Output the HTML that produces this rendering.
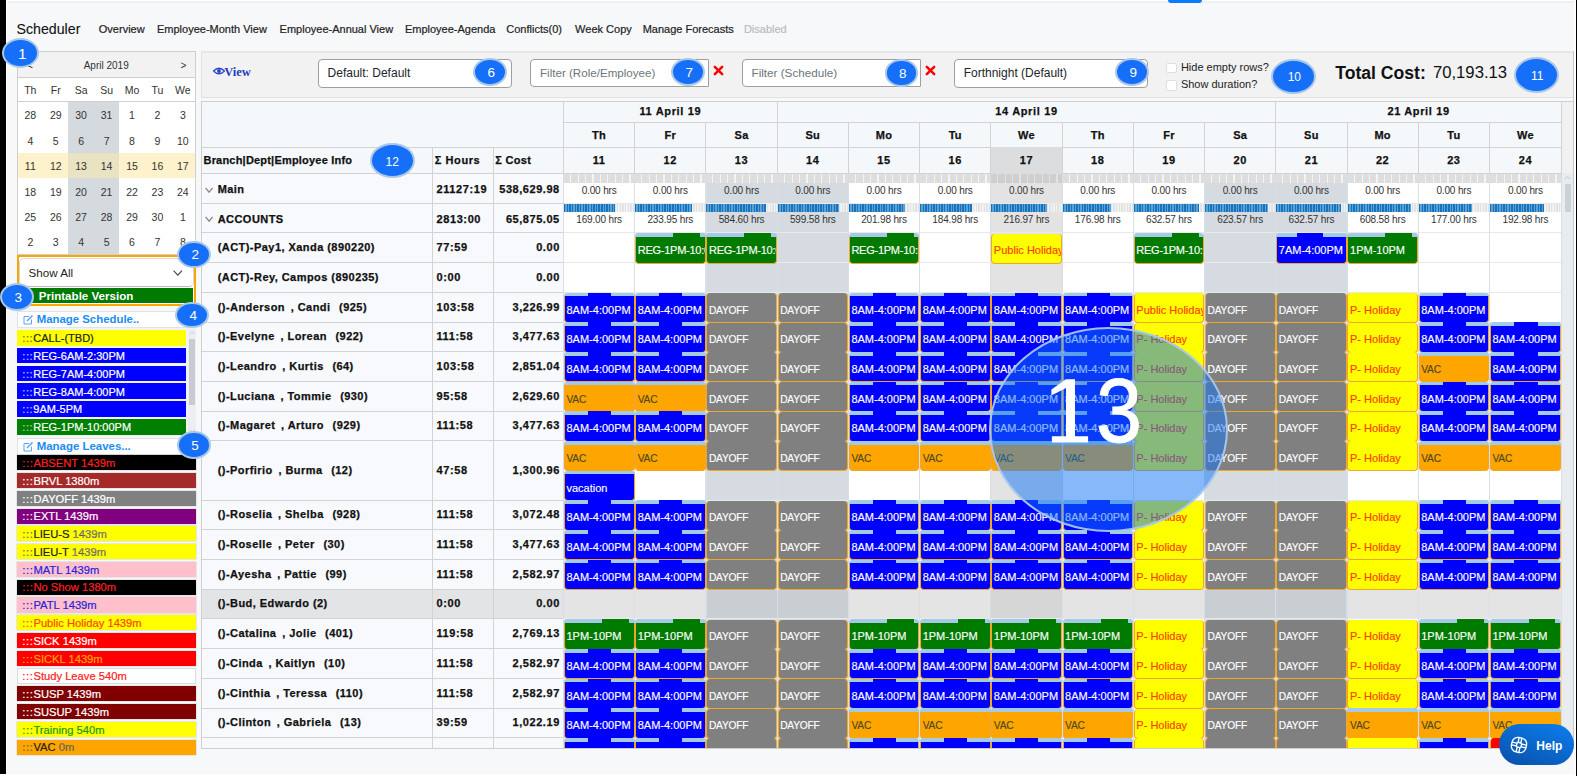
<!DOCTYPE html>
<html><head><meta charset="utf-8"><title>Scheduler</title><style>
*{margin:0;padding:0;box-sizing:border-box}
html,body{width:1577px;height:776px;overflow:hidden}
body{position:relative;background:#f6f8fa;font-family:"Liberation Sans",sans-serif;color:#222}
div{position:absolute}
.t{white-space:pre;line-height:1}
.badge{border-radius:50%;background:#156ff8;border:2px solid #a9c8e8;color:#fff;display:flex;align-items:center;justify-content:center;font-size:13px;line-height:1}
.blk{overflow:hidden}
</style></head>
<body>
<div style="left:0.00px;top:0.00px;width:1577.00px;height:1.00px;background:#fff"></div>
<div style="left:0.00px;top:0.00px;width:6.00px;height:776.00px;background:#000"></div>
<div style="left:6.00px;top:0.00px;width:1.00px;height:776.00px;background:#fdfdfd"></div>
<div style="left:7.00px;top:1.00px;width:1567.00px;height:2.20px;background:#eef1f4"></div>
<div style="left:1167.60px;top:0.00px;width:34.80px;height:3.00px;background:#0a7bff;border-radius:0 0 3px 3px"></div>
<div style="left:0.00px;top:774.00px;width:1577.00px;height:2.00px;background:#fff"></div>
<div class="t" style="left:16.50px;top:22.00px;font-size:14.2px;color:#111;-webkit-text-stroke:0.1px #111">Scheduler</div>
<div class="t" style="left:98.80px;top:23.60px;font-size:11px;color:#222;-webkit-text-stroke:0.2px #222">Overview</div>
<div class="t" style="left:157.00px;top:23.60px;font-size:11px;color:#222;-webkit-text-stroke:0.2px #222">Employee-Month View</div>
<div class="t" style="left:279.60px;top:23.60px;font-size:11px;color:#222;-webkit-text-stroke:0.2px #222">Employee-Annual View</div>
<div class="t" style="left:404.90px;top:23.60px;font-size:11px;color:#222;-webkit-text-stroke:0.2px #222">Employee-Agenda</div>
<div class="t" style="left:506.30px;top:23.60px;font-size:11px;color:#222;-webkit-text-stroke:0.2px #222">Conflicts(0)</div>
<div class="t" style="left:575.10px;top:23.60px;font-size:11px;color:#222;-webkit-text-stroke:0.2px #222">Week Copy</div>
<div class="t" style="left:642.70px;top:23.60px;font-size:11px;color:#222;-webkit-text-stroke:0.2px #222">Manage Forecasts</div>
<div class="t" style="left:743.90px;top:23.60px;font-size:11px;color:#bbb;-webkit-text-stroke:0.2px #bbb">Disabled</div>
<div style="left:16.80px;top:51.20px;width:179.50px;height:204.00px;border:1px solid #cfcfcf;background:#fff"></div>
<div style="left:17.80px;top:52.20px;width:177.50px;height:25.40px;background:#f2f2f2;border-bottom:1px solid #cfcfcf"></div>
<div class="t" style="left:83.70px;top:61.20px;font-size:10px;color:#333">April 2019</div>
<div class="t" style="left:180.50px;top:60.50px;font-size:10px;color:#333">&gt;</div>
<div class="t" style="left:27.00px;top:60.50px;font-size:10px;color:#333">&lt;</div>
<div style="left:17.80px;top:77.60px;width:177.50px;height:24.00px;background:#fff;border-bottom:1px solid #cfcfcf"></div>
<div class="t" style="left:18.30px;top:85.3px;width:24px;text-align:center;font-size:10.5px;color:#333">Th</div>
<div class="t" style="left:43.72px;top:85.3px;width:24px;text-align:center;font-size:10.5px;color:#333">Fr</div>
<div class="t" style="left:69.14px;top:85.3px;width:24px;text-align:center;font-size:10.5px;color:#333">Sa</div>
<div class="t" style="left:94.56px;top:85.3px;width:24px;text-align:center;font-size:10.5px;color:#333">Su</div>
<div class="t" style="left:119.98px;top:85.3px;width:24px;text-align:center;font-size:10.5px;color:#333">Mo</div>
<div class="t" style="left:145.40px;top:85.3px;width:24px;text-align:center;font-size:10.5px;color:#333">Tu</div>
<div class="t" style="left:170.82px;top:85.3px;width:24px;text-align:center;font-size:10.5px;color:#333">We</div>
<div style="left:68.40px;top:102.20px;width:50.80px;height:152.20px;background:#d5dadf"></div>
<div style="left:17.60px;top:152.80px;width:177.90px;height:25.40px;background:#fdf2cb"></div>
<div style="left:68.40px;top:152.80px;width:50.80px;height:25.40px;background:#e9e2c3"></div>
<div class="t" style="left:18.30px;top:110.40px;width:24px;text-align:center;font-size:10.5px;color:#333">28</div>
<div class="t" style="left:43.72px;top:110.40px;width:24px;text-align:center;font-size:10.5px;color:#333">29</div>
<div class="t" style="left:69.14px;top:110.40px;width:24px;text-align:center;font-size:10.5px;color:#333">30</div>
<div class="t" style="left:94.56px;top:110.40px;width:24px;text-align:center;font-size:10.5px;color:#333">31</div>
<div class="t" style="left:119.98px;top:110.40px;width:24px;text-align:center;font-size:10.5px;color:#333">1</div>
<div class="t" style="left:145.40px;top:110.40px;width:24px;text-align:center;font-size:10.5px;color:#333">2</div>
<div class="t" style="left:170.82px;top:110.40px;width:24px;text-align:center;font-size:10.5px;color:#333">3</div>
<div class="t" style="left:18.30px;top:135.80px;width:24px;text-align:center;font-size:10.5px;color:#333">4</div>
<div class="t" style="left:43.72px;top:135.80px;width:24px;text-align:center;font-size:10.5px;color:#333">5</div>
<div class="t" style="left:69.14px;top:135.80px;width:24px;text-align:center;font-size:10.5px;color:#333">6</div>
<div class="t" style="left:94.56px;top:135.80px;width:24px;text-align:center;font-size:10.5px;color:#333">7</div>
<div class="t" style="left:119.98px;top:135.80px;width:24px;text-align:center;font-size:10.5px;color:#333">8</div>
<div class="t" style="left:145.40px;top:135.80px;width:24px;text-align:center;font-size:10.5px;color:#333">9</div>
<div class="t" style="left:170.82px;top:135.80px;width:24px;text-align:center;font-size:10.5px;color:#333">10</div>
<div class="t" style="left:18.30px;top:161.20px;width:24px;text-align:center;font-size:10.5px;color:#333">11</div>
<div class="t" style="left:43.72px;top:161.20px;width:24px;text-align:center;font-size:10.5px;color:#333">12</div>
<div class="t" style="left:69.14px;top:161.20px;width:24px;text-align:center;font-size:10.5px;color:#333">13</div>
<div class="t" style="left:94.56px;top:161.20px;width:24px;text-align:center;font-size:10.5px;color:#333">14</div>
<div class="t" style="left:119.98px;top:161.20px;width:24px;text-align:center;font-size:10.5px;color:#333">15</div>
<div class="t" style="left:145.40px;top:161.20px;width:24px;text-align:center;font-size:10.5px;color:#333">16</div>
<div class="t" style="left:170.82px;top:161.20px;width:24px;text-align:center;font-size:10.5px;color:#333">17</div>
<div class="t" style="left:18.30px;top:186.60px;width:24px;text-align:center;font-size:10.5px;color:#333">18</div>
<div class="t" style="left:43.72px;top:186.60px;width:24px;text-align:center;font-size:10.5px;color:#333">19</div>
<div class="t" style="left:69.14px;top:186.60px;width:24px;text-align:center;font-size:10.5px;color:#333">20</div>
<div class="t" style="left:94.56px;top:186.60px;width:24px;text-align:center;font-size:10.5px;color:#333">21</div>
<div class="t" style="left:119.98px;top:186.60px;width:24px;text-align:center;font-size:10.5px;color:#333">22</div>
<div class="t" style="left:145.40px;top:186.60px;width:24px;text-align:center;font-size:10.5px;color:#333">23</div>
<div class="t" style="left:170.82px;top:186.60px;width:24px;text-align:center;font-size:10.5px;color:#333">24</div>
<div class="t" style="left:18.30px;top:212.00px;width:24px;text-align:center;font-size:10.5px;color:#333">25</div>
<div class="t" style="left:43.72px;top:212.00px;width:24px;text-align:center;font-size:10.5px;color:#333">26</div>
<div class="t" style="left:69.14px;top:212.00px;width:24px;text-align:center;font-size:10.5px;color:#333">27</div>
<div class="t" style="left:94.56px;top:212.00px;width:24px;text-align:center;font-size:10.5px;color:#333">28</div>
<div class="t" style="left:119.98px;top:212.00px;width:24px;text-align:center;font-size:10.5px;color:#333">29</div>
<div class="t" style="left:145.40px;top:212.00px;width:24px;text-align:center;font-size:10.5px;color:#333">30</div>
<div class="t" style="left:170.82px;top:212.00px;width:24px;text-align:center;font-size:10.5px;color:#333">1</div>
<div class="t" style="left:18.30px;top:237.40px;width:24px;text-align:center;font-size:10.5px;color:#333">2</div>
<div class="t" style="left:43.72px;top:237.40px;width:24px;text-align:center;font-size:10.5px;color:#333">3</div>
<div class="t" style="left:69.14px;top:237.40px;width:24px;text-align:center;font-size:10.5px;color:#333">4</div>
<div class="t" style="left:94.56px;top:237.40px;width:24px;text-align:center;font-size:10.5px;color:#333">5</div>
<div class="t" style="left:119.98px;top:237.40px;width:24px;text-align:center;font-size:10.5px;color:#333">6</div>
<div class="t" style="left:145.40px;top:237.40px;width:24px;text-align:center;font-size:10.5px;color:#333">7</div>
<div class="t" style="left:170.82px;top:237.40px;width:24px;text-align:center;font-size:10.5px;color:#333">8</div>
<div style="left:16.80px;top:255.30px;width:179.40px;height:50.70px;border:2px solid #ffa500;border-top-width:2.9px;border-right-width:2.8px;border-bottom-width:2.8px;background:#fff"></div>
<div style="left:19.00px;top:258.20px;width:174.70px;height:28.60px;background:#fff;border:1px solid #d9d9d9;border-bottom-color:#bdbdbd;border-radius:5px"></div>
<div class="t" style="left:28.60px;top:266.50px;font-size:11.6px;color:#222">Show All</div>
<svg style="position:absolute;left:173px;top:269.5px" width="10" height="7" viewBox="0 0 10 7"><path d="M0.6 0.6 L4.8 5.2 L9 0.6" fill="none" stroke="#444" stroke-width="1.1"/></svg>
<div style="left:19.00px;top:287.60px;width:174.30px;height:15.40px;background:#007a00"></div>
<div class="t" style="left:38.70px;top:289.50px;font-size:11.6px;font-weight:bold;color:#fff">Printable Version</div>
<div style="left:16.80px;top:311.30px;width:179.40px;height:16.60px;background:#fff;border:1px solid #e3e3e3"></div>
<svg style="position:absolute;left:23px;top:314.5px" width="10" height="10" viewBox="0 0 10 10"><path d="M6 1.5 H1 V9 H8.5 V4.5" fill="none" stroke="#5aa2f2" stroke-width="1"/><path d="M4 6 L9.5 0.5" stroke="#5aa2f2" stroke-width="1.5"/></svg>
<div class="t" style="left:36.70px;top:314.00px;font-size:11.4px;font-weight:bold;color:#1a8cf0">Manage Schedule..</div>
<div style="left:16.80px;top:328.00px;width:179.40px;height:109.00px;background:#f2f3f5"></div>
<div style="left:17.30px;top:329.90px;width:169.20px;height:15.70px;background:#ffff00"></div>
<div class="t" style="left:22.30px;top:333.10px;font-size:11px;color:#222;-webkit-text-stroke:0.2px #222"><span style="color:#8a8a40;letter-spacing:0.6px">:::</span>CALL-(TBD)</div>
<div style="left:17.30px;top:347.70px;width:169.20px;height:15.70px;background:#0000ff"></div>
<div class="t" style="left:22.30px;top:350.90px;font-size:11px;color:#fff;-webkit-text-stroke:0.2px #fff"><span style="color:#9999ff;letter-spacing:0.6px">:::</span>REG-6AM-2:30PM</div>
<div style="left:17.30px;top:365.50px;width:169.20px;height:15.70px;background:#0000ff"></div>
<div class="t" style="left:22.30px;top:368.70px;font-size:11px;color:#fff;-webkit-text-stroke:0.2px #fff"><span style="color:#9999ff;letter-spacing:0.6px">:::</span>REG-7AM-4:00PM</div>
<div style="left:17.30px;top:383.30px;width:169.20px;height:15.70px;background:#0000ff"></div>
<div class="t" style="left:22.30px;top:386.50px;font-size:11px;color:#fff;-webkit-text-stroke:0.2px #fff"><span style="color:#9999ff;letter-spacing:0.6px">:::</span>REG-8AM-4:00PM</div>
<div style="left:17.30px;top:401.10px;width:169.20px;height:15.70px;background:#0000ff"></div>
<div class="t" style="left:22.30px;top:404.30px;font-size:11px;color:#fff;-webkit-text-stroke:0.2px #fff"><span style="color:#9999ff;letter-spacing:0.6px">:::</span>9AM-5PM</div>
<div style="left:17.30px;top:418.90px;width:169.20px;height:15.70px;background:#008000"></div>
<div class="t" style="left:22.30px;top:422.10px;font-size:11px;color:#fff;-webkit-text-stroke:0.2px #fff"><span style="color:#80b080;letter-spacing:0.6px">:::</span>REG-1PM-10:00PM</div>
<div style="left:187.70px;top:328.50px;width:8.00px;height:108.00px;background:#eceef1"></div>
<div style="left:189.00px;top:338.60px;width:5.50px;height:66.00px;background:#c8ccd2"></div>
<svg style="position:absolute;left:188.5px;top:331px" width="6" height="4" viewBox="0 0 6 4"><path d="M0.5 3.5 L3 0.8 L5.5 3.5" fill="none" stroke="#c0c4c8" stroke-width="0.8"/></svg>
<svg style="position:absolute;left:188.5px;top:429px" width="6" height="4" viewBox="0 0 6 4"><path d="M0.5 0.5 L3 3.2 L5.5 0.5" fill="none" stroke="#c0c4c8" stroke-width="0.8"/></svg>
<div style="left:16.80px;top:438.40px;width:179.40px;height:16.60px;background:#fff;border:1px solid #e3e3e3"></div>
<svg style="position:absolute;left:23px;top:441.7px" width="10" height="10" viewBox="0 0 10 10"><path d="M6 1.5 H1 V9 H8.5 V4.5" fill="none" stroke="#5aa2f2" stroke-width="1"/><path d="M4 6 L9.5 0.5" stroke="#5aa2f2" stroke-width="1.5"/></svg>
<div class="t" style="left:36.70px;top:441.20px;font-size:11.45px;font-weight:bold;color:#1a8cf0">Manage Leaves...</div>
<div style="left:17.30px;top:455.20px;width:178.60px;height:15.20px;background:#000;box-shadow:0 0 0 0.6px rgba(0,0,0,0.12);"></div>
<div class="t" style="left:22.30px;top:458.10px;font-size:11.2px;color:#ff2020;-webkit-text-stroke:0.2px #ff2020"><span style="color:#ff2020;letter-spacing:0.6px">:::</span>ABSENT<span style="color:#ff2020"> 1439m</span></div>
<div style="left:17.30px;top:472.97px;width:178.60px;height:15.20px;background:#a52a2a;box-shadow:0 0 0 0.6px rgba(0,0,0,0.12);"></div>
<div class="t" style="left:22.30px;top:475.87px;font-size:11.2px;color:#fff;-webkit-text-stroke:0.2px #fff"><span style="color:#fff;letter-spacing:0.6px">:::</span>BRVL<span style="color:#fff"> 1380m</span></div>
<div style="left:17.30px;top:490.74px;width:178.60px;height:15.20px;background:#808080;box-shadow:0 0 0 0.6px rgba(0,0,0,0.12);"></div>
<div class="t" style="left:22.30px;top:493.64px;font-size:11.2px;color:#fff;-webkit-text-stroke:0.2px #fff"><span style="color:#fff;letter-spacing:0.6px">:::</span>DAYOFF<span style="color:#fff"> 1439m</span></div>
<div style="left:17.30px;top:508.51px;width:178.60px;height:15.20px;background:#800080;box-shadow:0 0 0 0.6px rgba(0,0,0,0.12);"></div>
<div class="t" style="left:22.30px;top:511.41px;font-size:11.2px;color:#fff;-webkit-text-stroke:0.2px #fff"><span style="color:#fff;letter-spacing:0.6px">:::</span>EXTL<span style="color:#fff"> 1439m</span></div>
<div style="left:17.30px;top:526.28px;width:178.60px;height:15.20px;background:#ffff00;box-shadow:0 0 0 0.6px rgba(0,0,0,0.12);"></div>
<div class="t" style="left:22.30px;top:529.18px;font-size:11.2px;color:#222;-webkit-text-stroke:0.2px #222"><span style="color:#8a8a9a;letter-spacing:0.6px">:::</span>LIEU-S<span style="color:#8e8e9a"> 1439m</span></div>
<div style="left:17.30px;top:544.05px;width:178.60px;height:15.20px;background:#ffff00;box-shadow:0 0 0 0.6px rgba(0,0,0,0.12);"></div>
<div class="t" style="left:22.30px;top:546.95px;font-size:11.2px;color:#222;-webkit-text-stroke:0.2px #222"><span style="color:#8a8a9a;letter-spacing:0.6px">:::</span>LIEU-T<span style="color:#8e8e9a"> 1439m</span></div>
<div style="left:17.30px;top:561.82px;width:178.60px;height:15.20px;background:#ffc0cb;box-shadow:0 0 0 0.6px rgba(0,0,0,0.12);"></div>
<div class="t" style="left:22.30px;top:564.72px;font-size:11.2px;color:#2323e0;-webkit-text-stroke:0.2px #2323e0"><span style="color:#2323e0;letter-spacing:0.6px">:::</span>MATL<span style="color:#2323e0"> 1439m</span></div>
<div style="left:17.30px;top:579.59px;width:178.60px;height:15.20px;background:#000;box-shadow:0 0 0 0.6px rgba(0,0,0,0.12);"></div>
<div class="t" style="left:22.30px;top:582.49px;font-size:11.2px;color:#ff2020;-webkit-text-stroke:0.2px #ff2020"><span style="color:#ff2020;letter-spacing:0.6px">:::</span>No Show<span style="color:#ff2020"> 1380m</span></div>
<div style="left:17.30px;top:597.36px;width:178.60px;height:15.20px;background:#ffc0cb;box-shadow:0 0 0 0.6px rgba(0,0,0,0.12);"></div>
<div class="t" style="left:22.30px;top:600.26px;font-size:11.2px;color:#2323e0;-webkit-text-stroke:0.2px #2323e0"><span style="color:#2323e0;letter-spacing:0.6px">:::</span>PATL<span style="color:#2323e0"> 1439m</span></div>
<div style="left:17.30px;top:615.13px;width:178.60px;height:15.20px;background:#ffff00;box-shadow:0 0 0 0.6px rgba(0,0,0,0.12);"></div>
<div class="t" style="left:22.30px;top:618.03px;font-size:11.2px;color:#ff4500;-webkit-text-stroke:0.2px #ff4500"><span style="color:#ff4500;letter-spacing:0.6px">:::</span>Public Holiday<span style="color:#ff4500"> 1439m</span></div>
<div style="left:17.30px;top:632.90px;width:178.60px;height:15.20px;background:#ff0000;box-shadow:0 0 0 0.6px rgba(0,0,0,0.12);"></div>
<div class="t" style="left:22.30px;top:635.80px;font-size:11.2px;color:#fff;-webkit-text-stroke:0.2px #fff"><span style="color:#fff;letter-spacing:0.6px">:::</span>SICK<span style="color:#fff"> 1439m</span></div>
<div style="left:17.30px;top:650.67px;width:178.60px;height:15.20px;background:#ff0000;box-shadow:0 0 0 0.6px rgba(0,0,0,0.12);"></div>
<div class="t" style="left:22.30px;top:653.57px;font-size:11.2px;color:#ffa500;-webkit-text-stroke:0.2px #ffa500"><span style="color:#ffa500;letter-spacing:0.6px">:::</span>SICKL<span style="color:#ffa500"> 1439m</span></div>
<div style="left:17.30px;top:668.44px;width:178.60px;height:15.20px;background:#fff;border:1px solid #dcdcdc;"></div>
<div class="t" style="left:22.30px;top:671.34px;font-size:11.2px;color:#ff2020;-webkit-text-stroke:0.2px #ff2020"><span style="color:#ff2020;letter-spacing:0.6px">:::</span>Study Leave<span style="color:#ff2020"> 540m</span></div>
<div style="left:17.30px;top:686.21px;width:178.60px;height:15.20px;background:#800000;box-shadow:0 0 0 0.6px rgba(0,0,0,0.12);"></div>
<div class="t" style="left:22.30px;top:689.11px;font-size:11.2px;color:#fff;-webkit-text-stroke:0.2px #fff"><span style="color:#fff;letter-spacing:0.6px">:::</span>SUSP<span style="color:#fff"> 1439m</span></div>
<div style="left:17.30px;top:703.98px;width:178.60px;height:15.20px;background:#800000;box-shadow:0 0 0 0.6px rgba(0,0,0,0.12);"></div>
<div class="t" style="left:22.30px;top:706.88px;font-size:11.2px;color:#fff;-webkit-text-stroke:0.2px #fff"><span style="color:#fff;letter-spacing:0.6px">:::</span>SUSUP<span style="color:#fff"> 1439m</span></div>
<div style="left:17.30px;top:721.75px;width:178.60px;height:15.20px;background:#ffff00;box-shadow:0 0 0 0.6px rgba(0,0,0,0.12);"></div>
<div class="t" style="left:22.30px;top:724.65px;font-size:11.2px;color:#1a9a1a;-webkit-text-stroke:0.2px #1a9a1a"><span style="color:#1a9a1a;letter-spacing:0.6px">:::</span>Training<span style="color:#1a9a1a"> 540m</span></div>
<div style="left:17.30px;top:739.52px;width:178.60px;height:15.20px;background:#ffa500;box-shadow:0 0 0 0.6px rgba(0,0,0,0.12);"></div>
<div class="t" style="left:22.30px;top:742.42px;font-size:11.2px;color:#222;-webkit-text-stroke:0.2px #222"><span style="color:#8a7a70;letter-spacing:0.6px">:::</span>VAC<span style="color:#8a7a70"> 0m</span></div>
<div style="left:200.50px;top:51.30px;width:1373.00px;height:46.50px;background:#f2f2f2;border:1px solid #e2e2e2;border-top:2px solid #e6e6e6"></div>
<svg style="position:absolute;left:212.5px;top:66.9px" width="12" height="8" viewBox="0 0 12 8"><path d="M0.5 4 Q6 -1.5 11.5 4 Q6 9.5 0.5 4 Z" fill="none" stroke="#2a44c8" stroke-width="1.2"/><circle cx="6" cy="4" r="1.9" fill="#2a44c8"/></svg>
<div class="t" style="left:224.20px;top:65.60px;font-family:'Liberation Serif',serif;font-weight:bold;font-size:12.5px;color:#1f3fc0">View</div>
<div style="left:317.90px;top:59.00px;width:193.80px;height:28.70px;background:#fff;border:1px solid #9aa0a6;border-radius:4px"></div>
<div class="t" style="left:327.60px;top:67.20px;font-size:12px;color:#212529">Default: Default</div>
<div style="left:530.10px;top:59.20px;width:178.50px;height:28.20px;background:#fff;border:1px solid #9aa0a6;border-radius:4px 1px 1px 4px"></div>
<div class="t" style="left:540.00px;top:67.20px;font-size:11.6px;color:#6c757d">Filter (Role/Employee)</div>
<svg style="position:absolute;left:712.5px;top:65.4px" width="11" height="11" viewBox="0 0 11 11"><path d="M1.8 1.8 L9.2 9.2 M9.2 1.8 L1.8 9.2" stroke="#ff0000" stroke-width="2.5" stroke-linecap="round"/></svg>
<div style="left:742.00px;top:59.20px;width:178.80px;height:28.20px;background:#fff;border:1px solid #9aa0a6;border-radius:4px 1px 1px 4px"></div>
<div class="t" style="left:751.50px;top:67.20px;font-size:11.7px;color:#6c757d">Filter (Schedule)</div>
<svg style="position:absolute;left:924.7px;top:65.4px" width="11" height="11" viewBox="0 0 11 11"><path d="M1.8 1.8 L9.2 9.2 M9.2 1.8 L1.8 9.2" stroke="#ff0000" stroke-width="2.5" stroke-linecap="round"/></svg>
<div style="left:954.00px;top:59.00px;width:194.00px;height:28.70px;background:#fff;border:1px solid #9aa0a6;border-radius:4px"></div>
<div class="t" style="left:963.70px;top:67.20px;font-size:12px;color:#212529">Forthnight (Default)</div>
<div style="left:1166.40px;top:63.30px;width:10.20px;height:10.20px;background:#fff;border:1px solid #dcdfe3;border-radius:2px"></div>
<div style="left:1166.40px;top:80.40px;width:10.20px;height:10.20px;background:#fff;border:1px solid #dcdfe3;border-radius:2px"></div>
<div class="t" style="left:1180.90px;top:62.00px;font-size:11px;color:#222">Hide empty rows?</div>
<div class="t" style="left:1180.90px;top:79.10px;font-size:11px;color:#222">Show duration?</div>
<div class="t" style="left:1335.20px;top:64.80px;font-size:17.6px;font-weight:bold;color:#111">Total Cost:</div>
<div class="t" style="left:1432.90px;top:64.80px;font-size:16.7px;color:#111">70,193.13</div>
<div style="left:200.50px;top:100.50px;width:1373.00px;height:648.00px;background:#f7f9fc;border:1px solid #cfcfcf;border-bottom-width:1.5px"></div>
<div style="left:201.50px;top:101.50px;width:1360.00px;height:71.70px;background:#f5f8fb"></div>
<div style="left:1562.00px;top:101.50px;width:11.00px;height:72.00px;background:#f1f1f1"></div>
<div style="left:0;top:173.60px;width:1562px;height:574.10px;overflow:hidden">
<div style="left:201.50px;top:0.00px;width:362.00px;height:29.69px;background:#f7f9fc"></div>
<div style="left:563.50px;top:0.00px;width:71.23px;height:29.69px;background:#fff"></div>
<div style="left:634.73px;top:0.00px;width:71.23px;height:29.69px;background:#fff"></div>
<div style="left:705.96px;top:0.00px;width:71.23px;height:29.69px;background:#d5dbe0"></div>
<div style="left:777.19px;top:0.00px;width:71.23px;height:29.69px;background:#d5dbe0"></div>
<div style="left:848.42px;top:0.00px;width:71.23px;height:29.69px;background:#fff"></div>
<div style="left:919.65px;top:0.00px;width:71.23px;height:29.69px;background:#fff"></div>
<div style="left:990.88px;top:0.00px;width:71.23px;height:29.69px;background:#e3e3e3"></div>
<div style="left:1062.11px;top:0.00px;width:71.23px;height:29.69px;background:#fff"></div>
<div style="left:1133.34px;top:0.00px;width:71.23px;height:29.69px;background:#fff"></div>
<div style="left:1204.57px;top:0.00px;width:71.23px;height:29.69px;background:#d5dbe0"></div>
<div style="left:1275.80px;top:0.00px;width:71.23px;height:29.69px;background:#d5dbe0"></div>
<div style="left:1347.03px;top:0.00px;width:71.23px;height:29.69px;background:#fff"></div>
<div style="left:1418.26px;top:0.00px;width:71.23px;height:29.69px;background:#fff"></div>
<div style="left:1489.49px;top:0.00px;width:71.91px;height:29.69px;background:#fff"></div>
<div style="left:201.50px;top:29.69px;width:362.00px;height:29.69px;background:#f7f9fc"></div>
<div style="left:563.50px;top:29.69px;width:71.23px;height:29.69px;background:#fff"></div>
<div style="left:634.73px;top:29.69px;width:71.23px;height:29.69px;background:#fff"></div>
<div style="left:705.96px;top:29.69px;width:71.23px;height:29.69px;background:#d5dbe0"></div>
<div style="left:777.19px;top:29.69px;width:71.23px;height:29.69px;background:#d5dbe0"></div>
<div style="left:848.42px;top:29.69px;width:71.23px;height:29.69px;background:#fff"></div>
<div style="left:919.65px;top:29.69px;width:71.23px;height:29.69px;background:#fff"></div>
<div style="left:990.88px;top:29.69px;width:71.23px;height:29.69px;background:#e3e3e3"></div>
<div style="left:1062.11px;top:29.69px;width:71.23px;height:29.69px;background:#fff"></div>
<div style="left:1133.34px;top:29.69px;width:71.23px;height:29.69px;background:#fff"></div>
<div style="left:1204.57px;top:29.69px;width:71.23px;height:29.69px;background:#d5dbe0"></div>
<div style="left:1275.80px;top:29.69px;width:71.23px;height:29.69px;background:#d5dbe0"></div>
<div style="left:1347.03px;top:29.69px;width:71.23px;height:29.69px;background:#fff"></div>
<div style="left:1418.26px;top:29.69px;width:71.23px;height:29.69px;background:#fff"></div>
<div style="left:1489.49px;top:29.69px;width:71.91px;height:29.69px;background:#fff"></div>
<div style="left:201.50px;top:59.38px;width:362.00px;height:29.69px;background:#f7f9fc"></div>
<div style="left:563.50px;top:59.38px;width:71.23px;height:29.69px;background:#fff"></div>
<div style="left:634.73px;top:59.38px;width:71.23px;height:29.69px;background:#fff"></div>
<div style="left:705.96px;top:59.38px;width:71.23px;height:29.69px;background:#d5dbe0"></div>
<div style="left:777.19px;top:59.38px;width:71.23px;height:29.69px;background:#d5dbe0"></div>
<div style="left:848.42px;top:59.38px;width:71.23px;height:29.69px;background:#fff"></div>
<div style="left:919.65px;top:59.38px;width:71.23px;height:29.69px;background:#fff"></div>
<div style="left:990.88px;top:59.38px;width:71.23px;height:29.69px;background:#e3e3e3"></div>
<div style="left:1062.11px;top:59.38px;width:71.23px;height:29.69px;background:#fff"></div>
<div style="left:1133.34px;top:59.38px;width:71.23px;height:29.69px;background:#fff"></div>
<div style="left:1204.57px;top:59.38px;width:71.23px;height:29.69px;background:#d5dbe0"></div>
<div style="left:1275.80px;top:59.38px;width:71.23px;height:29.69px;background:#d5dbe0"></div>
<div style="left:1347.03px;top:59.38px;width:71.23px;height:29.69px;background:#fff"></div>
<div style="left:1418.26px;top:59.38px;width:71.23px;height:29.69px;background:#fff"></div>
<div style="left:1489.49px;top:59.38px;width:71.91px;height:29.69px;background:#fff"></div>
<div style="left:201.50px;top:89.07px;width:362.00px;height:29.69px;background:#f7f9fc"></div>
<div style="left:563.50px;top:89.07px;width:71.23px;height:29.69px;background:#fff"></div>
<div style="left:634.73px;top:89.07px;width:71.23px;height:29.69px;background:#fff"></div>
<div style="left:705.96px;top:89.07px;width:71.23px;height:29.69px;background:#d5dbe0"></div>
<div style="left:777.19px;top:89.07px;width:71.23px;height:29.69px;background:#d5dbe0"></div>
<div style="left:848.42px;top:89.07px;width:71.23px;height:29.69px;background:#fff"></div>
<div style="left:919.65px;top:89.07px;width:71.23px;height:29.69px;background:#fff"></div>
<div style="left:990.88px;top:89.07px;width:71.23px;height:29.69px;background:#e3e3e3"></div>
<div style="left:1062.11px;top:89.07px;width:71.23px;height:29.69px;background:#fff"></div>
<div style="left:1133.34px;top:89.07px;width:71.23px;height:29.69px;background:#fff"></div>
<div style="left:1204.57px;top:89.07px;width:71.23px;height:29.69px;background:#d5dbe0"></div>
<div style="left:1275.80px;top:89.07px;width:71.23px;height:29.69px;background:#d5dbe0"></div>
<div style="left:1347.03px;top:89.07px;width:71.23px;height:29.69px;background:#fff"></div>
<div style="left:1418.26px;top:89.07px;width:71.23px;height:29.69px;background:#fff"></div>
<div style="left:1489.49px;top:89.07px;width:71.91px;height:29.69px;background:#fff"></div>
<div style="left:201.50px;top:118.76px;width:362.00px;height:29.69px;background:#f7f9fc"></div>
<div style="left:563.50px;top:118.76px;width:71.23px;height:29.69px;background:#fff"></div>
<div style="left:634.73px;top:118.76px;width:71.23px;height:29.69px;background:#fff"></div>
<div style="left:705.96px;top:118.76px;width:71.23px;height:29.69px;background:#d5dbe0"></div>
<div style="left:777.19px;top:118.76px;width:71.23px;height:29.69px;background:#d5dbe0"></div>
<div style="left:848.42px;top:118.76px;width:71.23px;height:29.69px;background:#fff"></div>
<div style="left:919.65px;top:118.76px;width:71.23px;height:29.69px;background:#fff"></div>
<div style="left:990.88px;top:118.76px;width:71.23px;height:29.69px;background:#e3e3e3"></div>
<div style="left:1062.11px;top:118.76px;width:71.23px;height:29.69px;background:#fff"></div>
<div style="left:1133.34px;top:118.76px;width:71.23px;height:29.69px;background:#fff"></div>
<div style="left:1204.57px;top:118.76px;width:71.23px;height:29.69px;background:#d5dbe0"></div>
<div style="left:1275.80px;top:118.76px;width:71.23px;height:29.69px;background:#d5dbe0"></div>
<div style="left:1347.03px;top:118.76px;width:71.23px;height:29.69px;background:#fff"></div>
<div style="left:1418.26px;top:118.76px;width:71.23px;height:29.69px;background:#fff"></div>
<div style="left:1489.49px;top:118.76px;width:71.91px;height:29.69px;background:#fff"></div>
<div style="left:201.50px;top:148.45px;width:362.00px;height:29.69px;background:#f7f9fc"></div>
<div style="left:563.50px;top:148.45px;width:71.23px;height:29.69px;background:#fff"></div>
<div style="left:634.73px;top:148.45px;width:71.23px;height:29.69px;background:#fff"></div>
<div style="left:705.96px;top:148.45px;width:71.23px;height:29.69px;background:#d5dbe0"></div>
<div style="left:777.19px;top:148.45px;width:71.23px;height:29.69px;background:#d5dbe0"></div>
<div style="left:848.42px;top:148.45px;width:71.23px;height:29.69px;background:#fff"></div>
<div style="left:919.65px;top:148.45px;width:71.23px;height:29.69px;background:#fff"></div>
<div style="left:990.88px;top:148.45px;width:71.23px;height:29.69px;background:#e3e3e3"></div>
<div style="left:1062.11px;top:148.45px;width:71.23px;height:29.69px;background:#fff"></div>
<div style="left:1133.34px;top:148.45px;width:71.23px;height:29.69px;background:#fff"></div>
<div style="left:1204.57px;top:148.45px;width:71.23px;height:29.69px;background:#d5dbe0"></div>
<div style="left:1275.80px;top:148.45px;width:71.23px;height:29.69px;background:#d5dbe0"></div>
<div style="left:1347.03px;top:148.45px;width:71.23px;height:29.69px;background:#fff"></div>
<div style="left:1418.26px;top:148.45px;width:71.23px;height:29.69px;background:#fff"></div>
<div style="left:1489.49px;top:148.45px;width:71.91px;height:29.69px;background:#fff"></div>
<div style="left:201.50px;top:178.14px;width:362.00px;height:29.69px;background:#f7f9fc"></div>
<div style="left:563.50px;top:178.14px;width:71.23px;height:29.69px;background:#fff"></div>
<div style="left:634.73px;top:178.14px;width:71.23px;height:29.69px;background:#fff"></div>
<div style="left:705.96px;top:178.14px;width:71.23px;height:29.69px;background:#d5dbe0"></div>
<div style="left:777.19px;top:178.14px;width:71.23px;height:29.69px;background:#d5dbe0"></div>
<div style="left:848.42px;top:178.14px;width:71.23px;height:29.69px;background:#fff"></div>
<div style="left:919.65px;top:178.14px;width:71.23px;height:29.69px;background:#fff"></div>
<div style="left:990.88px;top:178.14px;width:71.23px;height:29.69px;background:#e3e3e3"></div>
<div style="left:1062.11px;top:178.14px;width:71.23px;height:29.69px;background:#fff"></div>
<div style="left:1133.34px;top:178.14px;width:71.23px;height:29.69px;background:#fff"></div>
<div style="left:1204.57px;top:178.14px;width:71.23px;height:29.69px;background:#d5dbe0"></div>
<div style="left:1275.80px;top:178.14px;width:71.23px;height:29.69px;background:#d5dbe0"></div>
<div style="left:1347.03px;top:178.14px;width:71.23px;height:29.69px;background:#fff"></div>
<div style="left:1418.26px;top:178.14px;width:71.23px;height:29.69px;background:#fff"></div>
<div style="left:1489.49px;top:178.14px;width:71.91px;height:29.69px;background:#fff"></div>
<div style="left:201.50px;top:207.83px;width:362.00px;height:29.69px;background:#f7f9fc"></div>
<div style="left:563.50px;top:207.83px;width:71.23px;height:29.69px;background:#fff"></div>
<div style="left:634.73px;top:207.83px;width:71.23px;height:29.69px;background:#fff"></div>
<div style="left:705.96px;top:207.83px;width:71.23px;height:29.69px;background:#d5dbe0"></div>
<div style="left:777.19px;top:207.83px;width:71.23px;height:29.69px;background:#d5dbe0"></div>
<div style="left:848.42px;top:207.83px;width:71.23px;height:29.69px;background:#fff"></div>
<div style="left:919.65px;top:207.83px;width:71.23px;height:29.69px;background:#fff"></div>
<div style="left:990.88px;top:207.83px;width:71.23px;height:29.69px;background:#e3e3e3"></div>
<div style="left:1062.11px;top:207.83px;width:71.23px;height:29.69px;background:#fff"></div>
<div style="left:1133.34px;top:207.83px;width:71.23px;height:29.69px;background:#fff"></div>
<div style="left:1204.57px;top:207.83px;width:71.23px;height:29.69px;background:#d5dbe0"></div>
<div style="left:1275.80px;top:207.83px;width:71.23px;height:29.69px;background:#d5dbe0"></div>
<div style="left:1347.03px;top:207.83px;width:71.23px;height:29.69px;background:#fff"></div>
<div style="left:1418.26px;top:207.83px;width:71.23px;height:29.69px;background:#fff"></div>
<div style="left:1489.49px;top:207.83px;width:71.91px;height:29.69px;background:#fff"></div>
<div style="left:201.50px;top:237.52px;width:362.00px;height:29.69px;background:#f7f9fc"></div>
<div style="left:563.50px;top:237.52px;width:71.23px;height:29.69px;background:#fff"></div>
<div style="left:634.73px;top:237.52px;width:71.23px;height:29.69px;background:#fff"></div>
<div style="left:705.96px;top:237.52px;width:71.23px;height:29.69px;background:#d5dbe0"></div>
<div style="left:777.19px;top:237.52px;width:71.23px;height:29.69px;background:#d5dbe0"></div>
<div style="left:848.42px;top:237.52px;width:71.23px;height:29.69px;background:#fff"></div>
<div style="left:919.65px;top:237.52px;width:71.23px;height:29.69px;background:#fff"></div>
<div style="left:990.88px;top:237.52px;width:71.23px;height:29.69px;background:#e3e3e3"></div>
<div style="left:1062.11px;top:237.52px;width:71.23px;height:29.69px;background:#fff"></div>
<div style="left:1133.34px;top:237.52px;width:71.23px;height:29.69px;background:#fff"></div>
<div style="left:1204.57px;top:237.52px;width:71.23px;height:29.69px;background:#d5dbe0"></div>
<div style="left:1275.80px;top:237.52px;width:71.23px;height:29.69px;background:#d5dbe0"></div>
<div style="left:1347.03px;top:237.52px;width:71.23px;height:29.69px;background:#fff"></div>
<div style="left:1418.26px;top:237.52px;width:71.23px;height:29.69px;background:#fff"></div>
<div style="left:1489.49px;top:237.52px;width:71.91px;height:29.69px;background:#fff"></div>
<div style="left:201.50px;top:267.21px;width:362.00px;height:59.38px;background:#f7f9fc"></div>
<div style="left:563.50px;top:267.21px;width:71.23px;height:59.38px;background:#fff"></div>
<div style="left:634.73px;top:267.21px;width:71.23px;height:59.38px;background:#fff"></div>
<div style="left:705.96px;top:267.21px;width:71.23px;height:59.38px;background:#d5dbe0"></div>
<div style="left:777.19px;top:267.21px;width:71.23px;height:59.38px;background:#d5dbe0"></div>
<div style="left:848.42px;top:267.21px;width:71.23px;height:59.38px;background:#fff"></div>
<div style="left:919.65px;top:267.21px;width:71.23px;height:59.38px;background:#fff"></div>
<div style="left:990.88px;top:267.21px;width:71.23px;height:59.38px;background:#e3e3e3"></div>
<div style="left:1062.11px;top:267.21px;width:71.23px;height:59.38px;background:#fff"></div>
<div style="left:1133.34px;top:267.21px;width:71.23px;height:59.38px;background:#fff"></div>
<div style="left:1204.57px;top:267.21px;width:71.23px;height:59.38px;background:#d5dbe0"></div>
<div style="left:1275.80px;top:267.21px;width:71.23px;height:59.38px;background:#d5dbe0"></div>
<div style="left:1347.03px;top:267.21px;width:71.23px;height:59.38px;background:#fff"></div>
<div style="left:1418.26px;top:267.21px;width:71.23px;height:59.38px;background:#fff"></div>
<div style="left:1489.49px;top:267.21px;width:71.91px;height:59.38px;background:#fff"></div>
<div style="left:201.50px;top:326.59px;width:362.00px;height:29.69px;background:#f7f9fc"></div>
<div style="left:563.50px;top:326.59px;width:71.23px;height:29.69px;background:#fff"></div>
<div style="left:634.73px;top:326.59px;width:71.23px;height:29.69px;background:#fff"></div>
<div style="left:705.96px;top:326.59px;width:71.23px;height:29.69px;background:#d5dbe0"></div>
<div style="left:777.19px;top:326.59px;width:71.23px;height:29.69px;background:#d5dbe0"></div>
<div style="left:848.42px;top:326.59px;width:71.23px;height:29.69px;background:#fff"></div>
<div style="left:919.65px;top:326.59px;width:71.23px;height:29.69px;background:#fff"></div>
<div style="left:990.88px;top:326.59px;width:71.23px;height:29.69px;background:#e3e3e3"></div>
<div style="left:1062.11px;top:326.59px;width:71.23px;height:29.69px;background:#fff"></div>
<div style="left:1133.34px;top:326.59px;width:71.23px;height:29.69px;background:#fff"></div>
<div style="left:1204.57px;top:326.59px;width:71.23px;height:29.69px;background:#d5dbe0"></div>
<div style="left:1275.80px;top:326.59px;width:71.23px;height:29.69px;background:#d5dbe0"></div>
<div style="left:1347.03px;top:326.59px;width:71.23px;height:29.69px;background:#fff"></div>
<div style="left:1418.26px;top:326.59px;width:71.23px;height:29.69px;background:#fff"></div>
<div style="left:1489.49px;top:326.59px;width:71.91px;height:29.69px;background:#fff"></div>
<div style="left:201.50px;top:356.28px;width:362.00px;height:29.69px;background:#f7f9fc"></div>
<div style="left:563.50px;top:356.28px;width:71.23px;height:29.69px;background:#fff"></div>
<div style="left:634.73px;top:356.28px;width:71.23px;height:29.69px;background:#fff"></div>
<div style="left:705.96px;top:356.28px;width:71.23px;height:29.69px;background:#d5dbe0"></div>
<div style="left:777.19px;top:356.28px;width:71.23px;height:29.69px;background:#d5dbe0"></div>
<div style="left:848.42px;top:356.28px;width:71.23px;height:29.69px;background:#fff"></div>
<div style="left:919.65px;top:356.28px;width:71.23px;height:29.69px;background:#fff"></div>
<div style="left:990.88px;top:356.28px;width:71.23px;height:29.69px;background:#e3e3e3"></div>
<div style="left:1062.11px;top:356.28px;width:71.23px;height:29.69px;background:#fff"></div>
<div style="left:1133.34px;top:356.28px;width:71.23px;height:29.69px;background:#fff"></div>
<div style="left:1204.57px;top:356.28px;width:71.23px;height:29.69px;background:#d5dbe0"></div>
<div style="left:1275.80px;top:356.28px;width:71.23px;height:29.69px;background:#d5dbe0"></div>
<div style="left:1347.03px;top:356.28px;width:71.23px;height:29.69px;background:#fff"></div>
<div style="left:1418.26px;top:356.28px;width:71.23px;height:29.69px;background:#fff"></div>
<div style="left:1489.49px;top:356.28px;width:71.91px;height:29.69px;background:#fff"></div>
<div style="left:201.50px;top:385.97px;width:362.00px;height:29.69px;background:#f7f9fc"></div>
<div style="left:563.50px;top:385.97px;width:71.23px;height:29.69px;background:#fff"></div>
<div style="left:634.73px;top:385.97px;width:71.23px;height:29.69px;background:#fff"></div>
<div style="left:705.96px;top:385.97px;width:71.23px;height:29.69px;background:#d5dbe0"></div>
<div style="left:777.19px;top:385.97px;width:71.23px;height:29.69px;background:#d5dbe0"></div>
<div style="left:848.42px;top:385.97px;width:71.23px;height:29.69px;background:#fff"></div>
<div style="left:919.65px;top:385.97px;width:71.23px;height:29.69px;background:#fff"></div>
<div style="left:990.88px;top:385.97px;width:71.23px;height:29.69px;background:#e3e3e3"></div>
<div style="left:1062.11px;top:385.97px;width:71.23px;height:29.69px;background:#fff"></div>
<div style="left:1133.34px;top:385.97px;width:71.23px;height:29.69px;background:#fff"></div>
<div style="left:1204.57px;top:385.97px;width:71.23px;height:29.69px;background:#d5dbe0"></div>
<div style="left:1275.80px;top:385.97px;width:71.23px;height:29.69px;background:#d5dbe0"></div>
<div style="left:1347.03px;top:385.97px;width:71.23px;height:29.69px;background:#fff"></div>
<div style="left:1418.26px;top:385.97px;width:71.23px;height:29.69px;background:#fff"></div>
<div style="left:1489.49px;top:385.97px;width:71.91px;height:29.69px;background:#fff"></div>
<div style="left:201.50px;top:415.66px;width:362.00px;height:29.69px;background:#e3e4e6"></div>
<div style="left:563.50px;top:415.66px;width:71.23px;height:29.69px;background:#e4e4e4"></div>
<div style="left:634.73px;top:415.66px;width:71.23px;height:29.69px;background:#e4e4e4"></div>
<div style="left:705.96px;top:415.66px;width:71.23px;height:29.69px;background:#c9ced3"></div>
<div style="left:777.19px;top:415.66px;width:71.23px;height:29.69px;background:#c9ced3"></div>
<div style="left:848.42px;top:415.66px;width:71.23px;height:29.69px;background:#e4e4e4"></div>
<div style="left:919.65px;top:415.66px;width:71.23px;height:29.69px;background:#e4e4e4"></div>
<div style="left:990.88px;top:415.66px;width:71.23px;height:29.69px;background:#d6d6d6"></div>
<div style="left:1062.11px;top:415.66px;width:71.23px;height:29.69px;background:#e4e4e4"></div>
<div style="left:1133.34px;top:415.66px;width:71.23px;height:29.69px;background:#e4e4e4"></div>
<div style="left:1204.57px;top:415.66px;width:71.23px;height:29.69px;background:#c9ced3"></div>
<div style="left:1275.80px;top:415.66px;width:71.23px;height:29.69px;background:#c9ced3"></div>
<div style="left:1347.03px;top:415.66px;width:71.23px;height:29.69px;background:#e4e4e4"></div>
<div style="left:1418.26px;top:415.66px;width:71.23px;height:29.69px;background:#e4e4e4"></div>
<div style="left:1489.49px;top:415.66px;width:71.91px;height:29.69px;background:#e4e4e4"></div>
<div style="left:201.50px;top:445.35px;width:362.00px;height:29.69px;background:#f7f9fc"></div>
<div style="left:563.50px;top:445.35px;width:71.23px;height:29.69px;background:#fff"></div>
<div style="left:634.73px;top:445.35px;width:71.23px;height:29.69px;background:#fff"></div>
<div style="left:705.96px;top:445.35px;width:71.23px;height:29.69px;background:#d5dbe0"></div>
<div style="left:777.19px;top:445.35px;width:71.23px;height:29.69px;background:#d5dbe0"></div>
<div style="left:848.42px;top:445.35px;width:71.23px;height:29.69px;background:#fff"></div>
<div style="left:919.65px;top:445.35px;width:71.23px;height:29.69px;background:#fff"></div>
<div style="left:990.88px;top:445.35px;width:71.23px;height:29.69px;background:#e3e3e3"></div>
<div style="left:1062.11px;top:445.35px;width:71.23px;height:29.69px;background:#fff"></div>
<div style="left:1133.34px;top:445.35px;width:71.23px;height:29.69px;background:#fff"></div>
<div style="left:1204.57px;top:445.35px;width:71.23px;height:29.69px;background:#d5dbe0"></div>
<div style="left:1275.80px;top:445.35px;width:71.23px;height:29.69px;background:#d5dbe0"></div>
<div style="left:1347.03px;top:445.35px;width:71.23px;height:29.69px;background:#fff"></div>
<div style="left:1418.26px;top:445.35px;width:71.23px;height:29.69px;background:#fff"></div>
<div style="left:1489.49px;top:445.35px;width:71.91px;height:29.69px;background:#fff"></div>
<div style="left:201.50px;top:475.04px;width:362.00px;height:29.69px;background:#f7f9fc"></div>
<div style="left:563.50px;top:475.04px;width:71.23px;height:29.69px;background:#fff"></div>
<div style="left:634.73px;top:475.04px;width:71.23px;height:29.69px;background:#fff"></div>
<div style="left:705.96px;top:475.04px;width:71.23px;height:29.69px;background:#d5dbe0"></div>
<div style="left:777.19px;top:475.04px;width:71.23px;height:29.69px;background:#d5dbe0"></div>
<div style="left:848.42px;top:475.04px;width:71.23px;height:29.69px;background:#fff"></div>
<div style="left:919.65px;top:475.04px;width:71.23px;height:29.69px;background:#fff"></div>
<div style="left:990.88px;top:475.04px;width:71.23px;height:29.69px;background:#e3e3e3"></div>
<div style="left:1062.11px;top:475.04px;width:71.23px;height:29.69px;background:#fff"></div>
<div style="left:1133.34px;top:475.04px;width:71.23px;height:29.69px;background:#fff"></div>
<div style="left:1204.57px;top:475.04px;width:71.23px;height:29.69px;background:#d5dbe0"></div>
<div style="left:1275.80px;top:475.04px;width:71.23px;height:29.69px;background:#d5dbe0"></div>
<div style="left:1347.03px;top:475.04px;width:71.23px;height:29.69px;background:#fff"></div>
<div style="left:1418.26px;top:475.04px;width:71.23px;height:29.69px;background:#fff"></div>
<div style="left:1489.49px;top:475.04px;width:71.91px;height:29.69px;background:#fff"></div>
<div style="left:201.50px;top:504.73px;width:362.00px;height:29.69px;background:#f7f9fc"></div>
<div style="left:563.50px;top:504.73px;width:71.23px;height:29.69px;background:#fff"></div>
<div style="left:634.73px;top:504.73px;width:71.23px;height:29.69px;background:#fff"></div>
<div style="left:705.96px;top:504.73px;width:71.23px;height:29.69px;background:#d5dbe0"></div>
<div style="left:777.19px;top:504.73px;width:71.23px;height:29.69px;background:#d5dbe0"></div>
<div style="left:848.42px;top:504.73px;width:71.23px;height:29.69px;background:#fff"></div>
<div style="left:919.65px;top:504.73px;width:71.23px;height:29.69px;background:#fff"></div>
<div style="left:990.88px;top:504.73px;width:71.23px;height:29.69px;background:#e3e3e3"></div>
<div style="left:1062.11px;top:504.73px;width:71.23px;height:29.69px;background:#fff"></div>
<div style="left:1133.34px;top:504.73px;width:71.23px;height:29.69px;background:#fff"></div>
<div style="left:1204.57px;top:504.73px;width:71.23px;height:29.69px;background:#d5dbe0"></div>
<div style="left:1275.80px;top:504.73px;width:71.23px;height:29.69px;background:#d5dbe0"></div>
<div style="left:1347.03px;top:504.73px;width:71.23px;height:29.69px;background:#fff"></div>
<div style="left:1418.26px;top:504.73px;width:71.23px;height:29.69px;background:#fff"></div>
<div style="left:1489.49px;top:504.73px;width:71.91px;height:29.69px;background:#fff"></div>
<div style="left:201.50px;top:534.42px;width:362.00px;height:29.69px;background:#f7f9fc"></div>
<div style="left:563.50px;top:534.42px;width:71.23px;height:29.69px;background:#fff"></div>
<div style="left:634.73px;top:534.42px;width:71.23px;height:29.69px;background:#fff"></div>
<div style="left:705.96px;top:534.42px;width:71.23px;height:29.69px;background:#d5dbe0"></div>
<div style="left:777.19px;top:534.42px;width:71.23px;height:29.69px;background:#d5dbe0"></div>
<div style="left:848.42px;top:534.42px;width:71.23px;height:29.69px;background:#fff"></div>
<div style="left:919.65px;top:534.42px;width:71.23px;height:29.69px;background:#fff"></div>
<div style="left:990.88px;top:534.42px;width:71.23px;height:29.69px;background:#e3e3e3"></div>
<div style="left:1062.11px;top:534.42px;width:71.23px;height:29.69px;background:#fff"></div>
<div style="left:1133.34px;top:534.42px;width:71.23px;height:29.69px;background:#fff"></div>
<div style="left:1204.57px;top:534.42px;width:71.23px;height:29.69px;background:#d5dbe0"></div>
<div style="left:1275.80px;top:534.42px;width:71.23px;height:29.69px;background:#d5dbe0"></div>
<div style="left:1347.03px;top:534.42px;width:71.23px;height:29.69px;background:#fff"></div>
<div style="left:1418.26px;top:534.42px;width:71.23px;height:29.69px;background:#fff"></div>
<div style="left:1489.49px;top:534.42px;width:71.91px;height:29.69px;background:#fff"></div>
<div style="left:201.50px;top:564.11px;width:362.00px;height:29.69px;background:#f7f9fc"></div>
<div style="left:563.50px;top:564.11px;width:71.23px;height:29.69px;background:#fff"></div>
<div style="left:634.73px;top:564.11px;width:71.23px;height:29.69px;background:#fff"></div>
<div style="left:705.96px;top:564.11px;width:71.23px;height:29.69px;background:#d5dbe0"></div>
<div style="left:777.19px;top:564.11px;width:71.23px;height:29.69px;background:#d5dbe0"></div>
<div style="left:848.42px;top:564.11px;width:71.23px;height:29.69px;background:#fff"></div>
<div style="left:919.65px;top:564.11px;width:71.23px;height:29.69px;background:#fff"></div>
<div style="left:990.88px;top:564.11px;width:71.23px;height:29.69px;background:#e3e3e3"></div>
<div style="left:1062.11px;top:564.11px;width:71.23px;height:29.69px;background:#fff"></div>
<div style="left:1133.34px;top:564.11px;width:71.23px;height:29.69px;background:#fff"></div>
<div style="left:1204.57px;top:564.11px;width:71.23px;height:29.69px;background:#d5dbe0"></div>
<div style="left:1275.80px;top:564.11px;width:71.23px;height:29.69px;background:#d5dbe0"></div>
<div style="left:1347.03px;top:564.11px;width:71.23px;height:29.69px;background:#fff"></div>
<div style="left:1418.26px;top:564.11px;width:71.23px;height:29.69px;background:#fff"></div>
<div style="left:1489.49px;top:564.11px;width:71.91px;height:29.69px;background:#fff"></div>
<div style="left:201.50px;top:29.19px;width:362.00px;height:1.00px;background:#d3d3d3"></div>
<div style="left:563.50px;top:29.19px;width:998.00px;height:1.00px;background:#e9e9e9"></div>
<div style="left:201.50px;top:58.88px;width:362.00px;height:1.00px;background:#d3d3d3"></div>
<div style="left:563.50px;top:58.88px;width:998.00px;height:1.00px;background:#e9e9e9"></div>
<div style="left:201.50px;top:88.57px;width:362.00px;height:1.00px;background:#d3d3d3"></div>
<div style="left:563.50px;top:88.57px;width:998.00px;height:1.00px;background:#e9e9e9"></div>
<div style="left:201.50px;top:118.26px;width:362.00px;height:1.00px;background:#d3d3d3"></div>
<div style="left:563.50px;top:118.26px;width:998.00px;height:1.00px;background:#e9e9e9"></div>
<div style="left:201.50px;top:147.95px;width:362.00px;height:1.00px;background:#d3d3d3"></div>
<div style="left:563.50px;top:147.95px;width:998.00px;height:1.00px;background:#e9e9e9"></div>
<div style="left:201.50px;top:177.64px;width:362.00px;height:1.00px;background:#d3d3d3"></div>
<div style="left:563.50px;top:177.64px;width:998.00px;height:1.00px;background:#e9e9e9"></div>
<div style="left:201.50px;top:207.33px;width:362.00px;height:1.00px;background:#d3d3d3"></div>
<div style="left:563.50px;top:207.33px;width:998.00px;height:1.00px;background:#e9e9e9"></div>
<div style="left:201.50px;top:237.02px;width:362.00px;height:1.00px;background:#d3d3d3"></div>
<div style="left:563.50px;top:237.02px;width:998.00px;height:1.00px;background:#e9e9e9"></div>
<div style="left:201.50px;top:266.71px;width:362.00px;height:1.00px;background:#d3d3d3"></div>
<div style="left:563.50px;top:266.71px;width:998.00px;height:1.00px;background:#e9e9e9"></div>
<div style="left:201.50px;top:326.09px;width:362.00px;height:1.00px;background:#d3d3d3"></div>
<div style="left:563.50px;top:326.09px;width:998.00px;height:1.00px;background:#e9e9e9"></div>
<div style="left:201.50px;top:355.78px;width:362.00px;height:1.00px;background:#d3d3d3"></div>
<div style="left:563.50px;top:355.78px;width:998.00px;height:1.00px;background:#e9e9e9"></div>
<div style="left:201.50px;top:385.47px;width:362.00px;height:1.00px;background:#d3d3d3"></div>
<div style="left:563.50px;top:385.47px;width:998.00px;height:1.00px;background:#e9e9e9"></div>
<div style="left:201.50px;top:415.16px;width:362.00px;height:1.00px;background:#d3d3d3"></div>
<div style="left:563.50px;top:415.16px;width:998.00px;height:1.00px;background:#e9e9e9"></div>
<div style="left:201.50px;top:444.85px;width:362.00px;height:1.00px;background:#d3d3d3"></div>
<div style="left:563.50px;top:444.85px;width:998.00px;height:1.00px;background:#e9e9e9"></div>
<div style="left:201.50px;top:474.54px;width:362.00px;height:1.00px;background:#d3d3d3"></div>
<div style="left:563.50px;top:474.54px;width:998.00px;height:1.00px;background:#e9e9e9"></div>
<div style="left:201.50px;top:504.23px;width:362.00px;height:1.00px;background:#d3d3d3"></div>
<div style="left:563.50px;top:504.23px;width:998.00px;height:1.00px;background:#e9e9e9"></div>
<div style="left:201.50px;top:533.92px;width:362.00px;height:1.00px;background:#d3d3d3"></div>
<div style="left:563.50px;top:533.92px;width:998.00px;height:1.00px;background:#e9e9e9"></div>
<div style="left:201.50px;top:563.61px;width:362.00px;height:1.00px;background:#d3d3d3"></div>
<div style="left:563.50px;top:563.61px;width:998.00px;height:1.00px;background:#e9e9e9"></div>
<div style="left:201.50px;top:593.30px;width:362.00px;height:1.00px;background:#d3d3d3"></div>
<div style="left:563.50px;top:593.30px;width:998.00px;height:1.00px;background:#e9e9e9"></div>
<div style="left:431.90px;top:0.00px;width:1.00px;height:600.00px;background:#d3d3d3"></div>
<div style="left:492.50px;top:0.00px;width:1.00px;height:600.00px;background:#d3d3d3"></div>
<div style="left:562.90px;top:0.00px;width:1.20px;height:600.00px;background:#d8dee6"></div>
<div style="left:634.13px;top:0.00px;width:1.20px;height:600.00px;background:#d8dee6"></div>
<div style="left:705.36px;top:0.00px;width:1.20px;height:600.00px;background:#d8dee6"></div>
<div style="left:776.59px;top:0.00px;width:1.20px;height:600.00px;background:#d8dee6"></div>
<div style="left:847.82px;top:0.00px;width:1.20px;height:600.00px;background:#d8dee6"></div>
<div style="left:919.05px;top:0.00px;width:1.20px;height:600.00px;background:#d8dee6"></div>
<div style="left:990.28px;top:0.00px;width:1.20px;height:600.00px;background:#d8dee6"></div>
<div style="left:1061.51px;top:0.00px;width:1.20px;height:600.00px;background:#d8dee6"></div>
<div style="left:1132.74px;top:0.00px;width:1.20px;height:600.00px;background:#d8dee6"></div>
<div style="left:1203.97px;top:0.00px;width:1.20px;height:600.00px;background:#d8dee6"></div>
<div style="left:1275.20px;top:0.00px;width:1.20px;height:600.00px;background:#d8dee6"></div>
<div style="left:1346.43px;top:0.00px;width:1.20px;height:600.00px;background:#d8dee6"></div>
<div style="left:1417.66px;top:0.00px;width:1.20px;height:600.00px;background:#d8dee6"></div>
<div style="left:1488.89px;top:0.00px;width:1.20px;height:600.00px;background:#d8dee6"></div>
<div style="left:1560.80px;top:0.00px;width:1.20px;height:600.00px;background:#d8dee6"></div>
<svg style="position:absolute;left:205px;top:13.04px" width="9" height="7" viewBox="0 0 9 7"><path d="M0.6 0.8 L4.1 5.2 L7.6 0.8" fill="none" stroke="#888" stroke-width="1.3"/></svg>
<div class="t" style="left:217.70px;top:10.44px;font-size:11px;font-weight:bold;color:#111;letter-spacing:0.45px;-webkit-text-stroke:0.25px #111">Main</div>
<div class="t" style="left:436.50px;top:10.44px;font-size:11px;font-weight:bold;color:#111;letter-spacing:0.6px;-webkit-text-stroke:0.25px #111">21127:19</div>
<div class="t" style="left:470px;width:89.8px;text-align:right;top:10.44px;font-size:11px;font-weight:bold;color:#111;letter-spacing:0.55px;margin-right:-0.55px;-webkit-text-stroke:0.25px #111">538,629.98</div>
<div style="left:564.00px;top:0.70px;width:70.23px;height:8.60px;background:repeating-linear-gradient(90deg,#dedede 0 6.2px,#f4f4f4 6.2px 7.4px)"></div>
<div class="t" style="left:563.50px;width:71.23px;text-align:center;top:12.20px;font-size:10px;color:#333;letter-spacing:-0.15px">0.00 hrs</div>
<div style="left:635.23px;top:0.70px;width:70.23px;height:8.60px;background:repeating-linear-gradient(90deg,#dedede 0 6.2px,#f4f4f4 6.2px 7.4px)"></div>
<div class="t" style="left:634.73px;width:71.23px;text-align:center;top:12.20px;font-size:10px;color:#333;letter-spacing:-0.15px">0.00 hrs</div>
<div style="left:706.46px;top:0.70px;width:70.23px;height:8.60px;background:repeating-linear-gradient(90deg,#dedede 0 6.2px,#f4f4f4 6.2px 7.4px)"></div>
<div class="t" style="left:705.96px;width:71.23px;text-align:center;top:12.20px;font-size:10px;color:#333;letter-spacing:-0.15px">0.00 hrs</div>
<div style="left:777.69px;top:0.70px;width:70.23px;height:8.60px;background:repeating-linear-gradient(90deg,#dedede 0 6.2px,#f4f4f4 6.2px 7.4px)"></div>
<div class="t" style="left:777.19px;width:71.23px;text-align:center;top:12.20px;font-size:10px;color:#333;letter-spacing:-0.15px">0.00 hrs</div>
<div style="left:848.92px;top:0.70px;width:70.23px;height:8.60px;background:repeating-linear-gradient(90deg,#dedede 0 6.2px,#f4f4f4 6.2px 7.4px)"></div>
<div class="t" style="left:848.42px;width:71.23px;text-align:center;top:12.20px;font-size:10px;color:#333;letter-spacing:-0.15px">0.00 hrs</div>
<div style="left:920.15px;top:0.70px;width:70.23px;height:8.60px;background:repeating-linear-gradient(90deg,#dedede 0 6.2px,#f4f4f4 6.2px 7.4px)"></div>
<div class="t" style="left:919.65px;width:71.23px;text-align:center;top:12.20px;font-size:10px;color:#333;letter-spacing:-0.15px">0.00 hrs</div>
<div style="left:991.38px;top:0.70px;width:70.23px;height:8.60px;background:repeating-linear-gradient(90deg,#cfcfcf 0 6.2px,#e2e2e2 6.2px 7.4px)"></div>
<div class="t" style="left:990.88px;width:71.23px;text-align:center;top:12.20px;font-size:10px;color:#333;letter-spacing:-0.15px">0.00 hrs</div>
<div style="left:1062.61px;top:0.70px;width:70.23px;height:8.60px;background:repeating-linear-gradient(90deg,#dedede 0 6.2px,#f4f4f4 6.2px 7.4px)"></div>
<div class="t" style="left:1062.11px;width:71.23px;text-align:center;top:12.20px;font-size:10px;color:#333;letter-spacing:-0.15px">0.00 hrs</div>
<div style="left:1133.84px;top:0.70px;width:70.23px;height:8.60px;background:repeating-linear-gradient(90deg,#dedede 0 6.2px,#f4f4f4 6.2px 7.4px)"></div>
<div class="t" style="left:1133.34px;width:71.23px;text-align:center;top:12.20px;font-size:10px;color:#333;letter-spacing:-0.15px">0.00 hrs</div>
<div style="left:1205.07px;top:0.70px;width:70.23px;height:8.60px;background:repeating-linear-gradient(90deg,#dedede 0 6.2px,#f4f4f4 6.2px 7.4px)"></div>
<div class="t" style="left:1204.57px;width:71.23px;text-align:center;top:12.20px;font-size:10px;color:#333;letter-spacing:-0.15px">0.00 hrs</div>
<div style="left:1276.30px;top:0.70px;width:70.23px;height:8.60px;background:repeating-linear-gradient(90deg,#dedede 0 6.2px,#f4f4f4 6.2px 7.4px)"></div>
<div class="t" style="left:1275.80px;width:71.23px;text-align:center;top:12.20px;font-size:10px;color:#333;letter-spacing:-0.15px">0.00 hrs</div>
<div style="left:1347.53px;top:0.70px;width:70.23px;height:8.60px;background:repeating-linear-gradient(90deg,#dedede 0 6.2px,#f4f4f4 6.2px 7.4px)"></div>
<div class="t" style="left:1347.03px;width:71.23px;text-align:center;top:12.20px;font-size:10px;color:#333;letter-spacing:-0.15px">0.00 hrs</div>
<div style="left:1418.76px;top:0.70px;width:70.23px;height:8.60px;background:repeating-linear-gradient(90deg,#dedede 0 6.2px,#f4f4f4 6.2px 7.4px)"></div>
<div class="t" style="left:1418.26px;width:71.23px;text-align:center;top:12.20px;font-size:10px;color:#333;letter-spacing:-0.15px">0.00 hrs</div>
<div style="left:1489.99px;top:0.70px;width:70.91px;height:8.60px;background:repeating-linear-gradient(90deg,#dedede 0 6.2px,#f4f4f4 6.2px 7.4px)"></div>
<div class="t" style="left:1489.49px;width:71.91px;text-align:center;top:12.20px;font-size:10px;color:#333;letter-spacing:-0.15px">0.00 hrs</div>
<svg style="position:absolute;left:205px;top:42.73px" width="9" height="7" viewBox="0 0 9 7"><path d="M0.6 0.8 L4.1 5.2 L7.6 0.8" fill="none" stroke="#888" stroke-width="1.3"/></svg>
<div class="t" style="left:217.70px;top:40.13px;font-size:11px;font-weight:bold;color:#111;letter-spacing:0.45px;-webkit-text-stroke:0.25px #111">ACCOUNTS</div>
<div class="t" style="left:436.50px;top:40.13px;font-size:11px;font-weight:bold;color:#111;letter-spacing:0.6px;-webkit-text-stroke:0.25px #111">2813:00</div>
<div class="t" style="left:470px;width:89.8px;text-align:right;top:40.13px;font-size:11px;font-weight:bold;color:#111;letter-spacing:0.55px;margin-right:-0.55px;-webkit-text-stroke:0.25px #111">65,875.05</div>
<div style="left:564.00px;top:30.29px;width:70.23px;height:8.20px;background:repeating-linear-gradient(90deg,#e2e2e2 0 1.3px,#f2f2f2 1.3px 2.65px)"></div>
<div style="left:564.00px;top:30.29px;width:51.00px;height:8.20px;background:repeating-linear-gradient(90deg,#1a72b8 0 1.4px,#5aa3d8 1.4px 2.65px)"></div>
<div class="t" style="left:563.50px;width:71.23px;text-align:center;top:41.29px;font-size:10px;color:#333;letter-spacing:-0.15px">169.00 hrs</div>
<div style="left:635.23px;top:30.29px;width:70.23px;height:8.20px;background:repeating-linear-gradient(90deg,#e2e2e2 0 1.3px,#f2f2f2 1.3px 2.65px)"></div>
<div style="left:635.23px;top:30.29px;width:56.50px;height:8.20px;background:repeating-linear-gradient(90deg,#1a72b8 0 1.4px,#5aa3d8 1.4px 2.65px)"></div>
<div class="t" style="left:634.73px;width:71.23px;text-align:center;top:41.29px;font-size:10px;color:#333;letter-spacing:-0.15px">233.95 hrs</div>
<div style="left:706.46px;top:30.29px;width:70.23px;height:8.20px;background:repeating-linear-gradient(90deg,#e2e2e2 0 1.3px,#f2f2f2 1.3px 2.65px)"></div>
<div style="left:706.46px;top:30.29px;width:60.00px;height:8.20px;background:repeating-linear-gradient(90deg,#1a72b8 0 1.4px,#5aa3d8 1.4px 2.65px)"></div>
<div class="t" style="left:705.96px;width:71.23px;text-align:center;top:41.29px;font-size:10px;color:#333;letter-spacing:-0.15px">584.60 hrs</div>
<div style="left:777.69px;top:30.29px;width:70.23px;height:8.20px;background:repeating-linear-gradient(90deg,#e2e2e2 0 1.3px,#f2f2f2 1.3px 2.65px)"></div>
<div style="left:777.69px;top:30.29px;width:61.00px;height:8.20px;background:repeating-linear-gradient(90deg,#1a72b8 0 1.4px,#5aa3d8 1.4px 2.65px)"></div>
<div class="t" style="left:777.19px;width:71.23px;text-align:center;top:41.29px;font-size:10px;color:#333;letter-spacing:-0.15px">599.58 hrs</div>
<div style="left:848.92px;top:30.29px;width:70.23px;height:8.20px;background:repeating-linear-gradient(90deg,#e2e2e2 0 1.3px,#f2f2f2 1.3px 2.65px)"></div>
<div style="left:848.92px;top:30.29px;width:56.00px;height:8.20px;background:repeating-linear-gradient(90deg,#1a72b8 0 1.4px,#5aa3d8 1.4px 2.65px)"></div>
<div class="t" style="left:848.42px;width:71.23px;text-align:center;top:41.29px;font-size:10px;color:#333;letter-spacing:-0.15px">201.98 hrs</div>
<div style="left:920.15px;top:30.29px;width:70.23px;height:8.20px;background:repeating-linear-gradient(90deg,#e2e2e2 0 1.3px,#f2f2f2 1.3px 2.65px)"></div>
<div style="left:920.15px;top:30.29px;width:51.50px;height:8.20px;background:repeating-linear-gradient(90deg,#1a72b8 0 1.4px,#5aa3d8 1.4px 2.65px)"></div>
<div class="t" style="left:919.65px;width:71.23px;text-align:center;top:41.29px;font-size:10px;color:#333;letter-spacing:-0.15px">184.98 hrs</div>
<div style="left:991.38px;top:30.29px;width:70.23px;height:8.20px;background:repeating-linear-gradient(90deg,#e2e2e2 0 1.3px,#f2f2f2 1.3px 2.65px)"></div>
<div style="left:991.38px;top:30.29px;width:56.00px;height:8.20px;background:repeating-linear-gradient(90deg,#1a72b8 0 1.4px,#5aa3d8 1.4px 2.65px)"></div>
<div class="t" style="left:990.88px;width:71.23px;text-align:center;top:41.29px;font-size:10px;color:#333;letter-spacing:-0.15px">216.97 hrs</div>
<div style="left:1062.61px;top:30.29px;width:70.23px;height:8.20px;background:repeating-linear-gradient(90deg,#e2e2e2 0 1.3px,#f2f2f2 1.3px 2.65px)"></div>
<div style="left:1062.61px;top:30.29px;width:48.70px;height:8.20px;background:repeating-linear-gradient(90deg,#1a72b8 0 1.4px,#5aa3d8 1.4px 2.65px)"></div>
<div class="t" style="left:1062.11px;width:71.23px;text-align:center;top:41.29px;font-size:10px;color:#333;letter-spacing:-0.15px">176.98 hrs</div>
<div style="left:1133.84px;top:30.29px;width:70.23px;height:8.20px;background:repeating-linear-gradient(90deg,#e2e2e2 0 1.3px,#f2f2f2 1.3px 2.65px)"></div>
<div style="left:1133.84px;top:30.29px;width:65.00px;height:8.20px;background:repeating-linear-gradient(90deg,#1a72b8 0 1.4px,#5aa3d8 1.4px 2.65px)"></div>
<div class="t" style="left:1133.34px;width:71.23px;text-align:center;top:41.29px;font-size:10px;color:#333;letter-spacing:-0.15px">632.57 hrs</div>
<div style="left:1205.07px;top:30.29px;width:70.23px;height:8.20px;background:repeating-linear-gradient(90deg,#e2e2e2 0 1.3px,#f2f2f2 1.3px 2.65px)"></div>
<div style="left:1205.07px;top:30.29px;width:63.00px;height:8.20px;background:repeating-linear-gradient(90deg,#1a72b8 0 1.4px,#5aa3d8 1.4px 2.65px)"></div>
<div class="t" style="left:1204.57px;width:71.23px;text-align:center;top:41.29px;font-size:10px;color:#333;letter-spacing:-0.15px">623.57 hrs</div>
<div style="left:1276.30px;top:30.29px;width:70.23px;height:8.20px;background:repeating-linear-gradient(90deg,#e2e2e2 0 1.3px,#f2f2f2 1.3px 2.65px)"></div>
<div style="left:1276.30px;top:30.29px;width:64.60px;height:8.20px;background:repeating-linear-gradient(90deg,#1a72b8 0 1.4px,#5aa3d8 1.4px 2.65px)"></div>
<div class="t" style="left:1275.80px;width:71.23px;text-align:center;top:41.29px;font-size:10px;color:#333;letter-spacing:-0.15px">632.57 hrs</div>
<div style="left:1347.53px;top:30.29px;width:70.23px;height:8.20px;background:repeating-linear-gradient(90deg,#e2e2e2 0 1.3px,#f2f2f2 1.3px 2.65px)"></div>
<div style="left:1347.53px;top:30.29px;width:63.00px;height:8.20px;background:repeating-linear-gradient(90deg,#1a72b8 0 1.4px,#5aa3d8 1.4px 2.65px)"></div>
<div class="t" style="left:1347.03px;width:71.23px;text-align:center;top:41.29px;font-size:10px;color:#333;letter-spacing:-0.15px">608.58 hrs</div>
<div style="left:1418.76px;top:30.29px;width:70.23px;height:8.20px;background:repeating-linear-gradient(90deg,#e2e2e2 0 1.3px,#f2f2f2 1.3px 2.65px)"></div>
<div style="left:1418.76px;top:30.29px;width:53.70px;height:8.20px;background:repeating-linear-gradient(90deg,#1a72b8 0 1.4px,#5aa3d8 1.4px 2.65px)"></div>
<div class="t" style="left:1418.26px;width:71.23px;text-align:center;top:41.29px;font-size:10px;color:#333;letter-spacing:-0.15px">177.00 hrs</div>
<div style="left:1489.99px;top:30.29px;width:70.91px;height:8.20px;background:repeating-linear-gradient(90deg,#e2e2e2 0 1.3px,#f2f2f2 1.3px 2.65px)"></div>
<div style="left:1489.99px;top:30.29px;width:54.50px;height:8.20px;background:repeating-linear-gradient(90deg,#1a72b8 0 1.4px,#5aa3d8 1.4px 2.65px)"></div>
<div class="t" style="left:1489.49px;width:71.91px;text-align:center;top:41.29px;font-size:10px;color:#333;letter-spacing:-0.15px">192.98 hrs</div>
<div class="t" style="left:217.70px;top:68.62px;font-size:11px;font-weight:bold;color:#111;letter-spacing:0.45px;-webkit-text-stroke:0.25px #111">(ACT)-Pay1, Xanda (890220)</div>
<div class="t" style="left:436.50px;top:68.62px;font-size:11px;font-weight:bold;color:#111;letter-spacing:0.6px;-webkit-text-stroke:0.25px #111">77:59</div>
<div class="t" style="left:470px;width:89.8px;text-align:right;top:68.62px;font-size:11px;font-weight:bold;color:#111;letter-spacing:0.55px;margin-right:-0.55px;-webkit-text-stroke:0.25px #111">0.00</div>
<div style="left:635.13px;top:59.68px;width:70.63px;height:4.20px;background:linear-gradient(90deg,#a3cbe8 0 38.26px,#007b00 38.26px 64.74px,#a3cbe8 64.74px);border-radius:3px 3px 0 0"></div>
<div class="blk" style="left:635.13px;top:63.28px;width:70.63px;height:26.69px;background:#007b00;border-left:1.3px solid #f2a626;border-right:0.8px solid #f2a626;border-bottom:1.2px solid #f2a626;border-radius:4px;border-top-left-radius:1px;border-top-right-radius:1px"><div class="t" style="left:1.6px;top:8.34px;font-size:11px;letter-spacing:-0.25px;color:#fff;-webkit-text-stroke:0.15px currentColor">REG-1PM-10:00PM</div></div>
<div style="left:706.36px;top:59.68px;width:70.63px;height:4.20px;background:linear-gradient(90deg,#a3cbe8 0 38.26px,#007b00 38.26px 64.74px,#a3cbe8 64.74px);border-radius:3px 3px 0 0"></div>
<div class="blk" style="left:706.36px;top:63.28px;width:70.63px;height:26.69px;background:#007b00;border-left:1.3px solid #f2a626;border-right:0.8px solid #f2a626;border-bottom:1.2px solid #f2a626;border-radius:4px;border-top-left-radius:1px;border-top-right-radius:1px"><div class="t" style="left:1.6px;top:8.34px;font-size:11px;letter-spacing:-0.25px;color:#fff;-webkit-text-stroke:0.15px currentColor">REG-1PM-10:00PM</div></div>
<div style="left:848.82px;top:59.68px;width:70.63px;height:4.20px;background:linear-gradient(90deg,#a3cbe8 0 38.26px,#007b00 38.26px 64.74px,#a3cbe8 64.74px);border-radius:3px 3px 0 0"></div>
<div class="blk" style="left:848.82px;top:63.28px;width:70.63px;height:26.69px;background:#007b00;border-left:1.3px solid #f2a626;border-right:0.8px solid #f2a626;border-bottom:1.2px solid #f2a626;border-radius:4px;border-top-left-radius:1px;border-top-right-radius:1px"><div class="t" style="left:1.6px;top:8.34px;font-size:11px;letter-spacing:-0.25px;color:#fff;-webkit-text-stroke:0.15px currentColor">REG-1PM-10:00PM</div></div>
<div class="blk" style="left:991.28px;top:59.98px;width:70.63px;height:29.99px;background:#ffff00;border-left:1.3px solid #f2a626;border-right:0.8px solid #f2a626;border-bottom:1.2px solid #f2a626;border-radius:4px"><div class="t" style="left:1.6px;top:11.65px;font-size:11px;letter-spacing:0px;color:#ff3c00;-webkit-text-stroke:0.15px currentColor">Public Holiday</div></div>
<div style="left:1133.74px;top:59.68px;width:70.63px;height:4.20px;background:linear-gradient(90deg,#a3cbe8 0 38.26px,#007b00 38.26px 64.74px,#a3cbe8 64.74px);border-radius:3px 3px 0 0"></div>
<div class="blk" style="left:1133.74px;top:63.28px;width:70.63px;height:26.69px;background:#007b00;border-left:1.3px solid #f2a626;border-right:0.8px solid #f2a626;border-bottom:1.2px solid #f2a626;border-radius:4px;border-top-left-radius:1px;border-top-right-radius:1px"><div class="t" style="left:1.6px;top:8.34px;font-size:11px;letter-spacing:-0.25px;color:#fff;-webkit-text-stroke:0.15px currentColor">REG-1PM-10:00PM</div></div>
<div style="left:1276.20px;top:59.68px;width:70.63px;height:4.20px;background:linear-gradient(90deg,#a3cbe8 0 20.60px,#0000ff 20.60px 47.09px,#a3cbe8 47.09px);border-radius:3px 3px 0 0"></div>
<div class="blk" style="left:1276.20px;top:63.28px;width:70.63px;height:26.69px;background:#0000ff;border-left:1.3px solid #f2a626;border-right:0.8px solid #f2a626;border-bottom:1.2px solid #f2a626;border-radius:4px;border-top-left-radius:1px;border-top-right-radius:1px"><div class="t" style="left:1.6px;top:8.34px;font-size:11px;letter-spacing:0px;color:#fff;-webkit-text-stroke:0.15px currentColor">7AM-4:00PM</div></div>
<div style="left:1347.43px;top:59.68px;width:70.63px;height:4.20px;background:linear-gradient(90deg,#a3cbe8 0 38.26px,#007b00 38.26px 64.74px,#a3cbe8 64.74px);border-radius:3px 3px 0 0"></div>
<div class="blk" style="left:1347.43px;top:63.28px;width:70.63px;height:26.69px;background:#007b00;border-left:1.3px solid #f2a626;border-right:0.8px solid #f2a626;border-bottom:1.2px solid #f2a626;border-radius:4px;border-top-left-radius:1px;border-top-right-radius:1px"><div class="t" style="left:1.6px;top:8.34px;font-size:11px;letter-spacing:0px;color:#fff;-webkit-text-stroke:0.15px currentColor">1PM-10PM</div></div>
<div class="t" style="left:217.70px;top:98.32px;font-size:11px;font-weight:bold;color:#111;letter-spacing:0.45px;-webkit-text-stroke:0.25px #111">(ACT)-Rey, Campos (890235)</div>
<div class="t" style="left:436.50px;top:98.32px;font-size:11px;font-weight:bold;color:#111;letter-spacing:0.6px;-webkit-text-stroke:0.25px #111">0:00</div>
<div class="t" style="left:470px;width:89.8px;text-align:right;top:98.32px;font-size:11px;font-weight:bold;color:#111;letter-spacing:0.55px;margin-right:-0.55px;-webkit-text-stroke:0.25px #111">0.00</div>
<div class="t" style="left:217.70px;top:128.01px;font-size:11px;font-weight:bold;color:#111;letter-spacing:0.45px;-webkit-text-stroke:0.25px #111">()-Anderson<span style='letter-spacing:-0.2px'>  </span>, Candi<span style='letter-spacing:-0.2px'><span style='letter-spacing:-0.2px'>  </span> </span>(925)</div>
<div class="t" style="left:436.50px;top:128.01px;font-size:11px;font-weight:bold;color:#111;letter-spacing:0.6px;-webkit-text-stroke:0.25px #111">103:58</div>
<div class="t" style="left:470px;width:89.8px;text-align:right;top:128.01px;font-size:11px;font-weight:bold;color:#111;letter-spacing:0.55px;margin-right:-0.55px;-webkit-text-stroke:0.25px #111">3,226.99</div>
<div style="left:563.90px;top:119.06px;width:70.63px;height:4.20px;background:linear-gradient(90deg,#a3cbe8 0 23.54px,#0000ff 23.54px 47.09px,#a3cbe8 47.09px);border-radius:3px 3px 0 0"></div>
<div class="blk" style="left:563.90px;top:122.66px;width:70.63px;height:26.69px;background:#0000ff;border-left:1.3px solid #f2a626;border-right:0.8px solid #f2a626;border-bottom:1.2px solid #f2a626;border-radius:4px;border-top-left-radius:1px;border-top-right-radius:1px"><div class="t" style="left:1.6px;top:8.34px;font-size:11px;letter-spacing:0px;color:#fff;-webkit-text-stroke:0.15px currentColor">8AM-4:00PM</div></div>
<div style="left:635.13px;top:119.06px;width:70.63px;height:4.20px;background:linear-gradient(90deg,#a3cbe8 0 23.54px,#0000ff 23.54px 47.09px,#a3cbe8 47.09px);border-radius:3px 3px 0 0"></div>
<div class="blk" style="left:635.13px;top:122.66px;width:70.63px;height:26.69px;background:#0000ff;border-left:1.3px solid #f2a626;border-right:0.8px solid #f2a626;border-bottom:1.2px solid #f2a626;border-radius:4px;border-top-left-radius:1px;border-top-right-radius:1px"><div class="t" style="left:1.6px;top:8.34px;font-size:11px;letter-spacing:0px;color:#fff;-webkit-text-stroke:0.15px currentColor">8AM-4:00PM</div></div>
<div class="blk" style="left:706.36px;top:119.36px;width:70.63px;height:29.99px;background:#808080;border-left:1.3px solid #f2a626;border-right:0.8px solid #f2a626;border-bottom:1.2px solid #f2a626;border-radius:4px"><div class="t" style="left:1.6px;top:12.61px;font-size:10.2px;letter-spacing:-0.2px;color:#fff;-webkit-text-stroke:0.15px currentColor">DAYOFF</div></div>
<div class="blk" style="left:777.59px;top:119.36px;width:70.63px;height:29.99px;background:#808080;border-left:1.3px solid #f2a626;border-right:0.8px solid #f2a626;border-bottom:1.2px solid #f2a626;border-radius:4px"><div class="t" style="left:1.6px;top:12.61px;font-size:10.2px;letter-spacing:-0.2px;color:#fff;-webkit-text-stroke:0.15px currentColor">DAYOFF</div></div>
<div style="left:848.82px;top:119.06px;width:70.63px;height:4.20px;background:linear-gradient(90deg,#a3cbe8 0 23.54px,#0000ff 23.54px 47.09px,#a3cbe8 47.09px);border-radius:3px 3px 0 0"></div>
<div class="blk" style="left:848.82px;top:122.66px;width:70.63px;height:26.69px;background:#0000ff;border-left:1.3px solid #f2a626;border-right:0.8px solid #f2a626;border-bottom:1.2px solid #f2a626;border-radius:4px;border-top-left-radius:1px;border-top-right-radius:1px"><div class="t" style="left:1.6px;top:8.34px;font-size:11px;letter-spacing:0px;color:#fff;-webkit-text-stroke:0.15px currentColor">8AM-4:00PM</div></div>
<div style="left:920.05px;top:119.06px;width:70.63px;height:4.20px;background:linear-gradient(90deg,#a3cbe8 0 23.54px,#0000ff 23.54px 47.09px,#a3cbe8 47.09px);border-radius:3px 3px 0 0"></div>
<div class="blk" style="left:920.05px;top:122.66px;width:70.63px;height:26.69px;background:#0000ff;border-left:1.3px solid #f2a626;border-right:0.8px solid #f2a626;border-bottom:1.2px solid #f2a626;border-radius:4px;border-top-left-radius:1px;border-top-right-radius:1px"><div class="t" style="left:1.6px;top:8.34px;font-size:11px;letter-spacing:0px;color:#fff;-webkit-text-stroke:0.15px currentColor">8AM-4:00PM</div></div>
<div style="left:991.28px;top:119.06px;width:70.63px;height:4.20px;background:linear-gradient(90deg,#a3cbe8 0 23.54px,#0000ff 23.54px 47.09px,#a3cbe8 47.09px);border-radius:3px 3px 0 0"></div>
<div class="blk" style="left:991.28px;top:122.66px;width:70.63px;height:26.69px;background:#0000ff;border-left:1.3px solid #f2a626;border-right:0.8px solid #f2a626;border-bottom:1.2px solid #f2a626;border-radius:4px;border-top-left-radius:1px;border-top-right-radius:1px"><div class="t" style="left:1.6px;top:8.34px;font-size:11px;letter-spacing:0px;color:#fff;-webkit-text-stroke:0.15px currentColor">8AM-4:00PM</div></div>
<div style="left:1062.51px;top:119.06px;width:70.63px;height:4.20px;background:linear-gradient(90deg,#a3cbe8 0 23.54px,#0000ff 23.54px 47.09px,#a3cbe8 47.09px);border-radius:3px 3px 0 0"></div>
<div class="blk" style="left:1062.51px;top:122.66px;width:70.63px;height:26.69px;background:#0000ff;border-left:1.3px solid #f2a626;border-right:0.8px solid #f2a626;border-bottom:1.2px solid #f2a626;border-radius:4px;border-top-left-radius:1px;border-top-right-radius:1px"><div class="t" style="left:1.6px;top:8.34px;font-size:11px;letter-spacing:0px;color:#fff;-webkit-text-stroke:0.15px currentColor">8AM-4:00PM</div></div>
<div class="blk" style="left:1133.74px;top:119.36px;width:70.63px;height:29.99px;background:#ffff00;border-left:1.3px solid #f2a626;border-right:0.8px solid #f2a626;border-bottom:1.2px solid #f2a626;border-radius:4px"><div class="t" style="left:1.6px;top:11.65px;font-size:11px;letter-spacing:0px;color:#ff3c00;-webkit-text-stroke:0.15px currentColor">Public Holiday</div></div>
<div class="blk" style="left:1204.97px;top:119.36px;width:70.63px;height:29.99px;background:#808080;border-left:1.3px solid #f2a626;border-right:0.8px solid #f2a626;border-bottom:1.2px solid #f2a626;border-radius:4px"><div class="t" style="left:1.6px;top:12.61px;font-size:10.2px;letter-spacing:-0.2px;color:#fff;-webkit-text-stroke:0.15px currentColor">DAYOFF</div></div>
<div class="blk" style="left:1276.20px;top:119.36px;width:70.63px;height:29.99px;background:#808080;border-left:1.3px solid #f2a626;border-right:0.8px solid #f2a626;border-bottom:1.2px solid #f2a626;border-radius:4px"><div class="t" style="left:1.6px;top:12.61px;font-size:10.2px;letter-spacing:-0.2px;color:#fff;-webkit-text-stroke:0.15px currentColor">DAYOFF</div></div>
<div class="blk" style="left:1347.43px;top:119.36px;width:70.63px;height:29.99px;background:#ffff00;border-left:1.3px solid #f2a626;border-right:0.8px solid #f2a626;border-bottom:1.2px solid #f2a626;border-radius:4px"><div class="t" style="left:1.6px;top:11.65px;font-size:11px;letter-spacing:0px;color:#ff3c00;-webkit-text-stroke:0.15px currentColor">P- Holiday</div></div>
<div style="left:1418.66px;top:119.06px;width:70.63px;height:4.20px;background:linear-gradient(90deg,#a3cbe8 0 23.54px,#0000ff 23.54px 47.09px,#a3cbe8 47.09px);border-radius:3px 3px 0 0"></div>
<div class="blk" style="left:1418.66px;top:122.66px;width:70.63px;height:26.69px;background:#0000ff;border-left:1.3px solid #f2a626;border-right:0.8px solid #f2a626;border-bottom:1.2px solid #f2a626;border-radius:4px;border-top-left-radius:1px;border-top-right-radius:1px"><div class="t" style="left:1.6px;top:8.34px;font-size:11px;letter-spacing:0px;color:#fff;-webkit-text-stroke:0.15px currentColor">8AM-4:00PM</div></div>
<div class="t" style="left:217.70px;top:157.70px;font-size:11px;font-weight:bold;color:#111;letter-spacing:0.45px;-webkit-text-stroke:0.25px #111">()-Evelyne<span style='letter-spacing:-0.2px'>  </span>, Lorean<span style='letter-spacing:-0.2px'><span style='letter-spacing:-0.2px'>  </span> </span>(922)</div>
<div class="t" style="left:436.50px;top:157.70px;font-size:11px;font-weight:bold;color:#111;letter-spacing:0.6px;-webkit-text-stroke:0.25px #111">111:58</div>
<div class="t" style="left:470px;width:89.8px;text-align:right;top:157.70px;font-size:11px;font-weight:bold;color:#111;letter-spacing:0.55px;margin-right:-0.55px;-webkit-text-stroke:0.25px #111">3,477.63</div>
<div style="left:563.90px;top:148.75px;width:70.63px;height:4.20px;background:linear-gradient(90deg,#a3cbe8 0 23.54px,#0000ff 23.54px 47.09px,#a3cbe8 47.09px);border-radius:3px 3px 0 0"></div>
<div class="blk" style="left:563.90px;top:152.35px;width:70.63px;height:26.69px;background:#0000ff;border-left:1.3px solid #f2a626;border-right:0.8px solid #f2a626;border-bottom:1.2px solid #f2a626;border-radius:4px;border-top-left-radius:1px;border-top-right-radius:1px"><div class="t" style="left:1.6px;top:8.34px;font-size:11px;letter-spacing:0px;color:#fff;-webkit-text-stroke:0.15px currentColor">8AM-4:00PM</div></div>
<div style="left:635.13px;top:148.75px;width:70.63px;height:4.20px;background:linear-gradient(90deg,#a3cbe8 0 23.54px,#0000ff 23.54px 47.09px,#a3cbe8 47.09px);border-radius:3px 3px 0 0"></div>
<div class="blk" style="left:635.13px;top:152.35px;width:70.63px;height:26.69px;background:#0000ff;border-left:1.3px solid #f2a626;border-right:0.8px solid #f2a626;border-bottom:1.2px solid #f2a626;border-radius:4px;border-top-left-radius:1px;border-top-right-radius:1px"><div class="t" style="left:1.6px;top:8.34px;font-size:11px;letter-spacing:0px;color:#fff;-webkit-text-stroke:0.15px currentColor">8AM-4:00PM</div></div>
<div class="blk" style="left:706.36px;top:149.05px;width:70.63px;height:29.99px;background:#808080;border-left:1.3px solid #f2a626;border-right:0.8px solid #f2a626;border-bottom:1.2px solid #f2a626;border-radius:4px"><div class="t" style="left:1.6px;top:12.61px;font-size:10.2px;letter-spacing:-0.2px;color:#fff;-webkit-text-stroke:0.15px currentColor">DAYOFF</div></div>
<div class="blk" style="left:777.59px;top:149.05px;width:70.63px;height:29.99px;background:#808080;border-left:1.3px solid #f2a626;border-right:0.8px solid #f2a626;border-bottom:1.2px solid #f2a626;border-radius:4px"><div class="t" style="left:1.6px;top:12.61px;font-size:10.2px;letter-spacing:-0.2px;color:#fff;-webkit-text-stroke:0.15px currentColor">DAYOFF</div></div>
<div style="left:848.82px;top:148.75px;width:70.63px;height:4.20px;background:linear-gradient(90deg,#a3cbe8 0 23.54px,#0000ff 23.54px 47.09px,#a3cbe8 47.09px);border-radius:3px 3px 0 0"></div>
<div class="blk" style="left:848.82px;top:152.35px;width:70.63px;height:26.69px;background:#0000ff;border-left:1.3px solid #f2a626;border-right:0.8px solid #f2a626;border-bottom:1.2px solid #f2a626;border-radius:4px;border-top-left-radius:1px;border-top-right-radius:1px"><div class="t" style="left:1.6px;top:8.34px;font-size:11px;letter-spacing:0px;color:#fff;-webkit-text-stroke:0.15px currentColor">8AM-4:00PM</div></div>
<div style="left:920.05px;top:148.75px;width:70.63px;height:4.20px;background:linear-gradient(90deg,#a3cbe8 0 23.54px,#0000ff 23.54px 47.09px,#a3cbe8 47.09px);border-radius:3px 3px 0 0"></div>
<div class="blk" style="left:920.05px;top:152.35px;width:70.63px;height:26.69px;background:#0000ff;border-left:1.3px solid #f2a626;border-right:0.8px solid #f2a626;border-bottom:1.2px solid #f2a626;border-radius:4px;border-top-left-radius:1px;border-top-right-radius:1px"><div class="t" style="left:1.6px;top:8.34px;font-size:11px;letter-spacing:0px;color:#fff;-webkit-text-stroke:0.15px currentColor">8AM-4:00PM</div></div>
<div style="left:991.28px;top:148.75px;width:70.63px;height:4.20px;background:linear-gradient(90deg,#a3cbe8 0 23.54px,#0000ff 23.54px 47.09px,#a3cbe8 47.09px);border-radius:3px 3px 0 0"></div>
<div class="blk" style="left:991.28px;top:152.35px;width:70.63px;height:26.69px;background:#0000ff;border-left:1.3px solid #f2a626;border-right:0.8px solid #f2a626;border-bottom:1.2px solid #f2a626;border-radius:4px;border-top-left-radius:1px;border-top-right-radius:1px"><div class="t" style="left:1.6px;top:8.34px;font-size:11px;letter-spacing:0px;color:#fff;-webkit-text-stroke:0.15px currentColor">8AM-4:00PM</div></div>
<div style="left:1062.51px;top:148.75px;width:70.63px;height:4.20px;background:linear-gradient(90deg,#a3cbe8 0 23.54px,#0000ff 23.54px 47.09px,#a3cbe8 47.09px);border-radius:3px 3px 0 0"></div>
<div class="blk" style="left:1062.51px;top:152.35px;width:70.63px;height:26.69px;background:#0000ff;border-left:1.3px solid #f2a626;border-right:0.8px solid #f2a626;border-bottom:1.2px solid #f2a626;border-radius:4px;border-top-left-radius:1px;border-top-right-radius:1px"><div class="t" style="left:1.6px;top:8.34px;font-size:11px;letter-spacing:0px;color:#fff;-webkit-text-stroke:0.15px currentColor">8AM-4:00PM</div></div>
<div class="blk" style="left:1133.74px;top:149.05px;width:70.63px;height:29.99px;background:#ffff00;border-left:1.3px solid #f2a626;border-right:0.8px solid #f2a626;border-bottom:1.2px solid #f2a626;border-radius:4px"><div class="t" style="left:1.6px;top:11.65px;font-size:11px;letter-spacing:0px;color:#ff3c00;-webkit-text-stroke:0.15px currentColor">P- Holiday</div></div>
<div class="blk" style="left:1204.97px;top:149.05px;width:70.63px;height:29.99px;background:#808080;border-left:1.3px solid #f2a626;border-right:0.8px solid #f2a626;border-bottom:1.2px solid #f2a626;border-radius:4px"><div class="t" style="left:1.6px;top:12.61px;font-size:10.2px;letter-spacing:-0.2px;color:#fff;-webkit-text-stroke:0.15px currentColor">DAYOFF</div></div>
<div class="blk" style="left:1276.20px;top:149.05px;width:70.63px;height:29.99px;background:#808080;border-left:1.3px solid #f2a626;border-right:0.8px solid #f2a626;border-bottom:1.2px solid #f2a626;border-radius:4px"><div class="t" style="left:1.6px;top:12.61px;font-size:10.2px;letter-spacing:-0.2px;color:#fff;-webkit-text-stroke:0.15px currentColor">DAYOFF</div></div>
<div class="blk" style="left:1347.43px;top:149.05px;width:70.63px;height:29.99px;background:#ffff00;border-left:1.3px solid #f2a626;border-right:0.8px solid #f2a626;border-bottom:1.2px solid #f2a626;border-radius:4px"><div class="t" style="left:1.6px;top:11.65px;font-size:11px;letter-spacing:0px;color:#ff3c00;-webkit-text-stroke:0.15px currentColor">P- Holiday</div></div>
<div style="left:1418.66px;top:148.75px;width:70.63px;height:4.20px;background:linear-gradient(90deg,#a3cbe8 0 23.54px,#0000ff 23.54px 47.09px,#a3cbe8 47.09px);border-radius:3px 3px 0 0"></div>
<div class="blk" style="left:1418.66px;top:152.35px;width:70.63px;height:26.69px;background:#0000ff;border-left:1.3px solid #f2a626;border-right:0.8px solid #f2a626;border-bottom:1.2px solid #f2a626;border-radius:4px;border-top-left-radius:1px;border-top-right-radius:1px"><div class="t" style="left:1.6px;top:8.34px;font-size:11px;letter-spacing:0px;color:#fff;-webkit-text-stroke:0.15px currentColor">8AM-4:00PM</div></div>
<div style="left:1489.89px;top:148.75px;width:71.31px;height:4.20px;background:linear-gradient(90deg,#a3cbe8 0 23.77px,#0000ff 23.77px 47.54px,#a3cbe8 47.54px);border-radius:3px 3px 0 0"></div>
<div class="blk" style="left:1489.89px;top:152.35px;width:71.31px;height:26.69px;background:#0000ff;border-left:1.3px solid #f2a626;border-right:0.8px solid #f2a626;border-bottom:1.2px solid #f2a626;border-radius:4px;border-top-left-radius:1px;border-top-right-radius:1px"><div class="t" style="left:1.6px;top:8.34px;font-size:11px;letter-spacing:0px;color:#fff;-webkit-text-stroke:0.15px currentColor">8AM-4:00PM</div></div>
<div class="t" style="left:217.70px;top:187.39px;font-size:11px;font-weight:bold;color:#111;letter-spacing:0.45px;-webkit-text-stroke:0.25px #111">()-Leandro<span style='letter-spacing:-0.2px'>  </span>, Kurtis<span style='letter-spacing:-0.2px'><span style='letter-spacing:-0.2px'>  </span> </span>(64)</div>
<div class="t" style="left:436.50px;top:187.39px;font-size:11px;font-weight:bold;color:#111;letter-spacing:0.6px;-webkit-text-stroke:0.25px #111">103:58</div>
<div class="t" style="left:470px;width:89.8px;text-align:right;top:187.39px;font-size:11px;font-weight:bold;color:#111;letter-spacing:0.55px;margin-right:-0.55px;-webkit-text-stroke:0.25px #111">2,851.04</div>
<div style="left:563.90px;top:178.44px;width:70.63px;height:4.20px;background:linear-gradient(90deg,#a3cbe8 0 23.54px,#0000ff 23.54px 47.09px,#a3cbe8 47.09px);border-radius:3px 3px 0 0"></div>
<div class="blk" style="left:563.90px;top:182.04px;width:70.63px;height:26.69px;background:#0000ff;border-left:1.3px solid #f2a626;border-right:0.8px solid #f2a626;border-bottom:1.2px solid #f2a626;border-radius:4px;border-top-left-radius:1px;border-top-right-radius:1px"><div class="t" style="left:1.6px;top:8.34px;font-size:11px;letter-spacing:0px;color:#fff;-webkit-text-stroke:0.15px currentColor">8AM-4:00PM</div></div>
<div style="left:635.13px;top:178.44px;width:70.63px;height:4.20px;background:linear-gradient(90deg,#a3cbe8 0 23.54px,#0000ff 23.54px 47.09px,#a3cbe8 47.09px);border-radius:3px 3px 0 0"></div>
<div class="blk" style="left:635.13px;top:182.04px;width:70.63px;height:26.69px;background:#0000ff;border-left:1.3px solid #f2a626;border-right:0.8px solid #f2a626;border-bottom:1.2px solid #f2a626;border-radius:4px;border-top-left-radius:1px;border-top-right-radius:1px"><div class="t" style="left:1.6px;top:8.34px;font-size:11px;letter-spacing:0px;color:#fff;-webkit-text-stroke:0.15px currentColor">8AM-4:00PM</div></div>
<div class="blk" style="left:706.36px;top:178.74px;width:70.63px;height:29.99px;background:#808080;border-left:1.3px solid #f2a626;border-right:0.8px solid #f2a626;border-bottom:1.2px solid #f2a626;border-radius:4px"><div class="t" style="left:1.6px;top:12.61px;font-size:10.2px;letter-spacing:-0.2px;color:#fff;-webkit-text-stroke:0.15px currentColor">DAYOFF</div></div>
<div class="blk" style="left:777.59px;top:178.74px;width:70.63px;height:29.99px;background:#808080;border-left:1.3px solid #f2a626;border-right:0.8px solid #f2a626;border-bottom:1.2px solid #f2a626;border-radius:4px"><div class="t" style="left:1.6px;top:12.61px;font-size:10.2px;letter-spacing:-0.2px;color:#fff;-webkit-text-stroke:0.15px currentColor">DAYOFF</div></div>
<div style="left:848.82px;top:178.44px;width:70.63px;height:4.20px;background:linear-gradient(90deg,#a3cbe8 0 23.54px,#0000ff 23.54px 47.09px,#a3cbe8 47.09px);border-radius:3px 3px 0 0"></div>
<div class="blk" style="left:848.82px;top:182.04px;width:70.63px;height:26.69px;background:#0000ff;border-left:1.3px solid #f2a626;border-right:0.8px solid #f2a626;border-bottom:1.2px solid #f2a626;border-radius:4px;border-top-left-radius:1px;border-top-right-radius:1px"><div class="t" style="left:1.6px;top:8.34px;font-size:11px;letter-spacing:0px;color:#fff;-webkit-text-stroke:0.15px currentColor">8AM-4:00PM</div></div>
<div style="left:920.05px;top:178.44px;width:70.63px;height:4.20px;background:linear-gradient(90deg,#a3cbe8 0 23.54px,#0000ff 23.54px 47.09px,#a3cbe8 47.09px);border-radius:3px 3px 0 0"></div>
<div class="blk" style="left:920.05px;top:182.04px;width:70.63px;height:26.69px;background:#0000ff;border-left:1.3px solid #f2a626;border-right:0.8px solid #f2a626;border-bottom:1.2px solid #f2a626;border-radius:4px;border-top-left-radius:1px;border-top-right-radius:1px"><div class="t" style="left:1.6px;top:8.34px;font-size:11px;letter-spacing:0px;color:#fff;-webkit-text-stroke:0.15px currentColor">8AM-4:00PM</div></div>
<div style="left:991.28px;top:178.44px;width:70.63px;height:4.20px;background:linear-gradient(90deg,#a3cbe8 0 23.54px,#0000ff 23.54px 47.09px,#a3cbe8 47.09px);border-radius:3px 3px 0 0"></div>
<div class="blk" style="left:991.28px;top:182.04px;width:70.63px;height:26.69px;background:#0000ff;border-left:1.3px solid #f2a626;border-right:0.8px solid #f2a626;border-bottom:1.2px solid #f2a626;border-radius:4px;border-top-left-radius:1px;border-top-right-radius:1px"><div class="t" style="left:1.6px;top:8.34px;font-size:11px;letter-spacing:0px;color:#fff;-webkit-text-stroke:0.15px currentColor">8AM-4:00PM</div></div>
<div style="left:1062.51px;top:178.44px;width:70.63px;height:4.20px;background:linear-gradient(90deg,#a3cbe8 0 23.54px,#0000ff 23.54px 47.09px,#a3cbe8 47.09px);border-radius:3px 3px 0 0"></div>
<div class="blk" style="left:1062.51px;top:182.04px;width:70.63px;height:26.69px;background:#0000ff;border-left:1.3px solid #f2a626;border-right:0.8px solid #f2a626;border-bottom:1.2px solid #f2a626;border-radius:4px;border-top-left-radius:1px;border-top-right-radius:1px"><div class="t" style="left:1.6px;top:8.34px;font-size:11px;letter-spacing:0px;color:#fff;-webkit-text-stroke:0.15px currentColor">8AM-4:00PM</div></div>
<div class="blk" style="left:1133.74px;top:178.74px;width:70.63px;height:29.99px;background:#ffff00;border-left:1.3px solid #f2a626;border-right:0.8px solid #f2a626;border-bottom:1.2px solid #f2a626;border-radius:4px"><div class="t" style="left:1.6px;top:11.65px;font-size:11px;letter-spacing:0px;color:#ff3c00;-webkit-text-stroke:0.15px currentColor">P- Holiday</div></div>
<div class="blk" style="left:1204.97px;top:178.74px;width:70.63px;height:29.99px;background:#808080;border-left:1.3px solid #f2a626;border-right:0.8px solid #f2a626;border-bottom:1.2px solid #f2a626;border-radius:4px"><div class="t" style="left:1.6px;top:12.61px;font-size:10.2px;letter-spacing:-0.2px;color:#fff;-webkit-text-stroke:0.15px currentColor">DAYOFF</div></div>
<div class="blk" style="left:1276.20px;top:178.74px;width:70.63px;height:29.99px;background:#808080;border-left:1.3px solid #f2a626;border-right:0.8px solid #f2a626;border-bottom:1.2px solid #f2a626;border-radius:4px"><div class="t" style="left:1.6px;top:12.61px;font-size:10.2px;letter-spacing:-0.2px;color:#fff;-webkit-text-stroke:0.15px currentColor">DAYOFF</div></div>
<div class="blk" style="left:1347.43px;top:178.74px;width:70.63px;height:29.99px;background:#ffff00;border-left:1.3px solid #f2a626;border-right:0.8px solid #f2a626;border-bottom:1.2px solid #f2a626;border-radius:4px"><div class="t" style="left:1.6px;top:11.65px;font-size:11px;letter-spacing:0px;color:#ff3c00;-webkit-text-stroke:0.15px currentColor">P- Holiday</div></div>
<div style="left:1418.66px;top:178.44px;width:70.63px;height:4.20px;background:#a3cbe8;border-radius:3px 3px 0 0"></div>
<div class="blk" style="left:1418.66px;top:182.04px;width:70.63px;height:26.69px;background:#ffa500;border-left:1.3px solid #f2a626;border-right:0.8px solid #f2a626;border-bottom:1.2px solid #f2a626;border-radius:4px;border-top-left-radius:1px;border-top-right-radius:1px"><div class="t" style="left:1.6px;top:9.30px;font-size:10.2px;letter-spacing:-0.17px;color:#4a4a20;-webkit-text-stroke:0.15px currentColor">VAC</div></div>
<div style="left:1489.89px;top:178.44px;width:71.31px;height:4.20px;background:linear-gradient(90deg,#a3cbe8 0 23.77px,#0000ff 23.77px 47.54px,#a3cbe8 47.54px);border-radius:3px 3px 0 0"></div>
<div class="blk" style="left:1489.89px;top:182.04px;width:71.31px;height:26.69px;background:#0000ff;border-left:1.3px solid #f2a626;border-right:0.8px solid #f2a626;border-bottom:1.2px solid #f2a626;border-radius:4px;border-top-left-radius:1px;border-top-right-radius:1px"><div class="t" style="left:1.6px;top:8.34px;font-size:11px;letter-spacing:0px;color:#fff;-webkit-text-stroke:0.15px currentColor">8AM-4:00PM</div></div>
<div class="t" style="left:217.70px;top:217.08px;font-size:11px;font-weight:bold;color:#111;letter-spacing:0.45px;-webkit-text-stroke:0.25px #111">()-Luciana<span style='letter-spacing:-0.2px'>  </span>, Tommie<span style='letter-spacing:-0.2px'><span style='letter-spacing:-0.2px'>  </span> </span>(930)</div>
<div class="t" style="left:436.50px;top:217.08px;font-size:11px;font-weight:bold;color:#111;letter-spacing:0.6px;-webkit-text-stroke:0.25px #111">95:58</div>
<div class="t" style="left:470px;width:89.8px;text-align:right;top:217.08px;font-size:11px;font-weight:bold;color:#111;letter-spacing:0.55px;margin-right:-0.55px;-webkit-text-stroke:0.25px #111">2,629.60</div>
<div style="left:563.90px;top:208.13px;width:70.63px;height:4.20px;background:#a3cbe8;border-radius:3px 3px 0 0"></div>
<div class="blk" style="left:563.90px;top:211.73px;width:70.63px;height:26.69px;background:#ffa500;border-left:1.3px solid #f2a626;border-right:0.8px solid #f2a626;border-bottom:1.2px solid #f2a626;border-radius:4px;border-top-left-radius:1px;border-top-right-radius:1px"><div class="t" style="left:1.6px;top:9.30px;font-size:10.2px;letter-spacing:-0.17px;color:#4a4a20;-webkit-text-stroke:0.15px currentColor">VAC</div></div>
<div style="left:635.13px;top:208.13px;width:70.63px;height:4.20px;background:#a3cbe8;border-radius:3px 3px 0 0"></div>
<div class="blk" style="left:635.13px;top:211.73px;width:70.63px;height:26.69px;background:#ffa500;border-left:1.3px solid #f2a626;border-right:0.8px solid #f2a626;border-bottom:1.2px solid #f2a626;border-radius:4px;border-top-left-radius:1px;border-top-right-radius:1px"><div class="t" style="left:1.6px;top:9.30px;font-size:10.2px;letter-spacing:-0.17px;color:#4a4a20;-webkit-text-stroke:0.15px currentColor">VAC</div></div>
<div class="blk" style="left:706.36px;top:208.43px;width:70.63px;height:29.99px;background:#808080;border-left:1.3px solid #f2a626;border-right:0.8px solid #f2a626;border-bottom:1.2px solid #f2a626;border-radius:4px"><div class="t" style="left:1.6px;top:12.61px;font-size:10.2px;letter-spacing:-0.2px;color:#fff;-webkit-text-stroke:0.15px currentColor">DAYOFF</div></div>
<div class="blk" style="left:777.59px;top:208.43px;width:70.63px;height:29.99px;background:#808080;border-left:1.3px solid #f2a626;border-right:0.8px solid #f2a626;border-bottom:1.2px solid #f2a626;border-radius:4px"><div class="t" style="left:1.6px;top:12.61px;font-size:10.2px;letter-spacing:-0.2px;color:#fff;-webkit-text-stroke:0.15px currentColor">DAYOFF</div></div>
<div style="left:848.82px;top:208.13px;width:70.63px;height:4.20px;background:linear-gradient(90deg,#a3cbe8 0 23.54px,#0000ff 23.54px 47.09px,#a3cbe8 47.09px);border-radius:3px 3px 0 0"></div>
<div class="blk" style="left:848.82px;top:211.73px;width:70.63px;height:26.69px;background:#0000ff;border-left:1.3px solid #f2a626;border-right:0.8px solid #f2a626;border-bottom:1.2px solid #f2a626;border-radius:4px;border-top-left-radius:1px;border-top-right-radius:1px"><div class="t" style="left:1.6px;top:8.34px;font-size:11px;letter-spacing:0px;color:#fff;-webkit-text-stroke:0.15px currentColor">8AM-4:00PM</div></div>
<div style="left:920.05px;top:208.13px;width:70.63px;height:4.20px;background:linear-gradient(90deg,#a3cbe8 0 23.54px,#0000ff 23.54px 47.09px,#a3cbe8 47.09px);border-radius:3px 3px 0 0"></div>
<div class="blk" style="left:920.05px;top:211.73px;width:70.63px;height:26.69px;background:#0000ff;border-left:1.3px solid #f2a626;border-right:0.8px solid #f2a626;border-bottom:1.2px solid #f2a626;border-radius:4px;border-top-left-radius:1px;border-top-right-radius:1px"><div class="t" style="left:1.6px;top:8.34px;font-size:11px;letter-spacing:0px;color:#fff;-webkit-text-stroke:0.15px currentColor">8AM-4:00PM</div></div>
<div style="left:991.28px;top:208.13px;width:70.63px;height:4.20px;background:linear-gradient(90deg,#a3cbe8 0 23.54px,#0000ff 23.54px 47.09px,#a3cbe8 47.09px);border-radius:3px 3px 0 0"></div>
<div class="blk" style="left:991.28px;top:211.73px;width:70.63px;height:26.69px;background:#0000ff;border-left:1.3px solid #f2a626;border-right:0.8px solid #f2a626;border-bottom:1.2px solid #f2a626;border-radius:4px;border-top-left-radius:1px;border-top-right-radius:1px"><div class="t" style="left:1.6px;top:8.34px;font-size:11px;letter-spacing:0px;color:#fff;-webkit-text-stroke:0.15px currentColor">8AM-4:00PM</div></div>
<div style="left:1062.51px;top:208.13px;width:70.63px;height:4.20px;background:linear-gradient(90deg,#a3cbe8 0 23.54px,#0000ff 23.54px 47.09px,#a3cbe8 47.09px);border-radius:3px 3px 0 0"></div>
<div class="blk" style="left:1062.51px;top:211.73px;width:70.63px;height:26.69px;background:#0000ff;border-left:1.3px solid #f2a626;border-right:0.8px solid #f2a626;border-bottom:1.2px solid #f2a626;border-radius:4px;border-top-left-radius:1px;border-top-right-radius:1px"><div class="t" style="left:1.6px;top:8.34px;font-size:11px;letter-spacing:0px;color:#fff;-webkit-text-stroke:0.15px currentColor">8AM-4:00PM</div></div>
<div class="blk" style="left:1133.74px;top:208.43px;width:70.63px;height:29.99px;background:#ffff00;border-left:1.3px solid #f2a626;border-right:0.8px solid #f2a626;border-bottom:1.2px solid #f2a626;border-radius:4px"><div class="t" style="left:1.6px;top:11.65px;font-size:11px;letter-spacing:0px;color:#ff3c00;-webkit-text-stroke:0.15px currentColor">P- Holiday</div></div>
<div class="blk" style="left:1204.97px;top:208.43px;width:70.63px;height:29.99px;background:#808080;border-left:1.3px solid #f2a626;border-right:0.8px solid #f2a626;border-bottom:1.2px solid #f2a626;border-radius:4px"><div class="t" style="left:1.6px;top:12.61px;font-size:10.2px;letter-spacing:-0.2px;color:#fff;-webkit-text-stroke:0.15px currentColor">DAYOFF</div></div>
<div class="blk" style="left:1276.20px;top:208.43px;width:70.63px;height:29.99px;background:#808080;border-left:1.3px solid #f2a626;border-right:0.8px solid #f2a626;border-bottom:1.2px solid #f2a626;border-radius:4px"><div class="t" style="left:1.6px;top:12.61px;font-size:10.2px;letter-spacing:-0.2px;color:#fff;-webkit-text-stroke:0.15px currentColor">DAYOFF</div></div>
<div class="blk" style="left:1347.43px;top:208.43px;width:70.63px;height:29.99px;background:#ffff00;border-left:1.3px solid #f2a626;border-right:0.8px solid #f2a626;border-bottom:1.2px solid #f2a626;border-radius:4px"><div class="t" style="left:1.6px;top:11.65px;font-size:11px;letter-spacing:0px;color:#ff3c00;-webkit-text-stroke:0.15px currentColor">P- Holiday</div></div>
<div style="left:1418.66px;top:208.13px;width:70.63px;height:4.20px;background:linear-gradient(90deg,#a3cbe8 0 23.54px,#0000ff 23.54px 47.09px,#a3cbe8 47.09px);border-radius:3px 3px 0 0"></div>
<div class="blk" style="left:1418.66px;top:211.73px;width:70.63px;height:26.69px;background:#0000ff;border-left:1.3px solid #f2a626;border-right:0.8px solid #f2a626;border-bottom:1.2px solid #f2a626;border-radius:4px;border-top-left-radius:1px;border-top-right-radius:1px"><div class="t" style="left:1.6px;top:8.34px;font-size:11px;letter-spacing:0px;color:#fff;-webkit-text-stroke:0.15px currentColor">8AM-4:00PM</div></div>
<div style="left:1489.89px;top:208.13px;width:71.31px;height:4.20px;background:linear-gradient(90deg,#a3cbe8 0 23.77px,#0000ff 23.77px 47.54px,#a3cbe8 47.54px);border-radius:3px 3px 0 0"></div>
<div class="blk" style="left:1489.89px;top:211.73px;width:71.31px;height:26.69px;background:#0000ff;border-left:1.3px solid #f2a626;border-right:0.8px solid #f2a626;border-bottom:1.2px solid #f2a626;border-radius:4px;border-top-left-radius:1px;border-top-right-radius:1px"><div class="t" style="left:1.6px;top:8.34px;font-size:11px;letter-spacing:0px;color:#fff;-webkit-text-stroke:0.15px currentColor">8AM-4:00PM</div></div>
<div class="t" style="left:217.70px;top:246.77px;font-size:11px;font-weight:bold;color:#111;letter-spacing:0.45px;-webkit-text-stroke:0.25px #111">()-Magaret<span style='letter-spacing:-0.2px'>  </span>, Arturo<span style='letter-spacing:-0.2px'><span style='letter-spacing:-0.2px'>  </span> </span>(929)</div>
<div class="t" style="left:436.50px;top:246.77px;font-size:11px;font-weight:bold;color:#111;letter-spacing:0.6px;-webkit-text-stroke:0.25px #111">111:58</div>
<div class="t" style="left:470px;width:89.8px;text-align:right;top:246.77px;font-size:11px;font-weight:bold;color:#111;letter-spacing:0.55px;margin-right:-0.55px;-webkit-text-stroke:0.25px #111">3,477.63</div>
<div style="left:563.90px;top:237.82px;width:70.63px;height:4.20px;background:linear-gradient(90deg,#a3cbe8 0 23.54px,#0000ff 23.54px 47.09px,#a3cbe8 47.09px);border-radius:3px 3px 0 0"></div>
<div class="blk" style="left:563.90px;top:241.42px;width:70.63px;height:26.69px;background:#0000ff;border-left:1.3px solid #f2a626;border-right:0.8px solid #f2a626;border-bottom:1.2px solid #f2a626;border-radius:4px;border-top-left-radius:1px;border-top-right-radius:1px"><div class="t" style="left:1.6px;top:8.34px;font-size:11px;letter-spacing:0px;color:#fff;-webkit-text-stroke:0.15px currentColor">8AM-4:00PM</div></div>
<div style="left:635.13px;top:237.82px;width:70.63px;height:4.20px;background:linear-gradient(90deg,#a3cbe8 0 23.54px,#0000ff 23.54px 47.09px,#a3cbe8 47.09px);border-radius:3px 3px 0 0"></div>
<div class="blk" style="left:635.13px;top:241.42px;width:70.63px;height:26.69px;background:#0000ff;border-left:1.3px solid #f2a626;border-right:0.8px solid #f2a626;border-bottom:1.2px solid #f2a626;border-radius:4px;border-top-left-radius:1px;border-top-right-radius:1px"><div class="t" style="left:1.6px;top:8.34px;font-size:11px;letter-spacing:0px;color:#fff;-webkit-text-stroke:0.15px currentColor">8AM-4:00PM</div></div>
<div class="blk" style="left:706.36px;top:238.12px;width:70.63px;height:29.99px;background:#808080;border-left:1.3px solid #f2a626;border-right:0.8px solid #f2a626;border-bottom:1.2px solid #f2a626;border-radius:4px"><div class="t" style="left:1.6px;top:12.61px;font-size:10.2px;letter-spacing:-0.2px;color:#fff;-webkit-text-stroke:0.15px currentColor">DAYOFF</div></div>
<div class="blk" style="left:777.59px;top:238.12px;width:70.63px;height:29.99px;background:#808080;border-left:1.3px solid #f2a626;border-right:0.8px solid #f2a626;border-bottom:1.2px solid #f2a626;border-radius:4px"><div class="t" style="left:1.6px;top:12.61px;font-size:10.2px;letter-spacing:-0.2px;color:#fff;-webkit-text-stroke:0.15px currentColor">DAYOFF</div></div>
<div style="left:848.82px;top:237.82px;width:70.63px;height:4.20px;background:linear-gradient(90deg,#a3cbe8 0 23.54px,#0000ff 23.54px 47.09px,#a3cbe8 47.09px);border-radius:3px 3px 0 0"></div>
<div class="blk" style="left:848.82px;top:241.42px;width:70.63px;height:26.69px;background:#0000ff;border-left:1.3px solid #f2a626;border-right:0.8px solid #f2a626;border-bottom:1.2px solid #f2a626;border-radius:4px;border-top-left-radius:1px;border-top-right-radius:1px"><div class="t" style="left:1.6px;top:8.34px;font-size:11px;letter-spacing:0px;color:#fff;-webkit-text-stroke:0.15px currentColor">8AM-4:00PM</div></div>
<div style="left:920.05px;top:237.82px;width:70.63px;height:4.20px;background:linear-gradient(90deg,#a3cbe8 0 23.54px,#0000ff 23.54px 47.09px,#a3cbe8 47.09px);border-radius:3px 3px 0 0"></div>
<div class="blk" style="left:920.05px;top:241.42px;width:70.63px;height:26.69px;background:#0000ff;border-left:1.3px solid #f2a626;border-right:0.8px solid #f2a626;border-bottom:1.2px solid #f2a626;border-radius:4px;border-top-left-radius:1px;border-top-right-radius:1px"><div class="t" style="left:1.6px;top:8.34px;font-size:11px;letter-spacing:0px;color:#fff;-webkit-text-stroke:0.15px currentColor">8AM-4:00PM</div></div>
<div style="left:991.28px;top:237.82px;width:70.63px;height:4.20px;background:linear-gradient(90deg,#a3cbe8 0 23.54px,#0000ff 23.54px 47.09px,#a3cbe8 47.09px);border-radius:3px 3px 0 0"></div>
<div class="blk" style="left:991.28px;top:241.42px;width:70.63px;height:26.69px;background:#0000ff;border-left:1.3px solid #f2a626;border-right:0.8px solid #f2a626;border-bottom:1.2px solid #f2a626;border-radius:4px;border-top-left-radius:1px;border-top-right-radius:1px"><div class="t" style="left:1.6px;top:8.34px;font-size:11px;letter-spacing:0px;color:#fff;-webkit-text-stroke:0.15px currentColor">8AM-4:00PM</div></div>
<div style="left:1062.51px;top:237.82px;width:70.63px;height:4.20px;background:linear-gradient(90deg,#a3cbe8 0 23.54px,#0000ff 23.54px 47.09px,#a3cbe8 47.09px);border-radius:3px 3px 0 0"></div>
<div class="blk" style="left:1062.51px;top:241.42px;width:70.63px;height:26.69px;background:#0000ff;border-left:1.3px solid #f2a626;border-right:0.8px solid #f2a626;border-bottom:1.2px solid #f2a626;border-radius:4px;border-top-left-radius:1px;border-top-right-radius:1px"><div class="t" style="left:1.6px;top:8.34px;font-size:11px;letter-spacing:0px;color:#fff;-webkit-text-stroke:0.15px currentColor">8AM-4:00PM</div></div>
<div class="blk" style="left:1133.74px;top:238.12px;width:70.63px;height:29.99px;background:#ffff00;border-left:1.3px solid #f2a626;border-right:0.8px solid #f2a626;border-bottom:1.2px solid #f2a626;border-radius:4px"><div class="t" style="left:1.6px;top:11.65px;font-size:11px;letter-spacing:0px;color:#ff3c00;-webkit-text-stroke:0.15px currentColor">P- Holiday</div></div>
<div class="blk" style="left:1204.97px;top:238.12px;width:70.63px;height:29.99px;background:#808080;border-left:1.3px solid #f2a626;border-right:0.8px solid #f2a626;border-bottom:1.2px solid #f2a626;border-radius:4px"><div class="t" style="left:1.6px;top:12.61px;font-size:10.2px;letter-spacing:-0.2px;color:#fff;-webkit-text-stroke:0.15px currentColor">DAYOFF</div></div>
<div class="blk" style="left:1276.20px;top:238.12px;width:70.63px;height:29.99px;background:#808080;border-left:1.3px solid #f2a626;border-right:0.8px solid #f2a626;border-bottom:1.2px solid #f2a626;border-radius:4px"><div class="t" style="left:1.6px;top:12.61px;font-size:10.2px;letter-spacing:-0.2px;color:#fff;-webkit-text-stroke:0.15px currentColor">DAYOFF</div></div>
<div class="blk" style="left:1347.43px;top:238.12px;width:70.63px;height:29.99px;background:#ffff00;border-left:1.3px solid #f2a626;border-right:0.8px solid #f2a626;border-bottom:1.2px solid #f2a626;border-radius:4px"><div class="t" style="left:1.6px;top:11.65px;font-size:11px;letter-spacing:0px;color:#ff3c00;-webkit-text-stroke:0.15px currentColor">P- Holiday</div></div>
<div style="left:1418.66px;top:237.82px;width:70.63px;height:4.20px;background:linear-gradient(90deg,#a3cbe8 0 23.54px,#0000ff 23.54px 47.09px,#a3cbe8 47.09px);border-radius:3px 3px 0 0"></div>
<div class="blk" style="left:1418.66px;top:241.42px;width:70.63px;height:26.69px;background:#0000ff;border-left:1.3px solid #f2a626;border-right:0.8px solid #f2a626;border-bottom:1.2px solid #f2a626;border-radius:4px;border-top-left-radius:1px;border-top-right-radius:1px"><div class="t" style="left:1.6px;top:8.34px;font-size:11px;letter-spacing:0px;color:#fff;-webkit-text-stroke:0.15px currentColor">8AM-4:00PM</div></div>
<div style="left:1489.89px;top:237.82px;width:71.31px;height:4.20px;background:linear-gradient(90deg,#a3cbe8 0 23.77px,#0000ff 23.77px 47.54px,#a3cbe8 47.54px);border-radius:3px 3px 0 0"></div>
<div class="blk" style="left:1489.89px;top:241.42px;width:71.31px;height:26.69px;background:#0000ff;border-left:1.3px solid #f2a626;border-right:0.8px solid #f2a626;border-bottom:1.2px solid #f2a626;border-radius:4px;border-top-left-radius:1px;border-top-right-radius:1px"><div class="t" style="left:1.6px;top:8.34px;font-size:11px;letter-spacing:0px;color:#fff;-webkit-text-stroke:0.15px currentColor">8AM-4:00PM</div></div>
<div class="t" style="left:217.70px;top:291.30px;font-size:11px;font-weight:bold;color:#111;letter-spacing:0.45px;-webkit-text-stroke:0.25px #111">()-Porfirio<span style='letter-spacing:-0.2px'>  </span>, Burma<span style='letter-spacing:-0.2px'><span style='letter-spacing:-0.2px'>  </span> </span>(12)</div>
<div class="t" style="left:436.50px;top:291.30px;font-size:11px;font-weight:bold;color:#111;letter-spacing:0.6px;-webkit-text-stroke:0.25px #111">47:58</div>
<div class="t" style="left:470px;width:89.8px;text-align:right;top:291.30px;font-size:11px;font-weight:bold;color:#111;letter-spacing:0.55px;margin-right:-0.55px;-webkit-text-stroke:0.25px #111">1,300.96</div>
<div style="left:563.90px;top:267.51px;width:70.63px;height:4.20px;background:#a3cbe8;border-radius:3px 3px 0 0"></div>
<div class="blk" style="left:563.90px;top:271.11px;width:70.63px;height:26.69px;background:#ffa500;border-left:1.3px solid #f2a626;border-right:0.8px solid #f2a626;border-bottom:1.2px solid #f2a626;border-radius:4px;border-top-left-radius:1px;border-top-right-radius:1px"><div class="t" style="left:1.6px;top:9.30px;font-size:10.2px;letter-spacing:-0.17px;color:#4a4a20;-webkit-text-stroke:0.15px currentColor">VAC</div></div>
<div style="left:563.90px;top:297.20px;width:70.63px;height:4.20px;background:#a3cbe8;border-radius:3px 3px 0 0"></div>
<div class="blk" style="left:563.90px;top:300.80px;width:70.63px;height:26.69px;background:#0000ff;border-left:1.3px solid #f2a626;border-right:0.8px solid #f2a626;border-bottom:1.2px solid #f2a626;border-radius:4px;border-top-left-radius:1px;border-top-right-radius:1px"><div class="t" style="left:1.6px;top:8.34px;font-size:11px;letter-spacing:0px;color:#fff;-webkit-text-stroke:0.15px currentColor">vacation</div></div>
<div style="left:635.13px;top:267.51px;width:70.63px;height:4.20px;background:#a3cbe8;border-radius:3px 3px 0 0"></div>
<div class="blk" style="left:635.13px;top:271.11px;width:70.63px;height:26.69px;background:#ffa500;border-left:1.3px solid #f2a626;border-right:0.8px solid #f2a626;border-bottom:1.2px solid #f2a626;border-radius:4px;border-top-left-radius:1px;border-top-right-radius:1px"><div class="t" style="left:1.6px;top:9.30px;font-size:10.2px;letter-spacing:-0.17px;color:#4a4a20;-webkit-text-stroke:0.15px currentColor">VAC</div></div>
<div class="blk" style="left:706.36px;top:267.81px;width:70.63px;height:29.99px;background:#808080;border-left:1.3px solid #f2a626;border-right:0.8px solid #f2a626;border-bottom:1.2px solid #f2a626;border-radius:4px"><div class="t" style="left:1.6px;top:12.61px;font-size:10.2px;letter-spacing:-0.2px;color:#fff;-webkit-text-stroke:0.15px currentColor">DAYOFF</div></div>
<div class="blk" style="left:777.59px;top:267.81px;width:70.63px;height:29.99px;background:#808080;border-left:1.3px solid #f2a626;border-right:0.8px solid #f2a626;border-bottom:1.2px solid #f2a626;border-radius:4px"><div class="t" style="left:1.6px;top:12.61px;font-size:10.2px;letter-spacing:-0.2px;color:#fff;-webkit-text-stroke:0.15px currentColor">DAYOFF</div></div>
<div style="left:848.82px;top:267.51px;width:70.63px;height:4.20px;background:#a3cbe8;border-radius:3px 3px 0 0"></div>
<div class="blk" style="left:848.82px;top:271.11px;width:70.63px;height:26.69px;background:#ffa500;border-left:1.3px solid #f2a626;border-right:0.8px solid #f2a626;border-bottom:1.2px solid #f2a626;border-radius:4px;border-top-left-radius:1px;border-top-right-radius:1px"><div class="t" style="left:1.6px;top:9.30px;font-size:10.2px;letter-spacing:-0.17px;color:#4a4a20;-webkit-text-stroke:0.15px currentColor">VAC</div></div>
<div style="left:920.05px;top:267.51px;width:70.63px;height:4.20px;background:#a3cbe8;border-radius:3px 3px 0 0"></div>
<div class="blk" style="left:920.05px;top:271.11px;width:70.63px;height:26.69px;background:#ffa500;border-left:1.3px solid #f2a626;border-right:0.8px solid #f2a626;border-bottom:1.2px solid #f2a626;border-radius:4px;border-top-left-radius:1px;border-top-right-radius:1px"><div class="t" style="left:1.6px;top:9.30px;font-size:10.2px;letter-spacing:-0.17px;color:#4a4a20;-webkit-text-stroke:0.15px currentColor">VAC</div></div>
<div style="left:991.28px;top:267.51px;width:70.63px;height:4.20px;background:#a3cbe8;border-radius:3px 3px 0 0"></div>
<div class="blk" style="left:991.28px;top:271.11px;width:70.63px;height:26.69px;background:#ffa500;border-left:1.3px solid #f2a626;border-right:0.8px solid #f2a626;border-bottom:1.2px solid #f2a626;border-radius:4px;border-top-left-radius:1px;border-top-right-radius:1px"><div class="t" style="left:1.6px;top:9.30px;font-size:10.2px;letter-spacing:-0.17px;color:#4a4a20;-webkit-text-stroke:0.15px currentColor">VAC</div></div>
<div style="left:1062.51px;top:267.51px;width:70.63px;height:4.20px;background:#a3cbe8;border-radius:3px 3px 0 0"></div>
<div class="blk" style="left:1062.51px;top:271.11px;width:70.63px;height:26.69px;background:#ffa500;border-left:1.3px solid #f2a626;border-right:0.8px solid #f2a626;border-bottom:1.2px solid #f2a626;border-radius:4px;border-top-left-radius:1px;border-top-right-radius:1px"><div class="t" style="left:1.6px;top:9.30px;font-size:10.2px;letter-spacing:-0.17px;color:#4a4a20;-webkit-text-stroke:0.15px currentColor">VAC</div></div>
<div class="blk" style="left:1133.74px;top:267.81px;width:70.63px;height:29.99px;background:#ffff00;border-left:1.3px solid #f2a626;border-right:0.8px solid #f2a626;border-bottom:1.2px solid #f2a626;border-radius:4px"><div class="t" style="left:1.6px;top:11.65px;font-size:11px;letter-spacing:0px;color:#ff3c00;-webkit-text-stroke:0.15px currentColor">P- Holiday</div></div>
<div class="blk" style="left:1204.97px;top:267.81px;width:70.63px;height:29.99px;background:#808080;border-left:1.3px solid #f2a626;border-right:0.8px solid #f2a626;border-bottom:1.2px solid #f2a626;border-radius:4px"><div class="t" style="left:1.6px;top:12.61px;font-size:10.2px;letter-spacing:-0.2px;color:#fff;-webkit-text-stroke:0.15px currentColor">DAYOFF</div></div>
<div class="blk" style="left:1276.20px;top:267.81px;width:70.63px;height:29.99px;background:#808080;border-left:1.3px solid #f2a626;border-right:0.8px solid #f2a626;border-bottom:1.2px solid #f2a626;border-radius:4px"><div class="t" style="left:1.6px;top:12.61px;font-size:10.2px;letter-spacing:-0.2px;color:#fff;-webkit-text-stroke:0.15px currentColor">DAYOFF</div></div>
<div class="blk" style="left:1347.43px;top:267.81px;width:70.63px;height:29.99px;background:#ffff00;border-left:1.3px solid #f2a626;border-right:0.8px solid #f2a626;border-bottom:1.2px solid #f2a626;border-radius:4px"><div class="t" style="left:1.6px;top:11.65px;font-size:11px;letter-spacing:0px;color:#ff3c00;-webkit-text-stroke:0.15px currentColor">P- Holiday</div></div>
<div style="left:1418.66px;top:267.51px;width:70.63px;height:4.20px;background:#a3cbe8;border-radius:3px 3px 0 0"></div>
<div class="blk" style="left:1418.66px;top:271.11px;width:70.63px;height:26.69px;background:#ffa500;border-left:1.3px solid #f2a626;border-right:0.8px solid #f2a626;border-bottom:1.2px solid #f2a626;border-radius:4px;border-top-left-radius:1px;border-top-right-radius:1px"><div class="t" style="left:1.6px;top:9.30px;font-size:10.2px;letter-spacing:-0.17px;color:#4a4a20;-webkit-text-stroke:0.15px currentColor">VAC</div></div>
<div style="left:1489.89px;top:267.51px;width:71.31px;height:4.20px;background:#a3cbe8;border-radius:3px 3px 0 0"></div>
<div class="blk" style="left:1489.89px;top:271.11px;width:71.31px;height:26.69px;background:#ffa500;border-left:1.3px solid #f2a626;border-right:0.8px solid #f2a626;border-bottom:1.2px solid #f2a626;border-radius:4px;border-top-left-radius:1px;border-top-right-radius:1px"><div class="t" style="left:1.6px;top:9.30px;font-size:10.2px;letter-spacing:-0.17px;color:#4a4a20;-webkit-text-stroke:0.15px currentColor">VAC</div></div>
<div class="t" style="left:217.70px;top:335.84px;font-size:11px;font-weight:bold;color:#111;letter-spacing:0.45px;-webkit-text-stroke:0.25px #111">()-Roselia<span style='letter-spacing:-0.2px'>  </span>, Shelba<span style='letter-spacing:-0.2px'><span style='letter-spacing:-0.2px'>  </span> </span>(928)</div>
<div class="t" style="left:436.50px;top:335.84px;font-size:11px;font-weight:bold;color:#111;letter-spacing:0.6px;-webkit-text-stroke:0.25px #111">111:58</div>
<div class="t" style="left:470px;width:89.8px;text-align:right;top:335.84px;font-size:11px;font-weight:bold;color:#111;letter-spacing:0.55px;margin-right:-0.55px;-webkit-text-stroke:0.25px #111">3,072.48</div>
<div style="left:563.90px;top:326.89px;width:70.63px;height:4.20px;background:linear-gradient(90deg,#a3cbe8 0 23.54px,#0000ff 23.54px 47.09px,#a3cbe8 47.09px);border-radius:3px 3px 0 0"></div>
<div class="blk" style="left:563.90px;top:330.49px;width:70.63px;height:26.69px;background:#0000ff;border-left:1.3px solid #f2a626;border-right:0.8px solid #f2a626;border-bottom:1.2px solid #f2a626;border-radius:4px;border-top-left-radius:1px;border-top-right-radius:1px"><div class="t" style="left:1.6px;top:8.34px;font-size:11px;letter-spacing:0px;color:#fff;-webkit-text-stroke:0.15px currentColor">8AM-4:00PM</div></div>
<div style="left:635.13px;top:326.89px;width:70.63px;height:4.20px;background:linear-gradient(90deg,#a3cbe8 0 23.54px,#0000ff 23.54px 47.09px,#a3cbe8 47.09px);border-radius:3px 3px 0 0"></div>
<div class="blk" style="left:635.13px;top:330.49px;width:70.63px;height:26.69px;background:#0000ff;border-left:1.3px solid #f2a626;border-right:0.8px solid #f2a626;border-bottom:1.2px solid #f2a626;border-radius:4px;border-top-left-radius:1px;border-top-right-radius:1px"><div class="t" style="left:1.6px;top:8.34px;font-size:11px;letter-spacing:0px;color:#fff;-webkit-text-stroke:0.15px currentColor">8AM-4:00PM</div></div>
<div class="blk" style="left:706.36px;top:327.19px;width:70.63px;height:29.99px;background:#808080;border-left:1.3px solid #f2a626;border-right:0.8px solid #f2a626;border-bottom:1.2px solid #f2a626;border-radius:4px"><div class="t" style="left:1.6px;top:12.61px;font-size:10.2px;letter-spacing:-0.2px;color:#fff;-webkit-text-stroke:0.15px currentColor">DAYOFF</div></div>
<div class="blk" style="left:777.59px;top:327.19px;width:70.63px;height:29.99px;background:#808080;border-left:1.3px solid #f2a626;border-right:0.8px solid #f2a626;border-bottom:1.2px solid #f2a626;border-radius:4px"><div class="t" style="left:1.6px;top:12.61px;font-size:10.2px;letter-spacing:-0.2px;color:#fff;-webkit-text-stroke:0.15px currentColor">DAYOFF</div></div>
<div style="left:848.82px;top:326.89px;width:70.63px;height:4.20px;background:linear-gradient(90deg,#a3cbe8 0 23.54px,#0000ff 23.54px 47.09px,#a3cbe8 47.09px);border-radius:3px 3px 0 0"></div>
<div class="blk" style="left:848.82px;top:330.49px;width:70.63px;height:26.69px;background:#0000ff;border-left:1.3px solid #f2a626;border-right:0.8px solid #f2a626;border-bottom:1.2px solid #f2a626;border-radius:4px;border-top-left-radius:1px;border-top-right-radius:1px"><div class="t" style="left:1.6px;top:8.34px;font-size:11px;letter-spacing:0px;color:#fff;-webkit-text-stroke:0.15px currentColor">8AM-4:00PM</div></div>
<div style="left:920.05px;top:326.89px;width:70.63px;height:4.20px;background:linear-gradient(90deg,#a3cbe8 0 23.54px,#0000ff 23.54px 47.09px,#a3cbe8 47.09px);border-radius:3px 3px 0 0"></div>
<div class="blk" style="left:920.05px;top:330.49px;width:70.63px;height:26.69px;background:#0000ff;border-left:1.3px solid #f2a626;border-right:0.8px solid #f2a626;border-bottom:1.2px solid #f2a626;border-radius:4px;border-top-left-radius:1px;border-top-right-radius:1px"><div class="t" style="left:1.6px;top:8.34px;font-size:11px;letter-spacing:0px;color:#fff;-webkit-text-stroke:0.15px currentColor">8AM-4:00PM</div></div>
<div style="left:991.28px;top:326.89px;width:70.63px;height:4.20px;background:linear-gradient(90deg,#a3cbe8 0 23.54px,#0000ff 23.54px 47.09px,#a3cbe8 47.09px);border-radius:3px 3px 0 0"></div>
<div class="blk" style="left:991.28px;top:330.49px;width:70.63px;height:26.69px;background:#0000ff;border-left:1.3px solid #f2a626;border-right:0.8px solid #f2a626;border-bottom:1.2px solid #f2a626;border-radius:4px;border-top-left-radius:1px;border-top-right-radius:1px"><div class="t" style="left:1.6px;top:8.34px;font-size:11px;letter-spacing:0px;color:#fff;-webkit-text-stroke:0.15px currentColor">8AM-4:00PM</div></div>
<div style="left:1062.51px;top:326.89px;width:70.63px;height:4.20px;background:linear-gradient(90deg,#a3cbe8 0 23.54px,#0000ff 23.54px 47.09px,#a3cbe8 47.09px);border-radius:3px 3px 0 0"></div>
<div class="blk" style="left:1062.51px;top:330.49px;width:70.63px;height:26.69px;background:#0000ff;border-left:1.3px solid #f2a626;border-right:0.8px solid #f2a626;border-bottom:1.2px solid #f2a626;border-radius:4px;border-top-left-radius:1px;border-top-right-radius:1px"><div class="t" style="left:1.6px;top:8.34px;font-size:11px;letter-spacing:0px;color:#fff;-webkit-text-stroke:0.15px currentColor">8AM-4:00PM</div></div>
<div class="blk" style="left:1133.74px;top:327.19px;width:70.63px;height:29.99px;background:#ffff00;border-left:1.3px solid #f2a626;border-right:0.8px solid #f2a626;border-bottom:1.2px solid #f2a626;border-radius:4px"><div class="t" style="left:1.6px;top:11.65px;font-size:11px;letter-spacing:0px;color:#ff3c00;-webkit-text-stroke:0.15px currentColor">P- Holiday</div></div>
<div class="blk" style="left:1204.97px;top:327.19px;width:70.63px;height:29.99px;background:#808080;border-left:1.3px solid #f2a626;border-right:0.8px solid #f2a626;border-bottom:1.2px solid #f2a626;border-radius:4px"><div class="t" style="left:1.6px;top:12.61px;font-size:10.2px;letter-spacing:-0.2px;color:#fff;-webkit-text-stroke:0.15px currentColor">DAYOFF</div></div>
<div class="blk" style="left:1276.20px;top:327.19px;width:70.63px;height:29.99px;background:#808080;border-left:1.3px solid #f2a626;border-right:0.8px solid #f2a626;border-bottom:1.2px solid #f2a626;border-radius:4px"><div class="t" style="left:1.6px;top:12.61px;font-size:10.2px;letter-spacing:-0.2px;color:#fff;-webkit-text-stroke:0.15px currentColor">DAYOFF</div></div>
<div class="blk" style="left:1347.43px;top:327.19px;width:70.63px;height:29.99px;background:#ffff00;border-left:1.3px solid #f2a626;border-right:0.8px solid #f2a626;border-bottom:1.2px solid #f2a626;border-radius:4px"><div class="t" style="left:1.6px;top:11.65px;font-size:11px;letter-spacing:0px;color:#ff3c00;-webkit-text-stroke:0.15px currentColor">P- Holiday</div></div>
<div style="left:1418.66px;top:326.89px;width:70.63px;height:4.20px;background:linear-gradient(90deg,#a3cbe8 0 23.54px,#0000ff 23.54px 47.09px,#a3cbe8 47.09px);border-radius:3px 3px 0 0"></div>
<div class="blk" style="left:1418.66px;top:330.49px;width:70.63px;height:26.69px;background:#0000ff;border-left:1.3px solid #f2a626;border-right:0.8px solid #f2a626;border-bottom:1.2px solid #f2a626;border-radius:4px;border-top-left-radius:1px;border-top-right-radius:1px"><div class="t" style="left:1.6px;top:8.34px;font-size:11px;letter-spacing:0px;color:#fff;-webkit-text-stroke:0.15px currentColor">8AM-4:00PM</div></div>
<div style="left:1489.89px;top:326.89px;width:71.31px;height:4.20px;background:linear-gradient(90deg,#a3cbe8 0 23.77px,#0000ff 23.77px 47.54px,#a3cbe8 47.54px);border-radius:3px 3px 0 0"></div>
<div class="blk" style="left:1489.89px;top:330.49px;width:71.31px;height:26.69px;background:#0000ff;border-left:1.3px solid #f2a626;border-right:0.8px solid #f2a626;border-bottom:1.2px solid #f2a626;border-radius:4px;border-top-left-radius:1px;border-top-right-radius:1px"><div class="t" style="left:1.6px;top:8.34px;font-size:11px;letter-spacing:0px;color:#fff;-webkit-text-stroke:0.15px currentColor">8AM-4:00PM</div></div>
<div class="t" style="left:217.70px;top:365.52px;font-size:11px;font-weight:bold;color:#111;letter-spacing:0.45px;-webkit-text-stroke:0.25px #111">()-Roselle<span style='letter-spacing:-0.2px'>  </span>, Peter<span style='letter-spacing:-0.2px'><span style='letter-spacing:-0.2px'>  </span> </span>(30)</div>
<div class="t" style="left:436.50px;top:365.52px;font-size:11px;font-weight:bold;color:#111;letter-spacing:0.6px;-webkit-text-stroke:0.25px #111">111:58</div>
<div class="t" style="left:470px;width:89.8px;text-align:right;top:365.52px;font-size:11px;font-weight:bold;color:#111;letter-spacing:0.55px;margin-right:-0.55px;-webkit-text-stroke:0.25px #111">3,477.63</div>
<div style="left:563.90px;top:356.58px;width:70.63px;height:4.20px;background:linear-gradient(90deg,#a3cbe8 0 23.54px,#0000ff 23.54px 47.09px,#a3cbe8 47.09px);border-radius:3px 3px 0 0"></div>
<div class="blk" style="left:563.90px;top:360.18px;width:70.63px;height:26.69px;background:#0000ff;border-left:1.3px solid #f2a626;border-right:0.8px solid #f2a626;border-bottom:1.2px solid #f2a626;border-radius:4px;border-top-left-radius:1px;border-top-right-radius:1px"><div class="t" style="left:1.6px;top:8.35px;font-size:11px;letter-spacing:0px;color:#fff;-webkit-text-stroke:0.15px currentColor">8AM-4:00PM</div></div>
<div style="left:635.13px;top:356.58px;width:70.63px;height:4.20px;background:linear-gradient(90deg,#a3cbe8 0 23.54px,#0000ff 23.54px 47.09px,#a3cbe8 47.09px);border-radius:3px 3px 0 0"></div>
<div class="blk" style="left:635.13px;top:360.18px;width:70.63px;height:26.69px;background:#0000ff;border-left:1.3px solid #f2a626;border-right:0.8px solid #f2a626;border-bottom:1.2px solid #f2a626;border-radius:4px;border-top-left-radius:1px;border-top-right-radius:1px"><div class="t" style="left:1.6px;top:8.35px;font-size:11px;letter-spacing:0px;color:#fff;-webkit-text-stroke:0.15px currentColor">8AM-4:00PM</div></div>
<div class="blk" style="left:706.36px;top:356.88px;width:70.63px;height:29.99px;background:#808080;border-left:1.3px solid #f2a626;border-right:0.8px solid #f2a626;border-bottom:1.2px solid #f2a626;border-radius:4px"><div class="t" style="left:1.6px;top:12.61px;font-size:10.2px;letter-spacing:-0.2px;color:#fff;-webkit-text-stroke:0.15px currentColor">DAYOFF</div></div>
<div class="blk" style="left:777.59px;top:356.88px;width:70.63px;height:29.99px;background:#808080;border-left:1.3px solid #f2a626;border-right:0.8px solid #f2a626;border-bottom:1.2px solid #f2a626;border-radius:4px"><div class="t" style="left:1.6px;top:12.61px;font-size:10.2px;letter-spacing:-0.2px;color:#fff;-webkit-text-stroke:0.15px currentColor">DAYOFF</div></div>
<div style="left:848.82px;top:356.58px;width:70.63px;height:4.20px;background:linear-gradient(90deg,#a3cbe8 0 23.54px,#0000ff 23.54px 47.09px,#a3cbe8 47.09px);border-radius:3px 3px 0 0"></div>
<div class="blk" style="left:848.82px;top:360.18px;width:70.63px;height:26.69px;background:#0000ff;border-left:1.3px solid #f2a626;border-right:0.8px solid #f2a626;border-bottom:1.2px solid #f2a626;border-radius:4px;border-top-left-radius:1px;border-top-right-radius:1px"><div class="t" style="left:1.6px;top:8.35px;font-size:11px;letter-spacing:0px;color:#fff;-webkit-text-stroke:0.15px currentColor">8AM-4:00PM</div></div>
<div style="left:920.05px;top:356.58px;width:70.63px;height:4.20px;background:linear-gradient(90deg,#a3cbe8 0 23.54px,#0000ff 23.54px 47.09px,#a3cbe8 47.09px);border-radius:3px 3px 0 0"></div>
<div class="blk" style="left:920.05px;top:360.18px;width:70.63px;height:26.69px;background:#0000ff;border-left:1.3px solid #f2a626;border-right:0.8px solid #f2a626;border-bottom:1.2px solid #f2a626;border-radius:4px;border-top-left-radius:1px;border-top-right-radius:1px"><div class="t" style="left:1.6px;top:8.35px;font-size:11px;letter-spacing:0px;color:#fff;-webkit-text-stroke:0.15px currentColor">8AM-4:00PM</div></div>
<div style="left:991.28px;top:356.58px;width:70.63px;height:4.20px;background:linear-gradient(90deg,#a3cbe8 0 23.54px,#0000ff 23.54px 47.09px,#a3cbe8 47.09px);border-radius:3px 3px 0 0"></div>
<div class="blk" style="left:991.28px;top:360.18px;width:70.63px;height:26.69px;background:#0000ff;border-left:1.3px solid #f2a626;border-right:0.8px solid #f2a626;border-bottom:1.2px solid #f2a626;border-radius:4px;border-top-left-radius:1px;border-top-right-radius:1px"><div class="t" style="left:1.6px;top:8.35px;font-size:11px;letter-spacing:0px;color:#fff;-webkit-text-stroke:0.15px currentColor">8AM-4:00PM</div></div>
<div style="left:1062.51px;top:356.58px;width:70.63px;height:4.20px;background:linear-gradient(90deg,#a3cbe8 0 23.54px,#0000ff 23.54px 47.09px,#a3cbe8 47.09px);border-radius:3px 3px 0 0"></div>
<div class="blk" style="left:1062.51px;top:360.18px;width:70.63px;height:26.69px;background:#0000ff;border-left:1.3px solid #f2a626;border-right:0.8px solid #f2a626;border-bottom:1.2px solid #f2a626;border-radius:4px;border-top-left-radius:1px;border-top-right-radius:1px"><div class="t" style="left:1.6px;top:8.35px;font-size:11px;letter-spacing:0px;color:#fff;-webkit-text-stroke:0.15px currentColor">8AM-4:00PM</div></div>
<div class="blk" style="left:1133.74px;top:356.88px;width:70.63px;height:29.99px;background:#ffff00;border-left:1.3px solid #f2a626;border-right:0.8px solid #f2a626;border-bottom:1.2px solid #f2a626;border-radius:4px"><div class="t" style="left:1.6px;top:11.65px;font-size:11px;letter-spacing:0px;color:#ff3c00;-webkit-text-stroke:0.15px currentColor">P- Holiday</div></div>
<div class="blk" style="left:1204.97px;top:356.88px;width:70.63px;height:29.99px;background:#808080;border-left:1.3px solid #f2a626;border-right:0.8px solid #f2a626;border-bottom:1.2px solid #f2a626;border-radius:4px"><div class="t" style="left:1.6px;top:12.61px;font-size:10.2px;letter-spacing:-0.2px;color:#fff;-webkit-text-stroke:0.15px currentColor">DAYOFF</div></div>
<div class="blk" style="left:1276.20px;top:356.88px;width:70.63px;height:29.99px;background:#808080;border-left:1.3px solid #f2a626;border-right:0.8px solid #f2a626;border-bottom:1.2px solid #f2a626;border-radius:4px"><div class="t" style="left:1.6px;top:12.61px;font-size:10.2px;letter-spacing:-0.2px;color:#fff;-webkit-text-stroke:0.15px currentColor">DAYOFF</div></div>
<div class="blk" style="left:1347.43px;top:356.88px;width:70.63px;height:29.99px;background:#ffff00;border-left:1.3px solid #f2a626;border-right:0.8px solid #f2a626;border-bottom:1.2px solid #f2a626;border-radius:4px"><div class="t" style="left:1.6px;top:11.65px;font-size:11px;letter-spacing:0px;color:#ff3c00;-webkit-text-stroke:0.15px currentColor">P- Holiday</div></div>
<div style="left:1418.66px;top:356.58px;width:70.63px;height:4.20px;background:linear-gradient(90deg,#a3cbe8 0 23.54px,#0000ff 23.54px 47.09px,#a3cbe8 47.09px);border-radius:3px 3px 0 0"></div>
<div class="blk" style="left:1418.66px;top:360.18px;width:70.63px;height:26.69px;background:#0000ff;border-left:1.3px solid #f2a626;border-right:0.8px solid #f2a626;border-bottom:1.2px solid #f2a626;border-radius:4px;border-top-left-radius:1px;border-top-right-radius:1px"><div class="t" style="left:1.6px;top:8.35px;font-size:11px;letter-spacing:0px;color:#fff;-webkit-text-stroke:0.15px currentColor">8AM-4:00PM</div></div>
<div style="left:1489.89px;top:356.58px;width:71.31px;height:4.20px;background:linear-gradient(90deg,#a3cbe8 0 23.77px,#0000ff 23.77px 47.54px,#a3cbe8 47.54px);border-radius:3px 3px 0 0"></div>
<div class="blk" style="left:1489.89px;top:360.18px;width:71.31px;height:26.69px;background:#0000ff;border-left:1.3px solid #f2a626;border-right:0.8px solid #f2a626;border-bottom:1.2px solid #f2a626;border-radius:4px;border-top-left-radius:1px;border-top-right-radius:1px"><div class="t" style="left:1.6px;top:8.35px;font-size:11px;letter-spacing:0px;color:#fff;-webkit-text-stroke:0.15px currentColor">8AM-4:00PM</div></div>
<div class="t" style="left:217.70px;top:395.22px;font-size:11px;font-weight:bold;color:#111;letter-spacing:0.45px;-webkit-text-stroke:0.25px #111">()-Ayesha<span style='letter-spacing:-0.2px'>  </span>, Pattie<span style='letter-spacing:-0.2px'><span style='letter-spacing:-0.2px'>  </span> </span>(99)</div>
<div class="t" style="left:436.50px;top:395.22px;font-size:11px;font-weight:bold;color:#111;letter-spacing:0.6px;-webkit-text-stroke:0.25px #111">111:58</div>
<div class="t" style="left:470px;width:89.8px;text-align:right;top:395.22px;font-size:11px;font-weight:bold;color:#111;letter-spacing:0.55px;margin-right:-0.55px;-webkit-text-stroke:0.25px #111">2,582.97</div>
<div style="left:563.90px;top:386.27px;width:70.63px;height:4.20px;background:linear-gradient(90deg,#a3cbe8 0 23.54px,#0000ff 23.54px 47.09px,#a3cbe8 47.09px);border-radius:3px 3px 0 0"></div>
<div class="blk" style="left:563.90px;top:389.87px;width:70.63px;height:26.69px;background:#0000ff;border-left:1.3px solid #f2a626;border-right:0.8px solid #f2a626;border-bottom:1.2px solid #f2a626;border-radius:4px;border-top-left-radius:1px;border-top-right-radius:1px"><div class="t" style="left:1.6px;top:8.35px;font-size:11px;letter-spacing:0px;color:#fff;-webkit-text-stroke:0.15px currentColor">8AM-4:00PM</div></div>
<div style="left:635.13px;top:386.27px;width:70.63px;height:4.20px;background:linear-gradient(90deg,#a3cbe8 0 23.54px,#0000ff 23.54px 47.09px,#a3cbe8 47.09px);border-radius:3px 3px 0 0"></div>
<div class="blk" style="left:635.13px;top:389.87px;width:70.63px;height:26.69px;background:#0000ff;border-left:1.3px solid #f2a626;border-right:0.8px solid #f2a626;border-bottom:1.2px solid #f2a626;border-radius:4px;border-top-left-radius:1px;border-top-right-radius:1px"><div class="t" style="left:1.6px;top:8.35px;font-size:11px;letter-spacing:0px;color:#fff;-webkit-text-stroke:0.15px currentColor">8AM-4:00PM</div></div>
<div class="blk" style="left:706.36px;top:386.57px;width:70.63px;height:29.99px;background:#808080;border-left:1.3px solid #f2a626;border-right:0.8px solid #f2a626;border-bottom:1.2px solid #f2a626;border-radius:4px"><div class="t" style="left:1.6px;top:12.61px;font-size:10.2px;letter-spacing:-0.2px;color:#fff;-webkit-text-stroke:0.15px currentColor">DAYOFF</div></div>
<div class="blk" style="left:777.59px;top:386.57px;width:70.63px;height:29.99px;background:#808080;border-left:1.3px solid #f2a626;border-right:0.8px solid #f2a626;border-bottom:1.2px solid #f2a626;border-radius:4px"><div class="t" style="left:1.6px;top:12.61px;font-size:10.2px;letter-spacing:-0.2px;color:#fff;-webkit-text-stroke:0.15px currentColor">DAYOFF</div></div>
<div style="left:848.82px;top:386.27px;width:70.63px;height:4.20px;background:linear-gradient(90deg,#a3cbe8 0 23.54px,#0000ff 23.54px 47.09px,#a3cbe8 47.09px);border-radius:3px 3px 0 0"></div>
<div class="blk" style="left:848.82px;top:389.87px;width:70.63px;height:26.69px;background:#0000ff;border-left:1.3px solid #f2a626;border-right:0.8px solid #f2a626;border-bottom:1.2px solid #f2a626;border-radius:4px;border-top-left-radius:1px;border-top-right-radius:1px"><div class="t" style="left:1.6px;top:8.35px;font-size:11px;letter-spacing:0px;color:#fff;-webkit-text-stroke:0.15px currentColor">8AM-4:00PM</div></div>
<div style="left:920.05px;top:386.27px;width:70.63px;height:4.20px;background:linear-gradient(90deg,#a3cbe8 0 23.54px,#0000ff 23.54px 47.09px,#a3cbe8 47.09px);border-radius:3px 3px 0 0"></div>
<div class="blk" style="left:920.05px;top:389.87px;width:70.63px;height:26.69px;background:#0000ff;border-left:1.3px solid #f2a626;border-right:0.8px solid #f2a626;border-bottom:1.2px solid #f2a626;border-radius:4px;border-top-left-radius:1px;border-top-right-radius:1px"><div class="t" style="left:1.6px;top:8.35px;font-size:11px;letter-spacing:0px;color:#fff;-webkit-text-stroke:0.15px currentColor">8AM-4:00PM</div></div>
<div style="left:991.28px;top:386.27px;width:70.63px;height:4.20px;background:linear-gradient(90deg,#a3cbe8 0 23.54px,#0000ff 23.54px 47.09px,#a3cbe8 47.09px);border-radius:3px 3px 0 0"></div>
<div class="blk" style="left:991.28px;top:389.87px;width:70.63px;height:26.69px;background:#0000ff;border-left:1.3px solid #f2a626;border-right:0.8px solid #f2a626;border-bottom:1.2px solid #f2a626;border-radius:4px;border-top-left-radius:1px;border-top-right-radius:1px"><div class="t" style="left:1.6px;top:8.35px;font-size:11px;letter-spacing:0px;color:#fff;-webkit-text-stroke:0.15px currentColor">8AM-4:00PM</div></div>
<div style="left:1062.51px;top:386.27px;width:70.63px;height:4.20px;background:linear-gradient(90deg,#a3cbe8 0 23.54px,#0000ff 23.54px 47.09px,#a3cbe8 47.09px);border-radius:3px 3px 0 0"></div>
<div class="blk" style="left:1062.51px;top:389.87px;width:70.63px;height:26.69px;background:#0000ff;border-left:1.3px solid #f2a626;border-right:0.8px solid #f2a626;border-bottom:1.2px solid #f2a626;border-radius:4px;border-top-left-radius:1px;border-top-right-radius:1px"><div class="t" style="left:1.6px;top:8.35px;font-size:11px;letter-spacing:0px;color:#fff;-webkit-text-stroke:0.15px currentColor">8AM-4:00PM</div></div>
<div class="blk" style="left:1133.74px;top:386.57px;width:70.63px;height:29.99px;background:#ffff00;border-left:1.3px solid #f2a626;border-right:0.8px solid #f2a626;border-bottom:1.2px solid #f2a626;border-radius:4px"><div class="t" style="left:1.6px;top:11.65px;font-size:11px;letter-spacing:0px;color:#ff3c00;-webkit-text-stroke:0.15px currentColor">P- Holiday</div></div>
<div class="blk" style="left:1204.97px;top:386.57px;width:70.63px;height:29.99px;background:#808080;border-left:1.3px solid #f2a626;border-right:0.8px solid #f2a626;border-bottom:1.2px solid #f2a626;border-radius:4px"><div class="t" style="left:1.6px;top:12.61px;font-size:10.2px;letter-spacing:-0.2px;color:#fff;-webkit-text-stroke:0.15px currentColor">DAYOFF</div></div>
<div class="blk" style="left:1276.20px;top:386.57px;width:70.63px;height:29.99px;background:#808080;border-left:1.3px solid #f2a626;border-right:0.8px solid #f2a626;border-bottom:1.2px solid #f2a626;border-radius:4px"><div class="t" style="left:1.6px;top:12.61px;font-size:10.2px;letter-spacing:-0.2px;color:#fff;-webkit-text-stroke:0.15px currentColor">DAYOFF</div></div>
<div class="blk" style="left:1347.43px;top:386.57px;width:70.63px;height:29.99px;background:#ffff00;border-left:1.3px solid #f2a626;border-right:0.8px solid #f2a626;border-bottom:1.2px solid #f2a626;border-radius:4px"><div class="t" style="left:1.6px;top:11.65px;font-size:11px;letter-spacing:0px;color:#ff3c00;-webkit-text-stroke:0.15px currentColor">P- Holiday</div></div>
<div style="left:1418.66px;top:386.27px;width:70.63px;height:4.20px;background:linear-gradient(90deg,#a3cbe8 0 23.54px,#0000ff 23.54px 47.09px,#a3cbe8 47.09px);border-radius:3px 3px 0 0"></div>
<div class="blk" style="left:1418.66px;top:389.87px;width:70.63px;height:26.69px;background:#0000ff;border-left:1.3px solid #f2a626;border-right:0.8px solid #f2a626;border-bottom:1.2px solid #f2a626;border-radius:4px;border-top-left-radius:1px;border-top-right-radius:1px"><div class="t" style="left:1.6px;top:8.35px;font-size:11px;letter-spacing:0px;color:#fff;-webkit-text-stroke:0.15px currentColor">8AM-4:00PM</div></div>
<div style="left:1489.89px;top:386.27px;width:71.31px;height:4.20px;background:linear-gradient(90deg,#a3cbe8 0 23.77px,#0000ff 23.77px 47.54px,#a3cbe8 47.54px);border-radius:3px 3px 0 0"></div>
<div class="blk" style="left:1489.89px;top:389.87px;width:71.31px;height:26.69px;background:#0000ff;border-left:1.3px solid #f2a626;border-right:0.8px solid #f2a626;border-bottom:1.2px solid #f2a626;border-radius:4px;border-top-left-radius:1px;border-top-right-radius:1px"><div class="t" style="left:1.6px;top:8.35px;font-size:11px;letter-spacing:0px;color:#fff;-webkit-text-stroke:0.15px currentColor">8AM-4:00PM</div></div>
<div class="t" style="left:217.70px;top:424.90px;font-size:11px;font-weight:bold;color:#111;letter-spacing:0.45px;-webkit-text-stroke:0.25px #111">()-Bud, Edwardo (2)</div>
<div class="t" style="left:436.50px;top:424.90px;font-size:11px;font-weight:bold;color:#111;letter-spacing:0.6px;-webkit-text-stroke:0.25px #111">0:00</div>
<div class="t" style="left:470px;width:89.8px;text-align:right;top:424.90px;font-size:11px;font-weight:bold;color:#111;letter-spacing:0.55px;margin-right:-0.55px;-webkit-text-stroke:0.25px #111">0.00</div>
<div class="t" style="left:217.70px;top:454.60px;font-size:11px;font-weight:bold;color:#111;letter-spacing:0.45px;-webkit-text-stroke:0.25px #111">()-Catalina<span style='letter-spacing:-0.2px'>  </span>, Jolie<span style='letter-spacing:-0.2px'><span style='letter-spacing:-0.2px'>  </span> </span>(401)</div>
<div class="t" style="left:436.50px;top:454.60px;font-size:11px;font-weight:bold;color:#111;letter-spacing:0.6px;-webkit-text-stroke:0.25px #111">119:58</div>
<div class="t" style="left:470px;width:89.8px;text-align:right;top:454.60px;font-size:11px;font-weight:bold;color:#111;letter-spacing:0.55px;margin-right:-0.55px;-webkit-text-stroke:0.25px #111">2,769.13</div>
<div style="left:563.90px;top:445.65px;width:70.63px;height:4.20px;background:linear-gradient(90deg,#a3cbe8 0 38.26px,#007b00 38.26px 64.74px,#a3cbe8 64.74px);border-radius:3px 3px 0 0"></div>
<div class="blk" style="left:563.90px;top:449.25px;width:70.63px;height:26.69px;background:#007b00;border-left:1.3px solid #f2a626;border-right:0.8px solid #f2a626;border-bottom:1.2px solid #f2a626;border-radius:4px;border-top-left-radius:1px;border-top-right-radius:1px"><div class="t" style="left:1.6px;top:8.35px;font-size:11px;letter-spacing:0px;color:#fff;-webkit-text-stroke:0.15px currentColor">1PM-10PM</div></div>
<div style="left:635.13px;top:445.65px;width:70.63px;height:4.20px;background:linear-gradient(90deg,#a3cbe8 0 38.26px,#007b00 38.26px 64.74px,#a3cbe8 64.74px);border-radius:3px 3px 0 0"></div>
<div class="blk" style="left:635.13px;top:449.25px;width:70.63px;height:26.69px;background:#007b00;border-left:1.3px solid #f2a626;border-right:0.8px solid #f2a626;border-bottom:1.2px solid #f2a626;border-radius:4px;border-top-left-radius:1px;border-top-right-radius:1px"><div class="t" style="left:1.6px;top:8.35px;font-size:11px;letter-spacing:0px;color:#fff;-webkit-text-stroke:0.15px currentColor">1PM-10PM</div></div>
<div class="blk" style="left:706.36px;top:445.95px;width:70.63px;height:29.99px;background:#808080;border-left:1.3px solid #f2a626;border-right:0.8px solid #f2a626;border-bottom:1.2px solid #f2a626;border-radius:4px"><div class="t" style="left:1.6px;top:12.61px;font-size:10.2px;letter-spacing:-0.2px;color:#fff;-webkit-text-stroke:0.15px currentColor">DAYOFF</div></div>
<div class="blk" style="left:777.59px;top:445.95px;width:70.63px;height:29.99px;background:#808080;border-left:1.3px solid #f2a626;border-right:0.8px solid #f2a626;border-bottom:1.2px solid #f2a626;border-radius:4px"><div class="t" style="left:1.6px;top:12.61px;font-size:10.2px;letter-spacing:-0.2px;color:#fff;-webkit-text-stroke:0.15px currentColor">DAYOFF</div></div>
<div style="left:848.82px;top:445.65px;width:70.63px;height:4.20px;background:linear-gradient(90deg,#a3cbe8 0 38.26px,#007b00 38.26px 64.74px,#a3cbe8 64.74px);border-radius:3px 3px 0 0"></div>
<div class="blk" style="left:848.82px;top:449.25px;width:70.63px;height:26.69px;background:#007b00;border-left:1.3px solid #f2a626;border-right:0.8px solid #f2a626;border-bottom:1.2px solid #f2a626;border-radius:4px;border-top-left-radius:1px;border-top-right-radius:1px"><div class="t" style="left:1.6px;top:8.35px;font-size:11px;letter-spacing:0px;color:#fff;-webkit-text-stroke:0.15px currentColor">1PM-10PM</div></div>
<div style="left:920.05px;top:445.65px;width:70.63px;height:4.20px;background:linear-gradient(90deg,#a3cbe8 0 38.26px,#007b00 38.26px 64.74px,#a3cbe8 64.74px);border-radius:3px 3px 0 0"></div>
<div class="blk" style="left:920.05px;top:449.25px;width:70.63px;height:26.69px;background:#007b00;border-left:1.3px solid #f2a626;border-right:0.8px solid #f2a626;border-bottom:1.2px solid #f2a626;border-radius:4px;border-top-left-radius:1px;border-top-right-radius:1px"><div class="t" style="left:1.6px;top:8.35px;font-size:11px;letter-spacing:0px;color:#fff;-webkit-text-stroke:0.15px currentColor">1PM-10PM</div></div>
<div style="left:991.28px;top:445.65px;width:70.63px;height:4.20px;background:linear-gradient(90deg,#a3cbe8 0 38.26px,#007b00 38.26px 64.74px,#a3cbe8 64.74px);border-radius:3px 3px 0 0"></div>
<div class="blk" style="left:991.28px;top:449.25px;width:70.63px;height:26.69px;background:#007b00;border-left:1.3px solid #f2a626;border-right:0.8px solid #f2a626;border-bottom:1.2px solid #f2a626;border-radius:4px;border-top-left-radius:1px;border-top-right-radius:1px"><div class="t" style="left:1.6px;top:8.35px;font-size:11px;letter-spacing:0px;color:#fff;-webkit-text-stroke:0.15px currentColor">1PM-10PM</div></div>
<div style="left:1062.51px;top:445.65px;width:70.63px;height:4.20px;background:linear-gradient(90deg,#a3cbe8 0 38.26px,#007b00 38.26px 64.74px,#a3cbe8 64.74px);border-radius:3px 3px 0 0"></div>
<div class="blk" style="left:1062.51px;top:449.25px;width:70.63px;height:26.69px;background:#007b00;border-left:1.3px solid #f2a626;border-right:0.8px solid #f2a626;border-bottom:1.2px solid #f2a626;border-radius:4px;border-top-left-radius:1px;border-top-right-radius:1px"><div class="t" style="left:1.6px;top:8.35px;font-size:11px;letter-spacing:0px;color:#fff;-webkit-text-stroke:0.15px currentColor">1PM-10PM</div></div>
<div class="blk" style="left:1133.74px;top:445.95px;width:70.63px;height:29.99px;background:#ffff00;border-left:1.3px solid #f2a626;border-right:0.8px solid #f2a626;border-bottom:1.2px solid #f2a626;border-radius:4px"><div class="t" style="left:1.6px;top:11.65px;font-size:11px;letter-spacing:0px;color:#ff3c00;-webkit-text-stroke:0.15px currentColor">P- Holiday</div></div>
<div class="blk" style="left:1204.97px;top:445.95px;width:70.63px;height:29.99px;background:#808080;border-left:1.3px solid #f2a626;border-right:0.8px solid #f2a626;border-bottom:1.2px solid #f2a626;border-radius:4px"><div class="t" style="left:1.6px;top:12.61px;font-size:10.2px;letter-spacing:-0.2px;color:#fff;-webkit-text-stroke:0.15px currentColor">DAYOFF</div></div>
<div class="blk" style="left:1276.20px;top:445.95px;width:70.63px;height:29.99px;background:#808080;border-left:1.3px solid #f2a626;border-right:0.8px solid #f2a626;border-bottom:1.2px solid #f2a626;border-radius:4px"><div class="t" style="left:1.6px;top:12.61px;font-size:10.2px;letter-spacing:-0.2px;color:#fff;-webkit-text-stroke:0.15px currentColor">DAYOFF</div></div>
<div class="blk" style="left:1347.43px;top:445.95px;width:70.63px;height:29.99px;background:#ffff00;border-left:1.3px solid #f2a626;border-right:0.8px solid #f2a626;border-bottom:1.2px solid #f2a626;border-radius:4px"><div class="t" style="left:1.6px;top:11.65px;font-size:11px;letter-spacing:0px;color:#ff3c00;-webkit-text-stroke:0.15px currentColor">P- Holiday</div></div>
<div style="left:1418.66px;top:445.65px;width:70.63px;height:4.20px;background:linear-gradient(90deg,#a3cbe8 0 38.26px,#007b00 38.26px 64.74px,#a3cbe8 64.74px);border-radius:3px 3px 0 0"></div>
<div class="blk" style="left:1418.66px;top:449.25px;width:70.63px;height:26.69px;background:#007b00;border-left:1.3px solid #f2a626;border-right:0.8px solid #f2a626;border-bottom:1.2px solid #f2a626;border-radius:4px;border-top-left-radius:1px;border-top-right-radius:1px"><div class="t" style="left:1.6px;top:8.35px;font-size:11px;letter-spacing:0px;color:#fff;-webkit-text-stroke:0.15px currentColor">1PM-10PM</div></div>
<div style="left:1489.89px;top:445.65px;width:71.31px;height:4.20px;background:linear-gradient(90deg,#a3cbe8 0 38.63px,#007b00 38.63px 65.37px,#a3cbe8 65.37px);border-radius:3px 3px 0 0"></div>
<div class="blk" style="left:1489.89px;top:449.25px;width:71.31px;height:26.69px;background:#007b00;border-left:1.3px solid #f2a626;border-right:0.8px solid #f2a626;border-bottom:1.2px solid #f2a626;border-radius:4px;border-top-left-radius:1px;border-top-right-radius:1px"><div class="t" style="left:1.6px;top:8.35px;font-size:11px;letter-spacing:0px;color:#fff;-webkit-text-stroke:0.15px currentColor">1PM-10PM</div></div>
<div class="t" style="left:217.70px;top:484.28px;font-size:11px;font-weight:bold;color:#111;letter-spacing:0.45px;-webkit-text-stroke:0.25px #111">()-Cinda<span style='letter-spacing:-0.2px'>  </span>, Kaitlyn<span style='letter-spacing:-0.2px'><span style='letter-spacing:-0.2px'>  </span> </span>(10)</div>
<div class="t" style="left:436.50px;top:484.28px;font-size:11px;font-weight:bold;color:#111;letter-spacing:0.6px;-webkit-text-stroke:0.25px #111">111:58</div>
<div class="t" style="left:470px;width:89.8px;text-align:right;top:484.28px;font-size:11px;font-weight:bold;color:#111;letter-spacing:0.55px;margin-right:-0.55px;-webkit-text-stroke:0.25px #111">2,582.97</div>
<div style="left:563.90px;top:475.34px;width:70.63px;height:4.20px;background:linear-gradient(90deg,#a3cbe8 0 23.54px,#0000ff 23.54px 47.09px,#a3cbe8 47.09px);border-radius:3px 3px 0 0"></div>
<div class="blk" style="left:563.90px;top:478.94px;width:70.63px;height:26.69px;background:#0000ff;border-left:1.3px solid #f2a626;border-right:0.8px solid #f2a626;border-bottom:1.2px solid #f2a626;border-radius:4px;border-top-left-radius:1px;border-top-right-radius:1px"><div class="t" style="left:1.6px;top:8.35px;font-size:11px;letter-spacing:0px;color:#fff;-webkit-text-stroke:0.15px currentColor">8AM-4:00PM</div></div>
<div style="left:635.13px;top:475.34px;width:70.63px;height:4.20px;background:linear-gradient(90deg,#a3cbe8 0 23.54px,#0000ff 23.54px 47.09px,#a3cbe8 47.09px);border-radius:3px 3px 0 0"></div>
<div class="blk" style="left:635.13px;top:478.94px;width:70.63px;height:26.69px;background:#0000ff;border-left:1.3px solid #f2a626;border-right:0.8px solid #f2a626;border-bottom:1.2px solid #f2a626;border-radius:4px;border-top-left-radius:1px;border-top-right-radius:1px"><div class="t" style="left:1.6px;top:8.35px;font-size:11px;letter-spacing:0px;color:#fff;-webkit-text-stroke:0.15px currentColor">8AM-4:00PM</div></div>
<div class="blk" style="left:706.36px;top:475.64px;width:70.63px;height:29.99px;background:#808080;border-left:1.3px solid #f2a626;border-right:0.8px solid #f2a626;border-bottom:1.2px solid #f2a626;border-radius:4px"><div class="t" style="left:1.6px;top:12.61px;font-size:10.2px;letter-spacing:-0.2px;color:#fff;-webkit-text-stroke:0.15px currentColor">DAYOFF</div></div>
<div class="blk" style="left:777.59px;top:475.64px;width:70.63px;height:29.99px;background:#808080;border-left:1.3px solid #f2a626;border-right:0.8px solid #f2a626;border-bottom:1.2px solid #f2a626;border-radius:4px"><div class="t" style="left:1.6px;top:12.61px;font-size:10.2px;letter-spacing:-0.2px;color:#fff;-webkit-text-stroke:0.15px currentColor">DAYOFF</div></div>
<div style="left:848.82px;top:475.34px;width:70.63px;height:4.20px;background:linear-gradient(90deg,#a3cbe8 0 23.54px,#0000ff 23.54px 47.09px,#a3cbe8 47.09px);border-radius:3px 3px 0 0"></div>
<div class="blk" style="left:848.82px;top:478.94px;width:70.63px;height:26.69px;background:#0000ff;border-left:1.3px solid #f2a626;border-right:0.8px solid #f2a626;border-bottom:1.2px solid #f2a626;border-radius:4px;border-top-left-radius:1px;border-top-right-radius:1px"><div class="t" style="left:1.6px;top:8.35px;font-size:11px;letter-spacing:0px;color:#fff;-webkit-text-stroke:0.15px currentColor">8AM-4:00PM</div></div>
<div style="left:920.05px;top:475.34px;width:70.63px;height:4.20px;background:linear-gradient(90deg,#a3cbe8 0 23.54px,#0000ff 23.54px 47.09px,#a3cbe8 47.09px);border-radius:3px 3px 0 0"></div>
<div class="blk" style="left:920.05px;top:478.94px;width:70.63px;height:26.69px;background:#0000ff;border-left:1.3px solid #f2a626;border-right:0.8px solid #f2a626;border-bottom:1.2px solid #f2a626;border-radius:4px;border-top-left-radius:1px;border-top-right-radius:1px"><div class="t" style="left:1.6px;top:8.35px;font-size:11px;letter-spacing:0px;color:#fff;-webkit-text-stroke:0.15px currentColor">8AM-4:00PM</div></div>
<div style="left:991.28px;top:475.34px;width:70.63px;height:4.20px;background:linear-gradient(90deg,#a3cbe8 0 23.54px,#0000ff 23.54px 47.09px,#a3cbe8 47.09px);border-radius:3px 3px 0 0"></div>
<div class="blk" style="left:991.28px;top:478.94px;width:70.63px;height:26.69px;background:#0000ff;border-left:1.3px solid #f2a626;border-right:0.8px solid #f2a626;border-bottom:1.2px solid #f2a626;border-radius:4px;border-top-left-radius:1px;border-top-right-radius:1px"><div class="t" style="left:1.6px;top:8.35px;font-size:11px;letter-spacing:0px;color:#fff;-webkit-text-stroke:0.15px currentColor">8AM-4:00PM</div></div>
<div style="left:1062.51px;top:475.34px;width:70.63px;height:4.20px;background:linear-gradient(90deg,#a3cbe8 0 23.54px,#0000ff 23.54px 47.09px,#a3cbe8 47.09px);border-radius:3px 3px 0 0"></div>
<div class="blk" style="left:1062.51px;top:478.94px;width:70.63px;height:26.69px;background:#0000ff;border-left:1.3px solid #f2a626;border-right:0.8px solid #f2a626;border-bottom:1.2px solid #f2a626;border-radius:4px;border-top-left-radius:1px;border-top-right-radius:1px"><div class="t" style="left:1.6px;top:8.35px;font-size:11px;letter-spacing:0px;color:#fff;-webkit-text-stroke:0.15px currentColor">8AM-4:00PM</div></div>
<div class="blk" style="left:1133.74px;top:475.64px;width:70.63px;height:29.99px;background:#ffff00;border-left:1.3px solid #f2a626;border-right:0.8px solid #f2a626;border-bottom:1.2px solid #f2a626;border-radius:4px"><div class="t" style="left:1.6px;top:11.65px;font-size:11px;letter-spacing:0px;color:#ff3c00;-webkit-text-stroke:0.15px currentColor">P- Holiday</div></div>
<div class="blk" style="left:1204.97px;top:475.64px;width:70.63px;height:29.99px;background:#808080;border-left:1.3px solid #f2a626;border-right:0.8px solid #f2a626;border-bottom:1.2px solid #f2a626;border-radius:4px"><div class="t" style="left:1.6px;top:12.61px;font-size:10.2px;letter-spacing:-0.2px;color:#fff;-webkit-text-stroke:0.15px currentColor">DAYOFF</div></div>
<div class="blk" style="left:1276.20px;top:475.64px;width:70.63px;height:29.99px;background:#808080;border-left:1.3px solid #f2a626;border-right:0.8px solid #f2a626;border-bottom:1.2px solid #f2a626;border-radius:4px"><div class="t" style="left:1.6px;top:12.61px;font-size:10.2px;letter-spacing:-0.2px;color:#fff;-webkit-text-stroke:0.15px currentColor">DAYOFF</div></div>
<div class="blk" style="left:1347.43px;top:475.64px;width:70.63px;height:29.99px;background:#ffff00;border-left:1.3px solid #f2a626;border-right:0.8px solid #f2a626;border-bottom:1.2px solid #f2a626;border-radius:4px"><div class="t" style="left:1.6px;top:11.65px;font-size:11px;letter-spacing:0px;color:#ff3c00;-webkit-text-stroke:0.15px currentColor">P- Holiday</div></div>
<div style="left:1418.66px;top:475.34px;width:70.63px;height:4.20px;background:linear-gradient(90deg,#a3cbe8 0 23.54px,#0000ff 23.54px 47.09px,#a3cbe8 47.09px);border-radius:3px 3px 0 0"></div>
<div class="blk" style="left:1418.66px;top:478.94px;width:70.63px;height:26.69px;background:#0000ff;border-left:1.3px solid #f2a626;border-right:0.8px solid #f2a626;border-bottom:1.2px solid #f2a626;border-radius:4px;border-top-left-radius:1px;border-top-right-radius:1px"><div class="t" style="left:1.6px;top:8.35px;font-size:11px;letter-spacing:0px;color:#fff;-webkit-text-stroke:0.15px currentColor">8AM-4:00PM</div></div>
<div style="left:1489.89px;top:475.34px;width:71.31px;height:4.20px;background:linear-gradient(90deg,#a3cbe8 0 23.77px,#0000ff 23.77px 47.54px,#a3cbe8 47.54px);border-radius:3px 3px 0 0"></div>
<div class="blk" style="left:1489.89px;top:478.94px;width:71.31px;height:26.69px;background:#0000ff;border-left:1.3px solid #f2a626;border-right:0.8px solid #f2a626;border-bottom:1.2px solid #f2a626;border-radius:4px;border-top-left-radius:1px;border-top-right-radius:1px"><div class="t" style="left:1.6px;top:8.35px;font-size:11px;letter-spacing:0px;color:#fff;-webkit-text-stroke:0.15px currentColor">8AM-4:00PM</div></div>
<div class="t" style="left:217.70px;top:513.98px;font-size:11px;font-weight:bold;color:#111;letter-spacing:0.45px;-webkit-text-stroke:0.25px #111">()-Cinthia<span style='letter-spacing:-0.2px'>  </span>, Teressa<span style='letter-spacing:-0.2px'><span style='letter-spacing:-0.2px'>  </span> </span>(110)</div>
<div class="t" style="left:436.50px;top:513.98px;font-size:11px;font-weight:bold;color:#111;letter-spacing:0.6px;-webkit-text-stroke:0.25px #111">111:58</div>
<div class="t" style="left:470px;width:89.8px;text-align:right;top:513.98px;font-size:11px;font-weight:bold;color:#111;letter-spacing:0.55px;margin-right:-0.55px;-webkit-text-stroke:0.25px #111">2,582.97</div>
<div style="left:563.90px;top:505.03px;width:70.63px;height:4.20px;background:linear-gradient(90deg,#a3cbe8 0 23.54px,#0000ff 23.54px 47.09px,#a3cbe8 47.09px);border-radius:3px 3px 0 0"></div>
<div class="blk" style="left:563.90px;top:508.63px;width:70.63px;height:26.69px;background:#0000ff;border-left:1.3px solid #f2a626;border-right:0.8px solid #f2a626;border-bottom:1.2px solid #f2a626;border-radius:4px;border-top-left-radius:1px;border-top-right-radius:1px"><div class="t" style="left:1.6px;top:8.35px;font-size:11px;letter-spacing:0px;color:#fff;-webkit-text-stroke:0.15px currentColor">8AM-4:00PM</div></div>
<div style="left:635.13px;top:505.03px;width:70.63px;height:4.20px;background:linear-gradient(90deg,#a3cbe8 0 23.54px,#0000ff 23.54px 47.09px,#a3cbe8 47.09px);border-radius:3px 3px 0 0"></div>
<div class="blk" style="left:635.13px;top:508.63px;width:70.63px;height:26.69px;background:#0000ff;border-left:1.3px solid #f2a626;border-right:0.8px solid #f2a626;border-bottom:1.2px solid #f2a626;border-radius:4px;border-top-left-radius:1px;border-top-right-radius:1px"><div class="t" style="left:1.6px;top:8.35px;font-size:11px;letter-spacing:0px;color:#fff;-webkit-text-stroke:0.15px currentColor">8AM-4:00PM</div></div>
<div class="blk" style="left:706.36px;top:505.33px;width:70.63px;height:29.99px;background:#808080;border-left:1.3px solid #f2a626;border-right:0.8px solid #f2a626;border-bottom:1.2px solid #f2a626;border-radius:4px"><div class="t" style="left:1.6px;top:12.61px;font-size:10.2px;letter-spacing:-0.2px;color:#fff;-webkit-text-stroke:0.15px currentColor">DAYOFF</div></div>
<div class="blk" style="left:777.59px;top:505.33px;width:70.63px;height:29.99px;background:#808080;border-left:1.3px solid #f2a626;border-right:0.8px solid #f2a626;border-bottom:1.2px solid #f2a626;border-radius:4px"><div class="t" style="left:1.6px;top:12.61px;font-size:10.2px;letter-spacing:-0.2px;color:#fff;-webkit-text-stroke:0.15px currentColor">DAYOFF</div></div>
<div style="left:848.82px;top:505.03px;width:70.63px;height:4.20px;background:linear-gradient(90deg,#a3cbe8 0 23.54px,#0000ff 23.54px 47.09px,#a3cbe8 47.09px);border-radius:3px 3px 0 0"></div>
<div class="blk" style="left:848.82px;top:508.63px;width:70.63px;height:26.69px;background:#0000ff;border-left:1.3px solid #f2a626;border-right:0.8px solid #f2a626;border-bottom:1.2px solid #f2a626;border-radius:4px;border-top-left-radius:1px;border-top-right-radius:1px"><div class="t" style="left:1.6px;top:8.35px;font-size:11px;letter-spacing:0px;color:#fff;-webkit-text-stroke:0.15px currentColor">8AM-4:00PM</div></div>
<div style="left:920.05px;top:505.03px;width:70.63px;height:4.20px;background:linear-gradient(90deg,#a3cbe8 0 23.54px,#0000ff 23.54px 47.09px,#a3cbe8 47.09px);border-radius:3px 3px 0 0"></div>
<div class="blk" style="left:920.05px;top:508.63px;width:70.63px;height:26.69px;background:#0000ff;border-left:1.3px solid #f2a626;border-right:0.8px solid #f2a626;border-bottom:1.2px solid #f2a626;border-radius:4px;border-top-left-radius:1px;border-top-right-radius:1px"><div class="t" style="left:1.6px;top:8.35px;font-size:11px;letter-spacing:0px;color:#fff;-webkit-text-stroke:0.15px currentColor">8AM-4:00PM</div></div>
<div style="left:991.28px;top:505.03px;width:70.63px;height:4.20px;background:linear-gradient(90deg,#a3cbe8 0 23.54px,#0000ff 23.54px 47.09px,#a3cbe8 47.09px);border-radius:3px 3px 0 0"></div>
<div class="blk" style="left:991.28px;top:508.63px;width:70.63px;height:26.69px;background:#0000ff;border-left:1.3px solid #f2a626;border-right:0.8px solid #f2a626;border-bottom:1.2px solid #f2a626;border-radius:4px;border-top-left-radius:1px;border-top-right-radius:1px"><div class="t" style="left:1.6px;top:8.35px;font-size:11px;letter-spacing:0px;color:#fff;-webkit-text-stroke:0.15px currentColor">8AM-4:00PM</div></div>
<div style="left:1062.51px;top:505.03px;width:70.63px;height:4.20px;background:linear-gradient(90deg,#a3cbe8 0 23.54px,#0000ff 23.54px 47.09px,#a3cbe8 47.09px);border-radius:3px 3px 0 0"></div>
<div class="blk" style="left:1062.51px;top:508.63px;width:70.63px;height:26.69px;background:#0000ff;border-left:1.3px solid #f2a626;border-right:0.8px solid #f2a626;border-bottom:1.2px solid #f2a626;border-radius:4px;border-top-left-radius:1px;border-top-right-radius:1px"><div class="t" style="left:1.6px;top:8.35px;font-size:11px;letter-spacing:0px;color:#fff;-webkit-text-stroke:0.15px currentColor">8AM-4:00PM</div></div>
<div class="blk" style="left:1133.74px;top:505.33px;width:70.63px;height:29.99px;background:#ffff00;border-left:1.3px solid #f2a626;border-right:0.8px solid #f2a626;border-bottom:1.2px solid #f2a626;border-radius:4px"><div class="t" style="left:1.6px;top:11.65px;font-size:11px;letter-spacing:0px;color:#ff3c00;-webkit-text-stroke:0.15px currentColor">P- Holiday</div></div>
<div class="blk" style="left:1204.97px;top:505.33px;width:70.63px;height:29.99px;background:#808080;border-left:1.3px solid #f2a626;border-right:0.8px solid #f2a626;border-bottom:1.2px solid #f2a626;border-radius:4px"><div class="t" style="left:1.6px;top:12.61px;font-size:10.2px;letter-spacing:-0.2px;color:#fff;-webkit-text-stroke:0.15px currentColor">DAYOFF</div></div>
<div class="blk" style="left:1276.20px;top:505.33px;width:70.63px;height:29.99px;background:#808080;border-left:1.3px solid #f2a626;border-right:0.8px solid #f2a626;border-bottom:1.2px solid #f2a626;border-radius:4px"><div class="t" style="left:1.6px;top:12.61px;font-size:10.2px;letter-spacing:-0.2px;color:#fff;-webkit-text-stroke:0.15px currentColor">DAYOFF</div></div>
<div class="blk" style="left:1347.43px;top:505.33px;width:70.63px;height:29.99px;background:#ffff00;border-left:1.3px solid #f2a626;border-right:0.8px solid #f2a626;border-bottom:1.2px solid #f2a626;border-radius:4px"><div class="t" style="left:1.6px;top:11.65px;font-size:11px;letter-spacing:0px;color:#ff3c00;-webkit-text-stroke:0.15px currentColor">P- Holiday</div></div>
<div style="left:1418.66px;top:505.03px;width:70.63px;height:4.20px;background:linear-gradient(90deg,#a3cbe8 0 23.54px,#0000ff 23.54px 47.09px,#a3cbe8 47.09px);border-radius:3px 3px 0 0"></div>
<div class="blk" style="left:1418.66px;top:508.63px;width:70.63px;height:26.69px;background:#0000ff;border-left:1.3px solid #f2a626;border-right:0.8px solid #f2a626;border-bottom:1.2px solid #f2a626;border-radius:4px;border-top-left-radius:1px;border-top-right-radius:1px"><div class="t" style="left:1.6px;top:8.35px;font-size:11px;letter-spacing:0px;color:#fff;-webkit-text-stroke:0.15px currentColor">8AM-4:00PM</div></div>
<div style="left:1489.89px;top:505.03px;width:71.31px;height:4.20px;background:linear-gradient(90deg,#a3cbe8 0 23.77px,#0000ff 23.77px 47.54px,#a3cbe8 47.54px);border-radius:3px 3px 0 0"></div>
<div class="blk" style="left:1489.89px;top:508.63px;width:71.31px;height:26.69px;background:#0000ff;border-left:1.3px solid #f2a626;border-right:0.8px solid #f2a626;border-bottom:1.2px solid #f2a626;border-radius:4px;border-top-left-radius:1px;border-top-right-radius:1px"><div class="t" style="left:1.6px;top:8.35px;font-size:11px;letter-spacing:0px;color:#fff;-webkit-text-stroke:0.15px currentColor">8AM-4:00PM</div></div>
<div class="t" style="left:217.70px;top:543.67px;font-size:11px;font-weight:bold;color:#111;letter-spacing:0.45px;-webkit-text-stroke:0.25px #111">()-Clinton<span style='letter-spacing:-0.2px'>  </span>, Gabriela<span style='letter-spacing:-0.2px'><span style='letter-spacing:-0.2px'>  </span> </span>(13)</div>
<div class="t" style="left:436.50px;top:543.67px;font-size:11px;font-weight:bold;color:#111;letter-spacing:0.6px;-webkit-text-stroke:0.25px #111">39:59</div>
<div class="t" style="left:470px;width:89.8px;text-align:right;top:543.67px;font-size:11px;font-weight:bold;color:#111;letter-spacing:0.55px;margin-right:-0.55px;-webkit-text-stroke:0.25px #111">1,022.19</div>
<div style="left:563.90px;top:534.72px;width:70.63px;height:4.20px;background:linear-gradient(90deg,#a3cbe8 0 23.54px,#0000ff 23.54px 47.09px,#a3cbe8 47.09px);border-radius:3px 3px 0 0"></div>
<div class="blk" style="left:563.90px;top:538.32px;width:70.63px;height:26.69px;background:#0000ff;border-left:1.3px solid #f2a626;border-right:0.8px solid #f2a626;border-bottom:1.2px solid #f2a626;border-radius:4px;border-top-left-radius:1px;border-top-right-radius:1px"><div class="t" style="left:1.6px;top:8.35px;font-size:11px;letter-spacing:0px;color:#fff;-webkit-text-stroke:0.15px currentColor">8AM-4:00PM</div></div>
<div style="left:635.13px;top:534.72px;width:70.63px;height:4.20px;background:linear-gradient(90deg,#a3cbe8 0 23.54px,#0000ff 23.54px 47.09px,#a3cbe8 47.09px);border-radius:3px 3px 0 0"></div>
<div class="blk" style="left:635.13px;top:538.32px;width:70.63px;height:26.69px;background:#0000ff;border-left:1.3px solid #f2a626;border-right:0.8px solid #f2a626;border-bottom:1.2px solid #f2a626;border-radius:4px;border-top-left-radius:1px;border-top-right-radius:1px"><div class="t" style="left:1.6px;top:8.35px;font-size:11px;letter-spacing:0px;color:#fff;-webkit-text-stroke:0.15px currentColor">8AM-4:00PM</div></div>
<div class="blk" style="left:706.36px;top:535.02px;width:70.63px;height:29.99px;background:#808080;border-left:1.3px solid #f2a626;border-right:0.8px solid #f2a626;border-bottom:1.2px solid #f2a626;border-radius:4px"><div class="t" style="left:1.6px;top:12.61px;font-size:10.2px;letter-spacing:-0.2px;color:#fff;-webkit-text-stroke:0.15px currentColor">DAYOFF</div></div>
<div class="blk" style="left:777.59px;top:535.02px;width:70.63px;height:29.99px;background:#808080;border-left:1.3px solid #f2a626;border-right:0.8px solid #f2a626;border-bottom:1.2px solid #f2a626;border-radius:4px"><div class="t" style="left:1.6px;top:12.61px;font-size:10.2px;letter-spacing:-0.2px;color:#fff;-webkit-text-stroke:0.15px currentColor">DAYOFF</div></div>
<div style="left:848.82px;top:534.72px;width:70.63px;height:4.20px;background:#a3cbe8;border-radius:3px 3px 0 0"></div>
<div class="blk" style="left:848.82px;top:538.32px;width:70.63px;height:26.69px;background:#ffa500;border-left:1.3px solid #f2a626;border-right:0.8px solid #f2a626;border-bottom:1.2px solid #f2a626;border-radius:4px;border-top-left-radius:1px;border-top-right-radius:1px"><div class="t" style="left:1.6px;top:9.31px;font-size:10.2px;letter-spacing:-0.17px;color:#4a4a20;-webkit-text-stroke:0.15px currentColor">VAC</div></div>
<div style="left:920.05px;top:534.72px;width:70.63px;height:4.20px;background:#a3cbe8;border-radius:3px 3px 0 0"></div>
<div class="blk" style="left:920.05px;top:538.32px;width:70.63px;height:26.69px;background:#ffa500;border-left:1.3px solid #f2a626;border-right:0.8px solid #f2a626;border-bottom:1.2px solid #f2a626;border-radius:4px;border-top-left-radius:1px;border-top-right-radius:1px"><div class="t" style="left:1.6px;top:9.31px;font-size:10.2px;letter-spacing:-0.17px;color:#4a4a20;-webkit-text-stroke:0.15px currentColor">VAC</div></div>
<div style="left:991.28px;top:534.72px;width:70.63px;height:4.20px;background:#a3cbe8;border-radius:3px 3px 0 0"></div>
<div class="blk" style="left:991.28px;top:538.32px;width:70.63px;height:26.69px;background:#ffa500;border-left:1.3px solid #f2a626;border-right:0.8px solid #f2a626;border-bottom:1.2px solid #f2a626;border-radius:4px;border-top-left-radius:1px;border-top-right-radius:1px"><div class="t" style="left:1.6px;top:9.31px;font-size:10.2px;letter-spacing:-0.17px;color:#4a4a20;-webkit-text-stroke:0.15px currentColor">VAC</div></div>
<div style="left:1062.51px;top:534.72px;width:70.63px;height:4.20px;background:#a3cbe8;border-radius:3px 3px 0 0"></div>
<div class="blk" style="left:1062.51px;top:538.32px;width:70.63px;height:26.69px;background:#ffa500;border-left:1.3px solid #f2a626;border-right:0.8px solid #f2a626;border-bottom:1.2px solid #f2a626;border-radius:4px;border-top-left-radius:1px;border-top-right-radius:1px"><div class="t" style="left:1.6px;top:9.31px;font-size:10.2px;letter-spacing:-0.17px;color:#4a4a20;-webkit-text-stroke:0.15px currentColor">VAC</div></div>
<div class="blk" style="left:1133.74px;top:535.02px;width:70.63px;height:29.99px;background:#ffff00;border-left:1.3px solid #f2a626;border-right:0.8px solid #f2a626;border-bottom:1.2px solid #f2a626;border-radius:4px"><div class="t" style="left:1.6px;top:11.65px;font-size:11px;letter-spacing:0px;color:#ff3c00;-webkit-text-stroke:0.15px currentColor">P- Holiday</div></div>
<div class="blk" style="left:1204.97px;top:535.02px;width:70.63px;height:29.99px;background:#808080;border-left:1.3px solid #f2a626;border-right:0.8px solid #f2a626;border-bottom:1.2px solid #f2a626;border-radius:4px"><div class="t" style="left:1.6px;top:12.61px;font-size:10.2px;letter-spacing:-0.2px;color:#fff;-webkit-text-stroke:0.15px currentColor">DAYOFF</div></div>
<div class="blk" style="left:1276.20px;top:535.02px;width:70.63px;height:29.99px;background:#808080;border-left:1.3px solid #f2a626;border-right:0.8px solid #f2a626;border-bottom:1.2px solid #f2a626;border-radius:4px"><div class="t" style="left:1.6px;top:12.61px;font-size:10.2px;letter-spacing:-0.2px;color:#fff;-webkit-text-stroke:0.15px currentColor">DAYOFF</div></div>
<div style="left:1347.43px;top:534.72px;width:70.63px;height:4.20px;background:#a3cbe8;border-radius:3px 3px 0 0"></div>
<div class="blk" style="left:1347.43px;top:538.32px;width:70.63px;height:26.69px;background:#ffa500;border-left:1.3px solid #f2a626;border-right:0.8px solid #f2a626;border-bottom:1.2px solid #f2a626;border-radius:4px;border-top-left-radius:1px;border-top-right-radius:1px"><div class="t" style="left:1.6px;top:9.31px;font-size:10.2px;letter-spacing:-0.17px;color:#4a4a20;-webkit-text-stroke:0.15px currentColor">VAC</div></div>
<div style="left:1418.66px;top:534.72px;width:70.63px;height:4.20px;background:#a3cbe8;border-radius:3px 3px 0 0"></div>
<div class="blk" style="left:1418.66px;top:538.32px;width:70.63px;height:26.69px;background:#ffa500;border-left:1.3px solid #f2a626;border-right:0.8px solid #f2a626;border-bottom:1.2px solid #f2a626;border-radius:4px;border-top-left-radius:1px;border-top-right-radius:1px"><div class="t" style="left:1.6px;top:9.31px;font-size:10.2px;letter-spacing:-0.17px;color:#4a4a20;-webkit-text-stroke:0.15px currentColor">VAC</div></div>
<div style="left:1489.89px;top:534.72px;width:71.31px;height:4.20px;background:#a3cbe8;border-radius:3px 3px 0 0"></div>
<div class="blk" style="left:1489.89px;top:538.32px;width:71.31px;height:26.69px;background:#ffa500;border-left:1.3px solid #f2a626;border-right:0.8px solid #f2a626;border-bottom:1.2px solid #f2a626;border-radius:4px;border-top-left-radius:1px;border-top-right-radius:1px"><div class="t" style="left:1.6px;top:9.31px;font-size:10.2px;letter-spacing:-0.17px;color:#4a4a20;-webkit-text-stroke:0.15px currentColor">VAC</div></div>
<div style="left:563.90px;top:564.41px;width:70.63px;height:4.20px;background:linear-gradient(90deg,#a3cbe8 0 23.54px,#0000ff 23.54px 47.09px,#a3cbe8 47.09px);border-radius:3px 3px 0 0"></div>
<div class="blk" style="left:563.90px;top:568.01px;width:70.63px;height:26.69px;background:#0000ff;border-left:1.3px solid #f2a626;border-right:0.8px solid #f2a626;border-bottom:1.2px solid #f2a626;border-radius:4px;border-top-left-radius:1px;border-top-right-radius:1px"><div class="t" style="left:1.6px;top:8.35px;font-size:11px;letter-spacing:0px;color:#fff;-webkit-text-stroke:0.15px currentColor">8AM-4:00PM</div></div>
<div style="left:635.13px;top:564.41px;width:70.63px;height:4.20px;background:linear-gradient(90deg,#a3cbe8 0 23.54px,#0000ff 23.54px 47.09px,#a3cbe8 47.09px);border-radius:3px 3px 0 0"></div>
<div class="blk" style="left:635.13px;top:568.01px;width:70.63px;height:26.69px;background:#0000ff;border-left:1.3px solid #f2a626;border-right:0.8px solid #f2a626;border-bottom:1.2px solid #f2a626;border-radius:4px;border-top-left-radius:1px;border-top-right-radius:1px"><div class="t" style="left:1.6px;top:8.35px;font-size:11px;letter-spacing:0px;color:#fff;-webkit-text-stroke:0.15px currentColor">8AM-4:00PM</div></div>
<div class="blk" style="left:706.36px;top:564.71px;width:70.63px;height:29.99px;background:#808080;border-left:1.3px solid #f2a626;border-right:0.8px solid #f2a626;border-bottom:1.2px solid #f2a626;border-radius:4px"><div class="t" style="left:1.6px;top:12.61px;font-size:10.2px;letter-spacing:-0.2px;color:#fff;-webkit-text-stroke:0.15px currentColor">DAYOFF</div></div>
<div class="blk" style="left:777.59px;top:564.71px;width:70.63px;height:29.99px;background:#808080;border-left:1.3px solid #f2a626;border-right:0.8px solid #f2a626;border-bottom:1.2px solid #f2a626;border-radius:4px"><div class="t" style="left:1.6px;top:12.61px;font-size:10.2px;letter-spacing:-0.2px;color:#fff;-webkit-text-stroke:0.15px currentColor">DAYOFF</div></div>
<div style="left:848.82px;top:564.41px;width:70.63px;height:4.20px;background:linear-gradient(90deg,#a3cbe8 0 23.54px,#0000ff 23.54px 47.09px,#a3cbe8 47.09px);border-radius:3px 3px 0 0"></div>
<div class="blk" style="left:848.82px;top:568.01px;width:70.63px;height:26.69px;background:#0000ff;border-left:1.3px solid #f2a626;border-right:0.8px solid #f2a626;border-bottom:1.2px solid #f2a626;border-radius:4px;border-top-left-radius:1px;border-top-right-radius:1px"><div class="t" style="left:1.6px;top:8.35px;font-size:11px;letter-spacing:0px;color:#fff;-webkit-text-stroke:0.15px currentColor">8AM-4:00PM</div></div>
<div style="left:920.05px;top:564.41px;width:70.63px;height:4.20px;background:linear-gradient(90deg,#a3cbe8 0 23.54px,#0000ff 23.54px 47.09px,#a3cbe8 47.09px);border-radius:3px 3px 0 0"></div>
<div class="blk" style="left:920.05px;top:568.01px;width:70.63px;height:26.69px;background:#0000ff;border-left:1.3px solid #f2a626;border-right:0.8px solid #f2a626;border-bottom:1.2px solid #f2a626;border-radius:4px;border-top-left-radius:1px;border-top-right-radius:1px"><div class="t" style="left:1.6px;top:8.35px;font-size:11px;letter-spacing:0px;color:#fff;-webkit-text-stroke:0.15px currentColor">8AM-4:00PM</div></div>
<div style="left:991.28px;top:564.41px;width:70.63px;height:4.20px;background:linear-gradient(90deg,#a3cbe8 0 23.54px,#0000ff 23.54px 47.09px,#a3cbe8 47.09px);border-radius:3px 3px 0 0"></div>
<div class="blk" style="left:991.28px;top:568.01px;width:70.63px;height:26.69px;background:#0000ff;border-left:1.3px solid #f2a626;border-right:0.8px solid #f2a626;border-bottom:1.2px solid #f2a626;border-radius:4px;border-top-left-radius:1px;border-top-right-radius:1px"><div class="t" style="left:1.6px;top:8.35px;font-size:11px;letter-spacing:0px;color:#fff;-webkit-text-stroke:0.15px currentColor">8AM-4:00PM</div></div>
<div style="left:1062.51px;top:564.41px;width:70.63px;height:4.20px;background:linear-gradient(90deg,#a3cbe8 0 23.54px,#0000ff 23.54px 47.09px,#a3cbe8 47.09px);border-radius:3px 3px 0 0"></div>
<div class="blk" style="left:1062.51px;top:568.01px;width:70.63px;height:26.69px;background:#0000ff;border-left:1.3px solid #f2a626;border-right:0.8px solid #f2a626;border-bottom:1.2px solid #f2a626;border-radius:4px;border-top-left-radius:1px;border-top-right-radius:1px"><div class="t" style="left:1.6px;top:8.35px;font-size:11px;letter-spacing:0px;color:#fff;-webkit-text-stroke:0.15px currentColor">8AM-4:00PM</div></div>
<div class="blk" style="left:1133.74px;top:564.71px;width:70.63px;height:29.99px;background:#ffff00;border-left:1.3px solid #f2a626;border-right:0.8px solid #f2a626;border-bottom:1.2px solid #f2a626;border-radius:4px"><div class="t" style="left:1.6px;top:11.65px;font-size:11px;letter-spacing:0px;color:#ff3c00;-webkit-text-stroke:0.15px currentColor">P- Holiday</div></div>
<div class="blk" style="left:1204.97px;top:564.71px;width:70.63px;height:29.99px;background:#808080;border-left:1.3px solid #f2a626;border-right:0.8px solid #f2a626;border-bottom:1.2px solid #f2a626;border-radius:4px"><div class="t" style="left:1.6px;top:12.61px;font-size:10.2px;letter-spacing:-0.2px;color:#fff;-webkit-text-stroke:0.15px currentColor">DAYOFF</div></div>
<div class="blk" style="left:1276.20px;top:564.71px;width:70.63px;height:29.99px;background:#808080;border-left:1.3px solid #f2a626;border-right:0.8px solid #f2a626;border-bottom:1.2px solid #f2a626;border-radius:4px"><div class="t" style="left:1.6px;top:12.61px;font-size:10.2px;letter-spacing:-0.2px;color:#fff;-webkit-text-stroke:0.15px currentColor">DAYOFF</div></div>
<div class="blk" style="left:1347.43px;top:564.71px;width:70.63px;height:29.99px;background:#ffff00;border-left:1.3px solid #f2a626;border-right:0.8px solid #f2a626;border-bottom:1.2px solid #f2a626;border-radius:4px"><div class="t" style="left:1.6px;top:11.65px;font-size:11px;letter-spacing:0px;color:#ff3c00;-webkit-text-stroke:0.15px currentColor">P- Holiday</div></div>
<div style="left:1418.66px;top:564.41px;width:70.63px;height:4.20px;background:linear-gradient(90deg,#a3cbe8 0 23.54px,#0000ff 23.54px 47.09px,#a3cbe8 47.09px);border-radius:3px 3px 0 0"></div>
<div class="blk" style="left:1418.66px;top:568.01px;width:70.63px;height:26.69px;background:#0000ff;border-left:1.3px solid #f2a626;border-right:0.8px solid #f2a626;border-bottom:1.2px solid #f2a626;border-radius:4px;border-top-left-radius:1px;border-top-right-radius:1px"><div class="t" style="left:1.6px;top:8.35px;font-size:11px;letter-spacing:0px;color:#fff;-webkit-text-stroke:0.15px currentColor">8AM-4:00PM</div></div>
<div class="blk" style="left:1489.89px;top:564.71px;width:71.31px;height:29.99px;background:#ff0000;border-left:1.3px solid #f2a626;border-right:0.8px solid #f2a626;border-bottom:1.2px solid #f2a626;border-radius:4px"></div>
</div>
<div style="left:201.50px;top:101.50px;width:1360.50px;height:71.70px;background:#f5f8fb"></div>
<div style="left:563.00px;top:101.00px;width:1.00px;height:72.20px;background:#d3d3d3"></div>
<div style="left:563.50px;top:121.50px;width:998.00px;height:1.00px;background:#d3d3d3"></div>
<div style="left:563.50px;top:146.80px;width:998.00px;height:1.00px;background:#d3d3d3"></div>
<div style="left:201.50px;top:146.80px;width:362.00px;height:1.00px;background:#d3d3d3"></div>
<div style="left:201.50px;top:173.10px;width:1372.00px;height:1.00px;background:#d3d3d3"></div>
<div style="left:431.90px;top:147.30px;width:1.00px;height:26.30px;background:#d3d3d3"></div>
<div style="left:492.50px;top:147.30px;width:1.00px;height:26.30px;background:#d3d3d3"></div>
<div style="left:990.88px;top:147.30px;width:71.23px;height:26.30px;background:#dcdddf"></div>
<div style="left:563.00px;top:122.00px;width:1.00px;height:51.60px;background:#d3d3d3"></div>
<div style="left:634.23px;top:122.00px;width:1.00px;height:51.60px;background:#d3d3d3"></div>
<div style="left:705.46px;top:122.00px;width:1.00px;height:51.60px;background:#d3d3d3"></div>
<div style="left:776.69px;top:122.00px;width:1.00px;height:51.60px;background:#d3d3d3"></div>
<div style="left:847.92px;top:122.00px;width:1.00px;height:51.60px;background:#d3d3d3"></div>
<div style="left:919.15px;top:122.00px;width:1.00px;height:51.60px;background:#d3d3d3"></div>
<div style="left:990.38px;top:122.00px;width:1.00px;height:51.60px;background:#d3d3d3"></div>
<div style="left:1061.61px;top:122.00px;width:1.00px;height:51.60px;background:#d3d3d3"></div>
<div style="left:1132.84px;top:122.00px;width:1.00px;height:51.60px;background:#d3d3d3"></div>
<div style="left:1204.07px;top:122.00px;width:1.00px;height:51.60px;background:#d3d3d3"></div>
<div style="left:1275.30px;top:122.00px;width:1.00px;height:51.60px;background:#d3d3d3"></div>
<div style="left:1346.53px;top:122.00px;width:1.00px;height:51.60px;background:#d3d3d3"></div>
<div style="left:1417.76px;top:122.00px;width:1.00px;height:51.60px;background:#d3d3d3"></div>
<div style="left:1488.99px;top:122.00px;width:1.00px;height:51.60px;background:#d3d3d3"></div>
<div style="left:1560.90px;top:122.00px;width:1.00px;height:51.60px;background:#d3d3d3"></div>
<div style="left:563.00px;top:100.80px;width:1.00px;height:21.20px;background:#d3d3d3"></div>
<div class="t" style="left:563.50px;width:213.69px;text-align:center;top:106.30px;font-size:11px;font-weight:bold;color:#111;letter-spacing:0.65px;-webkit-text-stroke:0.25px #111">11 April 19</div>
<div style="left:776.69px;top:100.80px;width:1.00px;height:21.20px;background:#d3d3d3"></div>
<div class="t" style="left:777.19px;width:498.61px;text-align:center;top:106.30px;font-size:11px;font-weight:bold;color:#111;letter-spacing:0.65px;-webkit-text-stroke:0.25px #111">14 April 19</div>
<div style="left:1275.30px;top:100.80px;width:1.00px;height:21.20px;background:#d3d3d3"></div>
<div class="t" style="left:1275.80px;width:285.60px;text-align:center;top:106.30px;font-size:11px;font-weight:bold;color:#111;letter-spacing:0.65px;-webkit-text-stroke:0.25px #111">21 April 19</div>
<div style="left:1560.90px;top:100.80px;width:1.00px;height:72.80px;background:#d3d3d3"></div>
<div class="t" style="left:563.50px;width:71.23px;text-align:center;top:129.80px;font-size:11px;font-weight:bold;color:#111;letter-spacing:0.3px;-webkit-text-stroke:0.25px #111">Th</div>
<div class="t" style="left:563.50px;width:71.23px;text-align:center;top:155.30px;font-size:11px;font-weight:bold;color:#111;letter-spacing:0.6px;-webkit-text-stroke:0.25px #111">11</div>
<div class="t" style="left:634.73px;width:71.23px;text-align:center;top:129.80px;font-size:11px;font-weight:bold;color:#111;letter-spacing:0.3px;-webkit-text-stroke:0.25px #111">Fr</div>
<div class="t" style="left:634.73px;width:71.23px;text-align:center;top:155.30px;font-size:11px;font-weight:bold;color:#111;letter-spacing:0.6px;-webkit-text-stroke:0.25px #111">12</div>
<div class="t" style="left:705.96px;width:71.23px;text-align:center;top:129.80px;font-size:11px;font-weight:bold;color:#111;letter-spacing:0.3px;-webkit-text-stroke:0.25px #111">Sa</div>
<div class="t" style="left:705.96px;width:71.23px;text-align:center;top:155.30px;font-size:11px;font-weight:bold;color:#111;letter-spacing:0.6px;-webkit-text-stroke:0.25px #111">13</div>
<div class="t" style="left:777.19px;width:71.23px;text-align:center;top:129.80px;font-size:11px;font-weight:bold;color:#111;letter-spacing:0.3px;-webkit-text-stroke:0.25px #111">Su</div>
<div class="t" style="left:777.19px;width:71.23px;text-align:center;top:155.30px;font-size:11px;font-weight:bold;color:#111;letter-spacing:0.6px;-webkit-text-stroke:0.25px #111">14</div>
<div class="t" style="left:848.42px;width:71.23px;text-align:center;top:129.80px;font-size:11px;font-weight:bold;color:#111;letter-spacing:0.3px;-webkit-text-stroke:0.25px #111">Mo</div>
<div class="t" style="left:848.42px;width:71.23px;text-align:center;top:155.30px;font-size:11px;font-weight:bold;color:#111;letter-spacing:0.6px;-webkit-text-stroke:0.25px #111">15</div>
<div class="t" style="left:919.65px;width:71.23px;text-align:center;top:129.80px;font-size:11px;font-weight:bold;color:#111;letter-spacing:0.3px;-webkit-text-stroke:0.25px #111">Tu</div>
<div class="t" style="left:919.65px;width:71.23px;text-align:center;top:155.30px;font-size:11px;font-weight:bold;color:#111;letter-spacing:0.6px;-webkit-text-stroke:0.25px #111">16</div>
<div class="t" style="left:990.88px;width:71.23px;text-align:center;top:129.80px;font-size:11px;font-weight:bold;color:#111;letter-spacing:0.3px;-webkit-text-stroke:0.25px #111">We</div>
<div class="t" style="left:990.88px;width:71.23px;text-align:center;top:155.30px;font-size:11px;font-weight:bold;color:#111;letter-spacing:0.6px;-webkit-text-stroke:0.25px #111">17</div>
<div class="t" style="left:1062.11px;width:71.23px;text-align:center;top:129.80px;font-size:11px;font-weight:bold;color:#111;letter-spacing:0.3px;-webkit-text-stroke:0.25px #111">Th</div>
<div class="t" style="left:1062.11px;width:71.23px;text-align:center;top:155.30px;font-size:11px;font-weight:bold;color:#111;letter-spacing:0.6px;-webkit-text-stroke:0.25px #111">18</div>
<div class="t" style="left:1133.34px;width:71.23px;text-align:center;top:129.80px;font-size:11px;font-weight:bold;color:#111;letter-spacing:0.3px;-webkit-text-stroke:0.25px #111">Fr</div>
<div class="t" style="left:1133.34px;width:71.23px;text-align:center;top:155.30px;font-size:11px;font-weight:bold;color:#111;letter-spacing:0.6px;-webkit-text-stroke:0.25px #111">19</div>
<div class="t" style="left:1204.57px;width:71.23px;text-align:center;top:129.80px;font-size:11px;font-weight:bold;color:#111;letter-spacing:0.3px;-webkit-text-stroke:0.25px #111">Sa</div>
<div class="t" style="left:1204.57px;width:71.23px;text-align:center;top:155.30px;font-size:11px;font-weight:bold;color:#111;letter-spacing:0.6px;-webkit-text-stroke:0.25px #111">20</div>
<div class="t" style="left:1275.80px;width:71.23px;text-align:center;top:129.80px;font-size:11px;font-weight:bold;color:#111;letter-spacing:0.3px;-webkit-text-stroke:0.25px #111">Su</div>
<div class="t" style="left:1275.80px;width:71.23px;text-align:center;top:155.30px;font-size:11px;font-weight:bold;color:#111;letter-spacing:0.6px;-webkit-text-stroke:0.25px #111">21</div>
<div class="t" style="left:1347.03px;width:71.23px;text-align:center;top:129.80px;font-size:11px;font-weight:bold;color:#111;letter-spacing:0.3px;-webkit-text-stroke:0.25px #111">Mo</div>
<div class="t" style="left:1347.03px;width:71.23px;text-align:center;top:155.30px;font-size:11px;font-weight:bold;color:#111;letter-spacing:0.6px;-webkit-text-stroke:0.25px #111">22</div>
<div class="t" style="left:1418.26px;width:71.23px;text-align:center;top:129.80px;font-size:11px;font-weight:bold;color:#111;letter-spacing:0.3px;-webkit-text-stroke:0.25px #111">Tu</div>
<div class="t" style="left:1418.26px;width:71.23px;text-align:center;top:155.30px;font-size:11px;font-weight:bold;color:#111;letter-spacing:0.6px;-webkit-text-stroke:0.25px #111">23</div>
<div class="t" style="left:1489.49px;width:71.91px;text-align:center;top:129.80px;font-size:11px;font-weight:bold;color:#111;letter-spacing:0.3px;-webkit-text-stroke:0.25px #111">We</div>
<div class="t" style="left:1489.49px;width:71.91px;text-align:center;top:155.30px;font-size:11px;font-weight:bold;color:#111;letter-spacing:0.6px;-webkit-text-stroke:0.25px #111">24</div>
<div class="t" style="left:203.50px;top:155.30px;font-size:11px;font-weight:bold;color:#111;letter-spacing:0.2px;-webkit-text-stroke:0.25px #111">Branch|Dept|Employee Info</div>
<div class="t" style="left:434.70px;top:155.30px;font-size:11px;font-weight:bold;color:#111;letter-spacing:0.6px;-webkit-text-stroke:0.25px #111">Σ Hours</div>
<div class="t" style="left:495.30px;top:155.30px;font-size:11px;font-weight:bold;color:#111;letter-spacing:0.3px;-webkit-text-stroke:0.25px #111">Σ Cost</div>
<div style="left:1562.00px;top:173.20px;width:11.20px;height:575.00px;background:#e9ecef"></div>
<div style="left:1564.60px;top:183.90px;width:6.00px;height:28.40px;background:#ccd1d8;border-radius:1px"></div>
<svg style="position:absolute;left:1564px;top:176px" width="7" height="4" viewBox="0 0 7 4"><path d="M0.5 3.5 L3.5 0.6 L6.5 3.5" fill="none" stroke="#bfc4c9" stroke-width="0.9"/></svg>
<div style="left:1573.20px;top:51.00px;width:1.20px;height:697.00px;background:#c8c8c8"></div>
<div style="left:1574.40px;top:0.00px;width:1.20px;height:776.00px;background:#fff"></div>
<div style="left:1575.50px;top:0.00px;width:1.50px;height:776.00px;background:#000"></div>
<div class="badge" style="left:1.95px;top:38.00px;width:36.70px;height:30.00px;font-size:15.5px;padding-left:4px;padding-top:1px">1</div>
<div class="badge" style="left:177.15px;top:240.90px;width:33.50px;height:27.00px;font-size:13.5px;padding-left:2.5px;padding-top:0.6px">2</div>
<div class="badge" style="left:0.00px;top:283.00px;width:34.00px;height:28.00px;font-size:13.5px;padding-left:2.5px;padding-top:0.6px">3</div>
<div class="badge" style="left:175.25px;top:302.00px;width:33.50px;height:26.40px;font-size:13.5px;padding-left:2.5px;padding-top:0.6px">4</div>
<div class="badge" style="left:176.85px;top:431.40px;width:33.70px;height:27.40px;font-size:13.5px;padding-left:2.5px;padding-top:0.6px">5</div>
<div class="badge" style="left:473.20px;top:58.20px;width:33.80px;height:27.80px;font-size:13.5px;padding-left:2.5px;padding-top:0.6px">6</div>
<div class="badge" style="left:671.15px;top:58.20px;width:33.70px;height:27.80px;font-size:13.5px;padding-left:2.5px;padding-top:0.6px">7</div>
<div class="badge" style="left:884.70px;top:59.45px;width:33.80px;height:27.30px;font-size:13.5px;padding-left:2.5px;padding-top:0.6px">8</div>
<div class="badge" style="left:1115.20px;top:58.20px;width:33.80px;height:27.80px;font-size:13.5px;padding-left:2.5px;padding-top:0.6px">9</div>
<div class="badge" style="left:1271.15px;top:58.50px;width:44.90px;height:35.60px;font-size:12px;padding-left:1.5px;padding-top:1.2px">10</div>
<div class="badge" style="left:1514.00px;top:57.15px;width:45.00px;height:35.70px;font-size:12px;padding-left:1.5px;padding-top:1.2px">11</div>
<div class="badge" style="left:369.70px;top:143.40px;width:45.00px;height:34.80px;font-size:12px;padding-left:0px;padding-top:1.6px">12</div>
<div style="left:988.5px;top:327px;width:239px;height:205px;border-radius:50%;background:rgba(15,115,245,0.5);border:2px solid rgba(175,205,240,0.9)"></div>
<svg style="position:absolute;left:0;top:0" width="1577" height="776"><path d="M1066 379.3 L1075 379.3 L1075 436.2 L1088.1 436.2 L1088.1 442.5 L1051.9 442.5 L1051.9 436.2 L1066 436.2 L1066 388 L1051.4 395.5 L1051.4 389.5 Z" fill="#fff"/></svg>
<div class="t" style="left:1095.7px;top:365.9px;font-size:90px;color:#fff;-webkit-text-stroke:0.9px #fff;transform:scaleX(0.92);transform-origin:0 0">3</div>
<div style="left:1498.7px;top:723.7px;width:75px;height:41.3px;border-radius:21px;background:linear-gradient(20deg,#0a4fa8,#0b7ff0)"></div>
<svg style="position:absolute;left:1510px;top:736.3px" width="18" height="18" viewBox="0 0 18 18"><g fill="none" stroke="#fff" stroke-width="1.35" stroke-linecap="round"><rect x="1.6" y="1.6" width="14.8" height="14.8" rx="6" transform="rotate(12 9 9)"/><rect x="6.6" y="6.6" width="4.8" height="4.8" rx="1.6" transform="rotate(12 9 9)"/><g transform="rotate(12 9 9)"><path d="M7.6 2 L7.6 6.4 M10.4 2 L10.4 6.4 M7.6 11.6 L7.6 16 M10.4 11.6 L10.4 16 M2 7.6 L6.4 7.6 M2 10.4 L6.4 10.4 M11.6 7.6 L16 7.6 M11.6 10.4 L16 10.4"/></g></g></svg>
<div class="t" style="left:1536.30px;top:739.80px;font-size:12px;font-weight:bold;color:#fff">Help</div>
</body></html>
